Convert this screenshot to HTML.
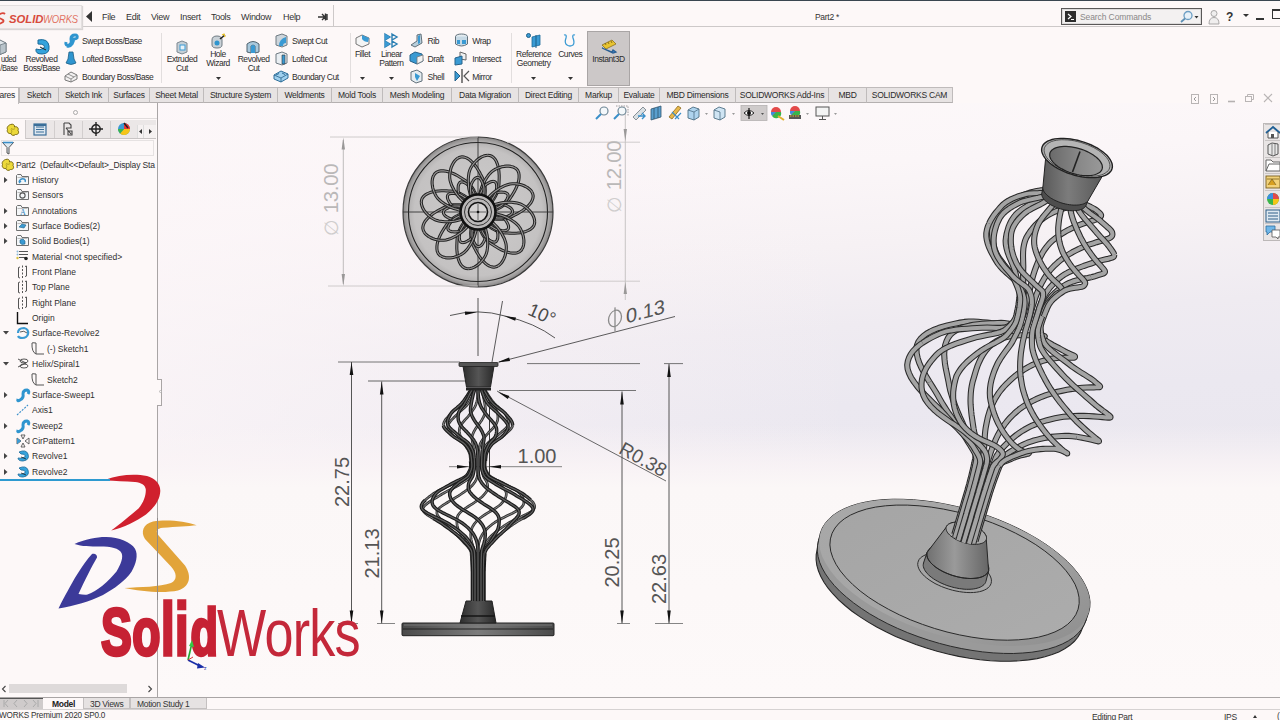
<!DOCTYPE html>
<html><head><meta charset="utf-8">
<style>
*{box-sizing:border-box}
html,body{margin:0;padding:0}
body{width:1280px;height:720px;overflow:hidden;position:relative;background:#fdf8f8;font-family:"Liberation Sans",sans-serif;color:#333}
.a{position:absolute}
svg.a{overflow:visible}
.t{position:absolute;white-space:nowrap;font-size:9px;letter-spacing:-0.3px;color:#3a3a3a;line-height:10px}
.mn{top:12px;color:#333}
.rl{position:absolute;white-space:nowrap;font-size:8.5px;letter-spacing:-0.45px;line-height:10px;color:#2c2c2c;transform:translateX(-50%)}
.rs{position:absolute;white-space:nowrap;font-size:8.5px;letter-spacing:-0.45px;line-height:10px;color:#2c2c2c}
.tr{position:absolute;white-space:nowrap;font-size:8.5px;line-height:11px;color:#2f2f2f}
#topline{left:0;top:0;width:1280px;height:1px;background:#3a4650}
#menubar{left:0;top:1px;width:1280px;height:26px;background:#fdf8f8}
.tab{position:absolute;top:87px;height:16px;background:#e7e3e3;border:1px solid #bfbbbb;border-bottom-color:#b4b0b0;font-size:8.5px;letter-spacing:-0.25px;line-height:15px;text-align:center;color:#2a2a2a;white-space:nowrap;overflow:hidden}
.tab.act{background:#fdf8f8;border-bottom:none;border-left:none}
</style></head>
<body>
<div class="a" style="left:158px;top:103px;width:1122px;height:594px;background:linear-gradient(176deg,#fdf9fa 0px,#fbf6f8 110px,#f6f1f4 190px,#efebf1 270px,#ebe8f0 350px,#eae7ef 430px,#eae7ef 600px)"></div>
<div class="a" style="left:158px;top:103px;width:1122px;height:594px;background:linear-gradient(90deg,rgba(252,246,248,.75) 0px,rgba(250,243,246,.35) 400px,rgba(250,243,246,0) 700px)"></div>
<div class="a" style="left:158px;top:103px;width:1122px;height:594px;background:linear-gradient(180deg,rgba(252,248,248,0) 0px,rgba(252,248,248,0) 322px,rgba(250,244,246,.8) 362px,#fbf7f7 385px,#fdf9f9 594px)"></div>
<div class="a" style="left:0;top:103px;width:157px;height:594px;background:#fdf8f8"></div>
<div class="a" style="left:157px;top:103px;width:1px;height:594px;background:#a9a5a5"></div>

<svg class="a" style="left:0;top:0" width="1280" height="720"><defs><radialGradient id="gdisk" cx="0.5" cy="0.5" r="0.5"><stop offset="0" stop-color="#cdcbcb"/><stop offset=".85" stop-color="#c4c2c2"/><stop offset=".93" stop-color="#b4b2b2"/><stop offset="1" stop-color="#8a8888"/></radialGradient><linearGradient id="gfcup" x1="0" x2="1"><stop offset="0" stop-color="#2e2e2e"/><stop offset=".5" stop-color="#555"/><stop offset="1" stop-color="#2a2a2a"/></linearGradient><linearGradient id="gbase" x1="0" x2="1"><stop offset="0" stop-color="#4a4a4a"/><stop offset=".5" stop-color="#7c7c7c"/><stop offset="1" stop-color="#4a4a4a"/></linearGradient></defs>
<circle cx="478" cy="212" r="75" fill="url(#gdisk)" stroke="#3a3a3a" stroke-width="1.2"/>
<circle cx="478" cy="212" r="69.5" fill="none" stroke="#222" stroke-width="1.1"/>
<path d="M403 212 H553 M478 137 V287" stroke="#333" stroke-width="0.9"/>
<g fill="none" stroke-linejoin="round"><defs><path id="t0" d="M484.0 212.0 484.0 212.0 484.0 212.0 484.0 212.0 484.0 212.0 484.0 212.0 484.0 212.0 484.0 212.0 484.0 212.0 484.0 212.0 484.0 212.0 484.0 212.0 484.0 212.0 484.0 212.0 484.0 212.0 484.0 212.0 484.0 212.0 484.0 212.0 484.0 212.0 484.0 212.0 484.0 212.0 484.0 212.0 484.0 212.0 484.1 212.0 484.1 212.0 484.1 212.0 484.2 212.0 484.2 212.0 484.3 212.0 484.3 212.0 484.4 212.0 484.5 212.0 484.5 212.0 484.6 212.0 484.7 212.0 484.8 212.0 484.9 212.0 485.1 212.0 485.7 212.0 486.4 211.9 487.4 211.8 488.5 211.7 489.7 211.5 491.0 211.3 492.2 211.0 493.5 210.6 494.6 210.2 495.9 209.7 497.3 209.1 498.6 208.4 500.1 207.7 501.5 206.8 503.0 205.7 504.4 204.6 505.8 203.4 507.2 202.0 508.5 200.5 509.7 198.9 510.8 197.2 512.0 195.3 513.3 193.2 514.7 190.9 516.0 188.3 517.1 185.7 518.1 183.0 518.8 180.2 519.1 177.5 519.1 174.9 518.7 172.6 517.8 170.6 516.5 169.0 514.8 167.8"/></defs><use href="#t0" stroke="#222" stroke-width="3.1"/><use href="#t0" stroke="#999797" stroke-width="1.1"/><defs><path id="t1" d="M483.2 209.0 483.2 209.0 483.2 209.0 483.2 209.0 483.2 209.0 483.2 209.0 483.2 209.0 483.2 209.0 483.2 209.0 483.2 209.0 483.2 209.0 483.2 209.0 483.2 209.0 483.2 209.0 483.2 209.0 483.2 209.0 483.2 209.0 483.2 209.0 483.2 209.0 483.2 209.0 483.2 209.0 483.2 209.0 483.2 209.0 483.2 209.0 483.3 209.0 483.3 208.9 483.3 208.9 483.4 208.9 483.4 208.9 483.5 208.8 483.5 208.8 483.6 208.8 483.7 208.7 483.7 208.7 483.8 208.6 483.9 208.6 484.0 208.5 484.2 208.4 484.6 208.1 485.2 207.7 486.0 207.1 486.9 206.5 487.9 205.7 488.9 204.9 489.8 204.0 490.7 203.1 491.5 202.1 492.4 201.1 493.2 199.9 494.1 198.6 494.9 197.2 495.7 195.7 496.5 194.1 497.2 192.4 497.8 190.6 498.3 188.7 498.6 186.8 498.9 184.8 499.0 182.8 499.1 180.6 499.2 178.1 499.2 175.4 499.0 172.5 498.7 169.6 498.2 166.8 497.4 164.1 496.4 161.6 495.1 159.3 493.5 157.5 491.8 156.2 489.8 155.5 487.8 155.3"/></defs><use href="#t1" stroke="#222" stroke-width="3.1"/><use href="#t1" stroke="#999797" stroke-width="1.1"/><defs><path id="t2" d="M481.0 206.8 481.0 206.8 481.0 206.8 481.0 206.8 481.0 206.8 481.0 206.8 481.0 206.8 481.0 206.8 481.0 206.8 481.0 206.8 481.0 206.8 481.0 206.8 481.0 206.8 481.0 206.8 481.0 206.8 481.0 206.8 481.0 206.8 481.0 206.8 481.0 206.8 481.0 206.8 481.0 206.8 481.0 206.8 481.0 206.8 481.0 206.8 481.0 206.7 481.1 206.7 481.1 206.7 481.1 206.6 481.1 206.6 481.2 206.5 481.2 206.5 481.2 206.4 481.3 206.3 481.3 206.3 481.4 206.2 481.4 206.1 481.5 206.0 481.6 205.8 481.8 205.3 482.1 204.6 482.5 203.8 483.0 202.7 483.4 201.6 483.9 200.4 484.2 199.2 484.5 197.9 484.8 196.7 485.0 195.3 485.1 193.9 485.2 192.3 485.3 190.7 485.2 189.0 485.1 187.2 484.8 185.4 484.4 183.6 483.9 181.7 483.3 179.9 482.5 178.0 481.6 176.2 480.5 174.2 479.4 172.0 478.0 169.7 476.5 167.3 474.8 165.0 472.9 162.8 470.8 160.8 468.7 159.1 466.5 157.9 464.2 157.1 462.0 156.8 460.0 157.2 458.1 158.0"/></defs><use href="#t2" stroke="#222" stroke-width="3.1"/><use href="#t2" stroke="#999797" stroke-width="1.1"/><defs><path id="t3" d="M478.0 206.0 478.0 206.0 478.0 206.0 478.0 206.0 478.0 206.0 478.0 206.0 478.0 206.0 478.0 206.0 478.0 206.0 478.0 206.0 478.0 206.0 478.0 206.0 478.0 206.0 478.0 206.0 478.0 206.0 478.0 206.0 478.0 206.0 478.0 206.0 478.0 206.0 478.0 206.0 478.0 206.0 478.0 206.0 478.0 206.0 478.0 205.9 478.0 205.9 478.0 205.9 478.0 205.8 478.0 205.8 478.0 205.7 478.0 205.7 478.0 205.6 478.0 205.5 478.0 205.5 478.0 205.4 478.0 205.3 478.0 205.2 478.0 205.1 478.0 204.9 478.0 204.3 477.9 203.6 477.8 202.6 477.7 201.5 477.5 200.3 477.3 199.0 477.0 197.8 476.6 196.5 476.2 195.4 475.7 194.1 475.1 192.7 474.4 191.4 473.7 189.9 472.8 188.5 471.7 187.0 470.6 185.6 469.4 184.2 468.0 182.8 466.5 181.5 464.9 180.3 463.2 179.2 461.3 178.0 459.2 176.7 456.9 175.3 454.3 174.0 451.7 172.9 449.0 171.9 446.2 171.2 443.5 170.9 440.9 170.9 438.6 171.3 436.6 172.2 435.0 173.5 433.8 175.2"/></defs><use href="#t3" stroke="#222" stroke-width="3.1"/><use href="#t3" stroke="#999797" stroke-width="1.1"/><defs><path id="t4" d="M475.0 206.8 475.0 206.8 475.0 206.8 475.0 206.8 475.0 206.8 475.0 206.8 475.0 206.8 475.0 206.8 475.0 206.8 475.0 206.8 475.0 206.8 475.0 206.8 475.0 206.8 475.0 206.8 475.0 206.8 475.0 206.8 475.0 206.8 475.0 206.8 475.0 206.8 475.0 206.8 475.0 206.8 475.0 206.8 475.0 206.8 475.0 206.8 475.0 206.7 474.9 206.7 474.9 206.7 474.9 206.6 474.9 206.6 474.8 206.5 474.8 206.5 474.8 206.4 474.7 206.3 474.7 206.3 474.6 206.2 474.6 206.1 474.5 206.0 474.4 205.8 474.1 205.4 473.7 204.8 473.1 204.0 472.5 203.1 471.7 202.1 470.9 201.1 470.0 200.2 469.1 199.3 468.1 198.5 467.1 197.6 465.9 196.8 464.6 195.9 463.2 195.1 461.7 194.3 460.1 193.5 458.4 192.8 456.6 192.2 454.7 191.7 452.8 191.4 450.8 191.1 448.8 191.0 446.6 190.9 444.1 190.8 441.4 190.8 438.5 191.0 435.6 191.3 432.8 191.8 430.1 192.6 427.6 193.6 425.3 194.9 423.5 196.5 422.2 198.2 421.5 200.2 421.3 202.2"/></defs><use href="#t4" stroke="#222" stroke-width="3.1"/><use href="#t4" stroke="#999797" stroke-width="1.1"/><defs><path id="t5" d="M472.8 209.0 472.8 209.0 472.8 209.0 472.8 209.0 472.8 209.0 472.8 209.0 472.8 209.0 472.8 209.0 472.8 209.0 472.8 209.0 472.8 209.0 472.8 209.0 472.8 209.0 472.8 209.0 472.8 209.0 472.8 209.0 472.8 209.0 472.8 209.0 472.8 209.0 472.8 209.0 472.8 209.0 472.8 209.0 472.8 209.0 472.8 209.0 472.7 209.0 472.7 208.9 472.7 208.9 472.6 208.9 472.6 208.9 472.5 208.8 472.5 208.8 472.4 208.8 472.3 208.7 472.3 208.7 472.2 208.6 472.1 208.6 472.0 208.5 471.8 208.4 471.3 208.2 470.6 207.9 469.8 207.5 468.7 207.0 467.6 206.6 466.4 206.1 465.2 205.8 463.9 205.5 462.7 205.2 461.3 205.0 459.9 204.9 458.3 204.8 456.7 204.7 455.0 204.8 453.2 204.9 451.4 205.2 449.6 205.6 447.7 206.1 445.9 206.7 444.0 207.5 442.2 208.4 440.2 209.5 438.0 210.6 435.7 212.0 433.3 213.5 431.0 215.2 428.8 217.1 426.8 219.2 425.1 221.3 423.9 223.5 423.1 225.8 422.8 228.0 423.2 230.0 424.0 231.9"/></defs><use href="#t5" stroke="#222" stroke-width="3.1"/><use href="#t5" stroke="#999797" stroke-width="1.1"/><defs><path id="t6" d="M472.0 212.0 472.0 212.0 472.0 212.0 472.0 212.0 472.0 212.0 472.0 212.0 472.0 212.0 472.0 212.0 472.0 212.0 472.0 212.0 472.0 212.0 472.0 212.0 472.0 212.0 472.0 212.0 472.0 212.0 472.0 212.0 472.0 212.0 472.0 212.0 472.0 212.0 472.0 212.0 472.0 212.0 472.0 212.0 472.0 212.0 471.9 212.0 471.9 212.0 471.9 212.0 471.8 212.0 471.8 212.0 471.7 212.0 471.7 212.0 471.6 212.0 471.5 212.0 471.5 212.0 471.4 212.0 471.3 212.0 471.2 212.0 471.1 212.0 470.9 212.0 470.3 212.0 469.6 212.1 468.6 212.2 467.5 212.3 466.3 212.5 465.0 212.7 463.8 213.0 462.5 213.4 461.4 213.8 460.1 214.3 458.7 214.9 457.4 215.6 455.9 216.3 454.5 217.2 453.0 218.3 451.6 219.4 450.2 220.6 448.8 222.0 447.5 223.5 446.3 225.1 445.2 226.8 444.0 228.7 442.7 230.8 441.3 233.1 440.0 235.7 438.9 238.3 437.9 241.0 437.2 243.8 436.9 246.5 436.9 249.1 437.3 251.4 438.2 253.4 439.5 255.0 441.2 256.2"/></defs><use href="#t6" stroke="#222" stroke-width="3.1"/><use href="#t6" stroke="#999797" stroke-width="1.1"/><defs><path id="t7" d="M472.8 215.0 472.8 215.0 472.8 215.0 472.8 215.0 472.8 215.0 472.8 215.0 472.8 215.0 472.8 215.0 472.8 215.0 472.8 215.0 472.8 215.0 472.8 215.0 472.8 215.0 472.8 215.0 472.8 215.0 472.8 215.0 472.8 215.0 472.8 215.0 472.8 215.0 472.8 215.0 472.8 215.0 472.8 215.0 472.8 215.0 472.8 215.0 472.7 215.0 472.7 215.1 472.7 215.1 472.6 215.1 472.6 215.1 472.5 215.2 472.5 215.2 472.4 215.2 472.3 215.3 472.3 215.3 472.2 215.4 472.1 215.4 472.0 215.5 471.8 215.6 471.4 215.9 470.8 216.3 470.0 216.9 469.1 217.5 468.1 218.3 467.1 219.1 466.2 220.0 465.3 220.9 464.5 221.9 463.6 222.9 462.8 224.1 461.9 225.4 461.1 226.8 460.3 228.3 459.5 229.9 458.8 231.6 458.2 233.4 457.7 235.3 457.4 237.2 457.1 239.2 457.0 241.2 456.9 243.4 456.8 245.9 456.8 248.6 457.0 251.5 457.3 254.4 457.8 257.2 458.6 259.9 459.6 262.4 460.9 264.7 462.5 266.5 464.2 267.8 466.2 268.5 468.2 268.7"/></defs><use href="#t7" stroke="#222" stroke-width="3.1"/><use href="#t7" stroke="#999797" stroke-width="1.1"/><defs><path id="t8" d="M475.0 217.2 475.0 217.2 475.0 217.2 475.0 217.2 475.0 217.2 475.0 217.2 475.0 217.2 475.0 217.2 475.0 217.2 475.0 217.2 475.0 217.2 475.0 217.2 475.0 217.2 475.0 217.2 475.0 217.2 475.0 217.2 475.0 217.2 475.0 217.2 475.0 217.2 475.0 217.2 475.0 217.2 475.0 217.2 475.0 217.2 475.0 217.2 475.0 217.3 474.9 217.3 474.9 217.3 474.9 217.4 474.9 217.4 474.8 217.5 474.8 217.5 474.8 217.6 474.7 217.7 474.7 217.7 474.6 217.8 474.6 217.9 474.5 218.0 474.4 218.2 474.2 218.7 473.9 219.4 473.5 220.2 473.0 221.3 472.6 222.4 472.1 223.6 471.8 224.8 471.5 226.1 471.2 227.3 471.0 228.7 470.9 230.1 470.8 231.7 470.7 233.3 470.8 235.0 470.9 236.8 471.2 238.6 471.6 240.4 472.1 242.3 472.7 244.1 473.5 246.0 474.4 247.8 475.5 249.8 476.6 252.0 478.0 254.3 479.5 256.7 481.2 259.0 483.1 261.2 485.2 263.2 487.3 264.9 489.5 266.1 491.8 266.9 494.0 267.2 496.0 266.8 497.9 266.0"/></defs><use href="#t8" stroke="#222" stroke-width="3.1"/><use href="#t8" stroke="#999797" stroke-width="1.1"/><defs><path id="t9" d="M478.0 218.0 478.0 218.0 478.0 218.0 478.0 218.0 478.0 218.0 478.0 218.0 478.0 218.0 478.0 218.0 478.0 218.0 478.0 218.0 478.0 218.0 478.0 218.0 478.0 218.0 478.0 218.0 478.0 218.0 478.0 218.0 478.0 218.0 478.0 218.0 478.0 218.0 478.0 218.0 478.0 218.0 478.0 218.0 478.0 218.0 478.0 218.1 478.0 218.1 478.0 218.1 478.0 218.2 478.0 218.2 478.0 218.3 478.0 218.3 478.0 218.4 478.0 218.5 478.0 218.5 478.0 218.6 478.0 218.7 478.0 218.8 478.0 218.9 478.0 219.1 478.0 219.7 478.1 220.4 478.2 221.4 478.3 222.5 478.5 223.7 478.7 225.0 479.0 226.2 479.4 227.5 479.8 228.6 480.3 229.9 480.9 231.3 481.6 232.6 482.3 234.1 483.2 235.5 484.3 237.0 485.4 238.4 486.6 239.8 488.0 241.2 489.5 242.5 491.1 243.7 492.8 244.8 494.7 246.0 496.8 247.3 499.1 248.7 501.7 250.0 504.3 251.1 507.0 252.1 509.8 252.8 512.5 253.1 515.1 253.1 517.4 252.7 519.4 251.8 521.0 250.5 522.2 248.8"/></defs><use href="#t9" stroke="#222" stroke-width="3.1"/><use href="#t9" stroke="#999797" stroke-width="1.1"/><defs><path id="t10" d="M481.0 217.2 481.0 217.2 481.0 217.2 481.0 217.2 481.0 217.2 481.0 217.2 481.0 217.2 481.0 217.2 481.0 217.2 481.0 217.2 481.0 217.2 481.0 217.2 481.0 217.2 481.0 217.2 481.0 217.2 481.0 217.2 481.0 217.2 481.0 217.2 481.0 217.2 481.0 217.2 481.0 217.2 481.0 217.2 481.0 217.2 481.0 217.2 481.0 217.3 481.1 217.3 481.1 217.3 481.1 217.4 481.1 217.4 481.2 217.5 481.2 217.5 481.2 217.6 481.3 217.7 481.3 217.7 481.4 217.8 481.4 217.9 481.5 218.0 481.6 218.2 481.9 218.6 482.3 219.2 482.9 220.0 483.5 220.9 484.3 221.9 485.1 222.9 486.0 223.8 486.9 224.7 487.9 225.5 488.9 226.4 490.1 227.2 491.4 228.1 492.8 228.9 494.3 229.7 495.9 230.5 497.6 231.2 499.4 231.8 501.3 232.3 503.2 232.6 505.2 232.9 507.2 233.0 509.4 233.1 511.9 233.2 514.6 233.2 517.5 233.0 520.4 232.7 523.2 232.2 525.9 231.4 528.4 230.4 530.7 229.1 532.5 227.5 533.8 225.8 534.5 223.8 534.7 221.8"/></defs><use href="#t10" stroke="#222" stroke-width="3.1"/><use href="#t10" stroke="#999797" stroke-width="1.1"/><defs><path id="t11" d="M483.2 215.0 483.2 215.0 483.2 215.0 483.2 215.0 483.2 215.0 483.2 215.0 483.2 215.0 483.2 215.0 483.2 215.0 483.2 215.0 483.2 215.0 483.2 215.0 483.2 215.0 483.2 215.0 483.2 215.0 483.2 215.0 483.2 215.0 483.2 215.0 483.2 215.0 483.2 215.0 483.2 215.0 483.2 215.0 483.2 215.0 483.2 215.0 483.3 215.0 483.3 215.1 483.3 215.1 483.4 215.1 483.4 215.1 483.5 215.2 483.5 215.2 483.6 215.2 483.7 215.3 483.7 215.3 483.8 215.4 483.9 215.4 484.0 215.5 484.2 215.6 484.7 215.8 485.4 216.1 486.2 216.5 487.3 217.0 488.4 217.4 489.6 217.9 490.8 218.2 492.1 218.5 493.3 218.8 494.7 219.0 496.1 219.1 497.7 219.2 499.3 219.3 501.0 219.2 502.8 219.1 504.6 218.8 506.4 218.4 508.3 217.9 510.1 217.3 512.0 216.5 513.8 215.6 515.8 214.5 518.0 213.4 520.3 212.0 522.7 210.5 525.0 208.8 527.2 206.9 529.2 204.8 530.9 202.7 532.1 200.5 532.9 198.2 533.2 196.0 532.8 194.0 532.0 192.1"/></defs><use href="#t11" stroke="#222" stroke-width="3.1"/><use href="#t11" stroke="#999797" stroke-width="1.1"/><defs><path id="t12" d="M514.8 167.8 512.9 166.9 510.8 166.4 508.6 166.1 506.4 166.1 504.1 166.4 501.9 166.8 499.7 167.5 497.6 168.3 495.5 169.2 493.6 170.3 491.7 171.7 489.8 173.6 488.0 175.8 486.4 178.1 484.9 180.6 483.6 183.0 482.5 185.4 481.5 187.9 480.7 190.7 479.9 193.5 479.4 196.2 478.9 198.5 478.6 200.3 478.4 201.4 478.3 202.3 478.2 203.0 478.1 203.7 478.0 204.3 478.0 204.6 478.0 204.8 478.0 204.8 478.0 204.8 478.0 204.7 478.0 204.6 478.0 204.5 478.0 204.4 477.9 204.2 477.9 204.1 477.8 203.9 477.7 203.5 477.6 203.0 477.4 202.4 477.2 201.7 476.9 200.8 476.6 199.9 476.2 199.0 475.8 197.9 475.2 196.3 474.4 194.5 473.6 192.5 472.5 190.5 471.5 188.7 470.3 187.2 469.2 186.0 468.0 185.0 466.8 184.0 465.4 183.2 464.1 182.5 462.8 182.0 461.7 181.9 460.6 182.1 459.8 182.6 459.2 183.5 458.7 184.5 458.3 185.6 458.2 186.9 458.1 188.2 458.1 189.5 458.3 190.9 458.5 192.1 458.9 193.5 459.6 195.0 460.4 196.6 461.4 198.1 462.5 199.6 463.5 200.8 464.4 201.9 465.1 202.9 465.9 203.7 466.6 204.5 467.4 205.2 468.1 205.8 468.7 206.3 469.4 206.9 470.1 207.3 470.8 207.8 471.5 208.2 471.8 208.4"/></defs><use href="#t12" stroke="#222" stroke-width="3.1"/><use href="#t12" stroke="#999797" stroke-width="1.1"/><defs><path id="t13" d="M487.8 155.3 485.7 155.5 483.6 156.1 481.6 156.9 479.7 158.1 477.8 159.4 476.1 161.0 474.5 162.6 473.1 164.4 471.8 166.2 470.7 168.0 469.7 170.3 469.0 172.8 468.6 175.6 468.3 178.4 468.3 181.3 468.4 184.1 468.6 186.7 469.0 189.4 469.7 192.2 470.4 195.0 471.3 197.6 472.1 199.9 472.7 201.6 473.1 202.6 473.4 203.4 473.7 204.1 473.9 204.8 474.2 205.3 474.3 205.6 474.4 205.8 474.4 205.8 474.4 205.8 474.4 205.7 474.3 205.6 474.3 205.5 474.2 205.4 474.0 205.3 473.9 205.2 473.7 205.1 473.5 204.8 473.1 204.5 472.7 204.0 472.1 203.5 471.5 202.9 470.8 202.3 470.0 201.6 469.0 200.9 467.7 199.8 466.2 198.6 464.4 197.3 462.5 196.1 460.7 195.1 458.9 194.3 457.4 193.9 455.9 193.6 454.3 193.4 452.7 193.3 451.2 193.4 449.9 193.6 448.8 194.1 448.0 194.8 447.6 195.7 447.4 196.7 447.5 197.8 447.8 199.0 448.3 200.2 448.9 201.4 449.6 202.5 450.3 203.6 451.1 204.6 452.2 205.6 453.6 206.5 455.1 207.4 456.7 208.3 458.3 209.0 459.8 209.6 461.2 210.1 462.3 210.5 463.4 210.9 464.4 211.2 465.4 211.4 466.3 211.6 467.2 211.7 468.0 211.8 468.8 211.9 469.7 212.0 470.5 212.0 470.8 212.0"/></defs><use href="#t13" stroke="#222" stroke-width="3.1"/><use href="#t13" stroke="#999797" stroke-width="1.1"/><defs><path id="t14" d="M458.1 158.0 456.4 159.2 454.9 160.8 453.6 162.5 452.5 164.5 451.5 166.6 450.8 168.7 450.3 171.0 449.9 173.2 449.7 175.4 449.7 177.6 450.0 180.0 450.7 182.6 451.6 185.2 452.9 187.8 454.2 190.3 455.7 192.6 457.2 194.8 458.9 196.9 460.9 199.0 463.0 201.1 465.0 202.9 466.8 204.5 468.2 205.6 469.0 206.3 469.7 206.9 470.3 207.4 470.9 207.8 471.3 208.1 471.6 208.3 471.8 208.4 471.8 208.4 471.8 208.4 471.7 208.4 471.6 208.3 471.5 208.3 471.4 208.2 471.2 208.2 471.0 208.1 470.8 208.1 470.5 208.0 470.0 207.9 469.4 207.7 468.6 207.5 467.8 207.4 466.9 207.2 465.9 207.0 464.6 206.8 463.0 206.6 461.0 206.3 458.9 206.1 456.7 206.0 454.6 206.0 452.7 206.2 451.1 206.7 449.6 207.2 448.2 207.8 446.7 208.5 445.5 209.2 444.4 210.1 443.7 211.1 443.4 212.1 443.5 213.1 443.9 214.1 444.5 215.0 445.3 215.9 446.3 216.6 447.5 217.3 448.6 218.0 449.8 218.5 451.0 219.0 452.4 219.3 454.1 219.5 455.9 219.5 457.7 219.4 459.5 219.2 461.1 219.0 462.5 218.8 463.7 218.6 464.8 218.3 465.8 218.1 466.7 217.8 467.6 217.5 468.5 217.2 469.3 216.9 470.0 216.5 470.8 216.1 471.5 215.7 471.8 215.6"/></defs><use href="#t14" stroke="#222" stroke-width="3.1"/><use href="#t14" stroke="#999797" stroke-width="1.1"/><defs><path id="t15" d="M433.8 175.2 432.9 177.1 432.4 179.2 432.1 181.4 432.1 183.6 432.4 185.9 432.8 188.1 433.5 190.3 434.3 192.4 435.2 194.5 436.3 196.4 437.7 198.3 439.6 200.2 441.8 202.0 444.1 203.6 446.6 205.1 449.0 206.4 451.4 207.5 453.9 208.5 456.7 209.3 459.5 210.1 462.2 210.6 464.5 211.1 466.3 211.4 467.4 211.6 468.3 211.7 469.0 211.8 469.7 211.9 470.3 212.0 470.6 212.0 470.8 212.0 470.8 212.0 470.8 212.0 470.7 212.0 470.6 212.0 470.5 212.0 470.4 212.0 470.2 212.1 470.1 212.1 469.9 212.2 469.5 212.3 469.0 212.4 468.4 212.6 467.7 212.8 466.8 213.1 465.9 213.4 465.0 213.8 463.9 214.2 462.3 214.8 460.5 215.6 458.5 216.4 456.5 217.5 454.7 218.5 453.2 219.7 452.0 220.8 451.0 222.0 450.0 223.2 449.2 224.6 448.5 225.9 448.0 227.2 447.9 228.3 448.1 229.4 448.6 230.2 449.5 230.8 450.5 231.3 451.6 231.7 452.9 231.8 454.2 231.9 455.5 231.9 456.9 231.7 458.1 231.5 459.5 231.1 461.0 230.4 462.6 229.6 464.1 228.6 465.6 227.5 466.8 226.5 467.9 225.6 468.9 224.9 469.7 224.1 470.5 223.4 471.2 222.6 471.8 221.9 472.3 221.3 472.9 220.6 473.3 219.9 473.8 219.2 474.2 218.5 474.4 218.2"/></defs><use href="#t15" stroke="#222" stroke-width="3.1"/><use href="#t15" stroke="#999797" stroke-width="1.1"/><defs><path id="t16" d="M421.3 202.2 421.5 204.3 422.1 206.4 422.9 208.4 424.1 210.3 425.4 212.2 427.0 213.9 428.6 215.5 430.4 216.9 432.2 218.2 434.0 219.3 436.3 220.3 438.8 221.0 441.6 221.4 444.4 221.7 447.3 221.7 450.1 221.6 452.7 221.4 455.4 221.0 458.2 220.3 461.0 219.6 463.6 218.7 465.9 217.9 467.6 217.3 468.6 216.9 469.4 216.6 470.1 216.3 470.8 216.1 471.3 215.8 471.6 215.7 471.8 215.6 471.8 215.6 471.8 215.6 471.7 215.6 471.6 215.7 471.5 215.7 471.4 215.8 471.3 216.0 471.2 216.1 471.1 216.3 470.8 216.5 470.5 216.9 470.0 217.3 469.5 217.9 468.9 218.5 468.3 219.2 467.6 220.0 466.9 221.0 465.8 222.3 464.6 223.8 463.3 225.6 462.1 227.5 461.1 229.3 460.3 231.1 459.9 232.6 459.6 234.1 459.4 235.7 459.3 237.3 459.4 238.8 459.6 240.1 460.1 241.2 460.8 242.0 461.7 242.4 462.7 242.6 463.8 242.5 465.0 242.2 466.2 241.7 467.4 241.1 468.5 240.4 469.6 239.7 470.6 238.9 471.6 237.8 472.5 236.4 473.4 234.9 474.3 233.3 475.0 231.7 475.6 230.2 476.1 228.8 476.5 227.7 476.9 226.6 477.2 225.6 477.4 224.6 477.6 223.7 477.7 222.8 477.8 222.0 477.9 221.2 478.0 220.3 478.0 219.5 478.0 219.2"/></defs><use href="#t16" stroke="#222" stroke-width="3.1"/><use href="#t16" stroke="#999797" stroke-width="1.1"/><defs><path id="t17" d="M424.0 231.9 425.2 233.6 426.8 235.1 428.5 236.4 430.5 237.5 432.6 238.5 434.7 239.2 437.0 239.7 439.2 240.1 441.4 240.3 443.6 240.3 446.0 240.0 448.6 239.3 451.2 238.4 453.8 237.1 456.3 235.8 458.6 234.3 460.8 232.8 462.9 231.1 465.0 229.1 467.1 227.0 468.9 225.0 470.5 223.2 471.6 221.8 472.3 221.0 472.9 220.3 473.4 219.7 473.8 219.1 474.1 218.7 474.3 218.4 474.4 218.2 474.4 218.2 474.4 218.2 474.4 218.3 474.3 218.4 474.3 218.5 474.2 218.6 474.2 218.8 474.1 219.0 474.1 219.2 474.0 219.5 473.9 220.0 473.7 220.6 473.5 221.4 473.4 222.2 473.2 223.1 473.0 224.1 472.8 225.4 472.6 227.0 472.3 229.0 472.1 231.1 472.0 233.3 472.0 235.4 472.2 237.3 472.7 238.9 473.2 240.4 473.8 241.8 474.5 243.3 475.2 244.5 476.1 245.6 477.1 246.3 478.1 246.6 479.1 246.5 480.1 246.1 481.0 245.5 481.9 244.7 482.6 243.7 483.3 242.5 484.0 241.4 484.5 240.2 485.0 239.0 485.3 237.6 485.5 235.9 485.5 234.1 485.4 232.3 485.2 230.5 485.0 228.9 484.8 227.5 484.6 226.3 484.3 225.2 484.1 224.2 483.8 223.3 483.5 222.4 483.2 221.5 482.9 220.7 482.5 220.0 482.1 219.2 481.7 218.5 481.6 218.2"/></defs><use href="#t17" stroke="#222" stroke-width="3.1"/><use href="#t17" stroke="#999797" stroke-width="1.1"/><defs><path id="t18" d="M441.2 256.2 443.1 257.1 445.2 257.6 447.4 257.9 449.6 257.9 451.9 257.6 454.1 257.2 456.3 256.5 458.4 255.7 460.5 254.8 462.4 253.7 464.3 252.3 466.2 250.4 468.0 248.2 469.6 245.9 471.1 243.4 472.4 241.0 473.5 238.6 474.5 236.1 475.3 233.3 476.1 230.5 476.6 227.8 477.1 225.5 477.4 223.7 477.6 222.6 477.7 221.7 477.8 221.0 477.9 220.3 478.0 219.7 478.0 219.4 478.0 219.2 478.0 219.2 478.0 219.2 478.0 219.3 478.0 219.4 478.0 219.5 478.0 219.6 478.1 219.8 478.1 219.9 478.2 220.1 478.3 220.5 478.4 221.0 478.6 221.6 478.8 222.3 479.1 223.2 479.4 224.1 479.8 225.0 480.2 226.1 480.8 227.7 481.6 229.5 482.4 231.5 483.5 233.5 484.5 235.3 485.7 236.8 486.8 238.0 488.0 239.0 489.2 240.0 490.6 240.8 491.9 241.5 493.2 242.0 494.3 242.1 495.4 241.9 496.2 241.4 496.8 240.5 497.3 239.5 497.7 238.4 497.8 237.1 497.9 235.8 497.9 234.5 497.7 233.1 497.5 231.9 497.1 230.5 496.4 229.0 495.6 227.4 494.6 225.9 493.5 224.4 492.5 223.2 491.6 222.1 490.9 221.1 490.1 220.3 489.4 219.5 488.6 218.8 487.9 218.2 487.3 217.7 486.6 217.1 485.9 216.7 485.2 216.2 484.5 215.8 484.2 215.6"/></defs><use href="#t18" stroke="#222" stroke-width="3.1"/><use href="#t18" stroke="#999797" stroke-width="1.1"/><defs><path id="t19" d="M468.2 268.7 470.3 268.5 472.4 267.9 474.4 267.1 476.3 265.9 478.2 264.6 479.9 263.0 481.5 261.4 482.9 259.6 484.2 257.8 485.3 256.0 486.3 253.7 487.0 251.2 487.4 248.4 487.7 245.6 487.7 242.7 487.6 239.9 487.4 237.3 487.0 234.6 486.3 231.8 485.6 229.0 484.7 226.4 483.9 224.1 483.3 222.4 482.9 221.4 482.6 220.6 482.3 219.9 482.1 219.2 481.8 218.7 481.7 218.4 481.6 218.2 481.6 218.2 481.6 218.2 481.6 218.3 481.7 218.4 481.7 218.5 481.8 218.6 482.0 218.7 482.1 218.8 482.3 218.9 482.5 219.2 482.9 219.5 483.3 220.0 483.9 220.5 484.5 221.1 485.2 221.7 486.0 222.4 487.0 223.1 488.3 224.2 489.8 225.4 491.6 226.7 493.5 227.9 495.3 228.9 497.1 229.7 498.6 230.1 500.1 230.4 501.7 230.6 503.3 230.7 504.8 230.6 506.1 230.4 507.2 229.9 508.0 229.2 508.4 228.3 508.6 227.3 508.5 226.2 508.2 225.0 507.7 223.8 507.1 222.6 506.4 221.5 505.7 220.4 504.9 219.4 503.8 218.4 502.4 217.5 500.9 216.6 499.3 215.7 497.7 215.0 496.2 214.4 494.8 213.9 493.7 213.5 492.6 213.1 491.6 212.8 490.6 212.6 489.7 212.4 488.8 212.3 488.0 212.2 487.2 212.1 486.3 212.0 485.5 212.0 485.2 212.0"/></defs><use href="#t19" stroke="#222" stroke-width="3.1"/><use href="#t19" stroke="#999797" stroke-width="1.1"/><defs><path id="t20" d="M497.9 266.0 499.6 264.8 501.1 263.2 502.4 261.5 503.5 259.5 504.5 257.4 505.2 255.3 505.7 253.0 506.1 250.8 506.3 248.6 506.3 246.4 506.0 244.0 505.3 241.4 504.4 238.8 503.1 236.2 501.8 233.7 500.3 231.4 498.8 229.2 497.1 227.1 495.1 225.0 493.0 222.9 491.0 221.1 489.2 219.5 487.8 218.4 487.0 217.7 486.3 217.1 485.7 216.6 485.1 216.2 484.7 215.9 484.4 215.7 484.2 215.6 484.2 215.6 484.2 215.6 484.3 215.6 484.4 215.7 484.5 215.7 484.6 215.8 484.8 215.8 485.0 215.9 485.2 215.9 485.5 216.0 486.0 216.1 486.6 216.3 487.4 216.5 488.2 216.6 489.1 216.8 490.1 217.0 491.4 217.2 493.0 217.4 495.0 217.7 497.1 217.9 499.3 218.0 501.4 218.0 503.3 217.8 504.9 217.3 506.4 216.8 507.8 216.2 509.3 215.5 510.5 214.8 511.6 213.9 512.3 212.9 512.6 211.9 512.5 210.9 512.1 209.9 511.5 209.0 510.7 208.1 509.7 207.4 508.5 206.7 507.4 206.0 506.2 205.5 505.0 205.0 503.6 204.7 501.9 204.5 500.1 204.5 498.3 204.6 496.5 204.8 494.9 205.0 493.5 205.2 492.3 205.4 491.2 205.7 490.2 205.9 489.3 206.2 488.4 206.5 487.5 206.8 486.7 207.1 486.0 207.5 485.2 207.9 484.5 208.3 484.2 208.4"/></defs><use href="#t20" stroke="#222" stroke-width="3.1"/><use href="#t20" stroke="#999797" stroke-width="1.1"/><defs><path id="t21" d="M522.2 248.8 523.1 246.9 523.6 244.8 523.9 242.6 523.9 240.4 523.6 238.1 523.2 235.9 522.5 233.7 521.7 231.6 520.8 229.5 519.7 227.6 518.3 225.7 516.4 223.8 514.2 222.0 511.9 220.4 509.4 218.9 507.0 217.6 504.6 216.5 502.1 215.5 499.3 214.7 496.5 213.9 493.8 213.4 491.5 212.9 489.7 212.6 488.6 212.4 487.7 212.3 487.0 212.2 486.3 212.1 485.7 212.0 485.4 212.0 485.2 212.0 485.2 212.0 485.2 212.0 485.3 212.0 485.4 212.0 485.5 212.0 485.6 212.0 485.8 211.9 485.9 211.9 486.1 211.8 486.5 211.7 487.0 211.6 487.6 211.4 488.3 211.2 489.2 210.9 490.1 210.6 491.0 210.2 492.1 209.8 493.7 209.2 495.5 208.4 497.5 207.6 499.5 206.5 501.3 205.5 502.8 204.3 504.0 203.2 505.0 202.0 506.0 200.8 506.8 199.4 507.5 198.1 508.0 196.8 508.1 195.7 507.9 194.6 507.4 193.8 506.5 193.2 505.5 192.7 504.4 192.3 503.1 192.2 501.8 192.1 500.5 192.1 499.1 192.3 497.9 192.5 496.5 192.9 495.0 193.6 493.4 194.4 491.9 195.4 490.4 196.5 489.2 197.5 488.1 198.4 487.1 199.1 486.3 199.9 485.5 200.6 484.8 201.4 484.2 202.1 483.7 202.7 483.1 203.4 482.7 204.1 482.2 204.8 481.8 205.5 481.6 205.8"/></defs><use href="#t21" stroke="#222" stroke-width="3.1"/><use href="#t21" stroke="#999797" stroke-width="1.1"/><defs><path id="t22" d="M534.7 221.8 534.5 219.7 533.9 217.6 533.1 215.6 531.9 213.7 530.6 211.8 529.0 210.1 527.4 208.5 525.6 207.1 523.8 205.8 522.0 204.7 519.7 203.7 517.2 203.0 514.4 202.6 511.6 202.3 508.7 202.3 505.9 202.4 503.3 202.6 500.6 203.0 497.8 203.7 495.0 204.4 492.4 205.3 490.1 206.1 488.4 206.7 487.4 207.1 486.6 207.4 485.9 207.7 485.2 207.9 484.7 208.2 484.4 208.3 484.2 208.4 484.2 208.4 484.2 208.4 484.3 208.4 484.4 208.3 484.5 208.3 484.6 208.2 484.7 208.0 484.8 207.9 484.9 207.7 485.2 207.5 485.5 207.1 486.0 206.7 486.5 206.1 487.1 205.5 487.7 204.8 488.4 204.0 489.1 203.0 490.2 201.7 491.4 200.2 492.7 198.4 493.9 196.5 494.9 194.7 495.7 192.9 496.1 191.4 496.4 189.9 496.6 188.3 496.7 186.7 496.6 185.2 496.4 183.9 495.9 182.8 495.2 182.0 494.3 181.6 493.3 181.4 492.2 181.5 491.0 181.8 489.8 182.3 488.6 182.9 487.5 183.6 486.4 184.3 485.4 185.1 484.4 186.2 483.5 187.6 482.6 189.1 481.7 190.7 481.0 192.3 480.4 193.8 479.9 195.2 479.5 196.3 479.1 197.4 478.8 198.4 478.6 199.4 478.4 200.3 478.3 201.2 478.2 202.0 478.1 202.8 478.0 203.7 478.0 204.5 478.0 204.8"/></defs><use href="#t22" stroke="#222" stroke-width="3.1"/><use href="#t22" stroke="#999797" stroke-width="1.1"/><defs><path id="t23" d="M532.0 192.1 530.8 190.4 529.2 188.9 527.5 187.6 525.5 186.5 523.4 185.5 521.3 184.8 519.0 184.3 516.8 183.9 514.6 183.7 512.4 183.7 510.0 184.0 507.4 184.7 504.8 185.6 502.2 186.9 499.7 188.2 497.4 189.7 495.2 191.2 493.1 192.9 491.0 194.9 488.9 197.0 487.1 199.0 485.5 200.8 484.4 202.2 483.7 203.0 483.1 203.7 482.6 204.3 482.2 204.9 481.9 205.3 481.7 205.6 481.6 205.8 481.6 205.8 481.6 205.8 481.6 205.7 481.7 205.6 481.7 205.5 481.8 205.4 481.8 205.2 481.9 205.0 481.9 204.8 482.0 204.5 482.1 204.0 482.3 203.4 482.5 202.6 482.6 201.8 482.8 200.9 483.0 199.9 483.2 198.6 483.4 197.0 483.7 195.0 483.9 192.9 484.0 190.7 484.0 188.6 483.8 186.7 483.3 185.1 482.8 183.6 482.2 182.2 481.5 180.7 480.8 179.5 479.9 178.4 478.9 177.7 477.9 177.4 476.9 177.5 475.9 177.9 475.0 178.5 474.1 179.3 473.4 180.3 472.7 181.5 472.0 182.6 471.5 183.8 471.0 185.0 470.7 186.4 470.5 188.1 470.5 189.9 470.6 191.7 470.8 193.5 471.0 195.1 471.2 196.5 471.4 197.7 471.7 198.8 471.9 199.8 472.2 200.7 472.5 201.6 472.8 202.5 473.1 203.3 473.5 204.0 473.9 204.8 474.3 205.5 474.4 205.8"/></defs><use href="#t23" stroke="#222" stroke-width="3.1"/><use href="#t23" stroke="#999797" stroke-width="1.1"/></g>
<circle cx="478" cy="212" r="17.5" fill="#b9b7b7" stroke="#111" stroke-width="2.6"/>
<circle cx="478" cy="212" r="13.5" fill="none" stroke="#333" stroke-width="1"/>
<circle cx="478" cy="212" r="9.5" fill="#d5d3d3" stroke="#111" stroke-width="1.6"/>
<path d="M470 212 H486 M478 204 V220" stroke="#333" stroke-width="0.7"/><circle cx="478" cy="212" r="1.3" fill="#111"/>
<path d="M330 137 H478 M328 286 H478" stroke="#c9c6c6" stroke-width="0.9"/>
<path d="M343.3 140 V284" stroke="#b9b6b6" stroke-width="0.9"/>
<path d="M343.3 137.5 L345.0 149.5 L341.6 149.5Z" fill="#9a9898"/><path d="M343.3 286.0 L341.6 274.0 L345.0 274.0Z" fill="#9a9898"/>
<text transform="translate(338,188.5) rotate(-90)" text-anchor="middle" font-family="Liberation Sans" font-size="20.5" fill="#bab8b8" letter-spacing="-0.4">13.00</text><text transform="translate(337.5,227) rotate(-90)" text-anchor="middle" font-family="Liberation Sans" font-size="19" fill="#cfcdcd">&#8709;</text>
<path d="M507 142.2 H640 M540 281.2 H640" stroke="#c9c6c6" stroke-width="0.9"/>
<path d="M625.3 108 V300" stroke="#c2bfbf" stroke-width="0.9"/>
<path d="M625.3 141.0 L623.6 129.0 L627.0 129.0Z" fill="#9a9898"/><path d="M625.3 282.0 L627.0 294.0 L623.6 294.0Z" fill="#9a9898"/>
<text transform="translate(621,165.5) rotate(-90)" text-anchor="middle" font-family="Liberation Sans" font-size="20.5" fill="#bab8b8" letter-spacing="-0.4">12.00</text><text transform="translate(620.5,204) rotate(-90)" text-anchor="middle" font-family="Liberation Sans" font-size="19" fill="#cfcdcd">&#8709;</text>
<path d="M478 298 V356" stroke="#444" stroke-width="0.9"/>
<path d="M492 362 L502.5 301" stroke="#333" stroke-width="0.8"/>
<path d="M450 315.5 Q478 308 505 316 Q535 323 555 338" stroke="#444" stroke-width="0.9" fill="none"/>
<path d="M477.0 312.2 L465.2 314.9 L464.9 311.6Z" fill="#111"/><path d="M504.0 316.0 L516.0 317.5 L515.2 320.7Z" fill="#111"/>
<text transform="translate(539.5,320) rotate(24)" text-anchor="middle" font-family="Liberation Sans" font-size="18.5" fill="#4a4a4a">10&#176;</text>
<path d="M499 362 L675 316.5" stroke="#333" stroke-width="0.8"/>
<path d="M497.0 362.5 L509.1 357.4 L510.0 360.9Z" fill="#111"/>
<g transform="translate(607,328.5) skewY(-15)"><ellipse cx="8" cy="-8" rx="6.5" ry="8" fill="none" stroke="#8a8a8a" stroke-width="1.3"/><path d="M8 -19 V5" stroke="#8a8a8a" stroke-width="1.3"/><text x="19" y="0" font-family="Liberation Sans" font-size="20" fill="#555">0.13</text></g>
<path d="M338 362 H460 M527 363.6 H640 M664 363.6 H683" stroke="#666" stroke-width="0.9"/>
<path d="M368 381 H473" stroke="#555" stroke-width="0.9"/>
<path d="M499 390.5 H636" stroke="#666" stroke-width="0.9"/>
<path d="M351.5 362 V624 M381.7 381.5 V624 M622 391.5 V624 M669 364 V624" stroke="#444" stroke-width="0.9"/>
<path d="M338 623.5 H358 M377 623.5 H395 M617 623.5 H630 M655 623.5 H683" stroke="#777" stroke-width="0.9"/>
<path d="M351.5 362.0 L353.3 375.0 L349.7 375.0Z" fill="#111"/><path d="M351.5 623.5 L349.7 610.5 L353.3 610.5Z" fill="#111"/>
<path d="M381.7 381.5 L383.5 394.5 L379.9 394.5Z" fill="#111"/><path d="M381.7 623.5 L379.9 610.5 L383.5 610.5Z" fill="#111"/>
<path d="M622.0 391.5 L623.8 404.5 L620.2 404.5Z" fill="#111"/><path d="M622.0 623.5 L620.2 610.5 L623.8 610.5Z" fill="#111"/>
<path d="M669.0 364.0 L670.8 377.0 L667.2 377.0Z" fill="#111"/><path d="M669.0 623.5 L667.2 610.5 L670.8 610.5Z" fill="#111"/>
<text transform="translate(349,482) rotate(-90)" text-anchor="middle" font-family="Liberation Sans" font-size="20" fill="#555">22.75</text>
<text transform="translate(379,553.5) rotate(-90)" text-anchor="middle" font-family="Liberation Sans" font-size="20" fill="#555">21.13</text>
<text transform="translate(619,562.5) rotate(-90)" text-anchor="middle" font-family="Liberation Sans" font-size="20" fill="#555">20.25</text>
<text transform="translate(666,579) rotate(-90)" text-anchor="middle" font-family="Liberation Sans" font-size="20" fill="#555">22.63</text>
<path d="M449 466.7 H562" stroke="#777" stroke-width="0.9"/>
<path d="M469.0 466.7 L457.0 468.4 L457.0 465.0Z" fill="#111"/><path d="M489.0 466.7 L501.0 465.0 L501.0 468.4Z" fill="#111"/>
<path d="M489.5 397 V474" stroke="#222" stroke-width="0.9"/>
<text x="537" y="463" text-anchor="middle" font-family="Liberation Sans" font-size="20" fill="#555">1.00</text>
<path d="M497 391 L666 481" stroke="#444" stroke-width="0.8"/>
<path d="M498.0 392.0 L509.4 396.1 L507.8 399.1Z" fill="#111"/>
<text transform="translate(640,465) rotate(29)" text-anchor="middle" font-family="Liberation Sans" font-size="19" fill="#555">R0.38</text>
<rect x="402" y="623" width="152" height="12.7" rx="1" fill="url(#gbase)" stroke="#222" stroke-width="1"/>
<path d="M403 629 H553" stroke="#222" stroke-width="1.2"/><path d="M404 625 H552" stroke="#777" stroke-width="1"/>
<path d="M466 601 H492 L496 623 H460Z" fill="url(#gfcup)" stroke="#222" stroke-width="1"/>
<path d="M461 616 H495" stroke="#151515" stroke-width="1.5"/>
<rect x="471" y="552" width="14" height="50" fill="#4a4a4a"/>
<g fill="none" stroke-linejoin="round"><defs><path id="f0" d="M471.1 553.1 470.9 551.8 470.3 550.5 469.6 549.1 468.6 547.8 467.5 546.5 466.3 545.1 465.0 543.8 463.8 542.5 462.5 541.1 461.4 539.8 460.1 538.5 458.7 537.1 457.4 535.8 455.9 534.5 454.5 533.2 453.0 531.8 451.6 530.5 450.2 529.2 448.8 527.8 447.5 526.5 446.3 525.2 445.2 523.8 444.0 522.5 442.7 521.2 441.3 519.8 440.0 518.5 438.9 517.2 437.9 515.8 437.2 514.5 436.9 513.2 436.9 511.8 437.3 510.5 438.2 509.2 439.5 507.8 441.2 506.5 443.1 505.2 445.2 503.9 447.4 502.5 449.6 501.2 451.9 499.9 454.1 498.5 456.3 497.2 458.4 495.9 460.5 494.5 462.4 493.2 464.3 491.9 466.2 490.5 468.0 489.2 469.6 487.9 471.1 486.5 472.4 485.2 473.5 483.9 474.5 482.5 475.3 481.2 476.1 479.9 476.6 478.5 477.1 477.2 477.4 475.9 477.6 474.6 477.7 473.2 477.8 471.9 477.9 470.6 478.0 469.2 478.0 467.9 478.0 466.6 478.0 465.2 478.0 463.9 478.0 462.6 478.0 461.2 478.0 459.9 478.0 458.6 478.1 457.2 478.1 455.9 478.2 454.6 478.3 453.2 478.4 451.9 478.6 450.6 478.8 449.2 479.1 447.9 479.4 446.6 479.8 445.3 480.2 443.9 480.8 442.6 481.6 441.3 482.4 439.9 483.5 438.6 484.5 437.3 485.7 435.9 486.8 434.6 488.0 433.3 489.2 431.9 490.6 430.6 491.9 429.3 493.2 427.9 494.3 426.6 495.4 425.3 496.2 423.9 496.8 422.6 497.3 421.3 497.7 419.9 497.8 418.6 497.9 417.3 497.9 416.0 497.7 414.6 497.5 413.3 497.1 412.0 496.4 410.6 495.6 409.3 494.6 408.0 493.5 406.6 492.5 405.3 491.6 404.0 490.9 402.6 490.1 401.3 489.4 400.0 488.6 398.6 487.9 397.3 487.3 396.0 486.6 394.6 485.9 393.3 485.2 392.0 484.5 390.6 484.2 389.3"/></defs><use href="#f0" stroke="#333" stroke-width="2.7"/><use href="#f0" stroke="#8a8a8a" stroke-width="1.0"/><defs><path id="f1" d="M433.3 518.5 431.0 517.2 428.8 515.8 426.8 514.5 425.1 513.2 423.9 511.8 423.1 510.5 422.8 509.2 423.2 507.8 424.0 506.5 425.2 505.2 426.8 503.9 428.5 502.5 430.5 501.2 432.6 499.9 434.7 498.5 437.0 497.2 439.2 495.9 441.4 494.5 443.6 493.2 446.0 491.9 448.6 490.5 451.2 489.2 453.8 487.9 456.3 486.5 458.6 485.2 460.8 483.9 462.9 482.5 465.0 481.2 467.1 479.9 468.9 478.5 470.5 477.2 471.6 475.9 472.3 474.6 472.9 473.2 473.4 471.9 473.8 470.6 474.1 469.2 474.3 467.9 474.4 466.6 474.4 465.2 474.4 463.9 474.4 462.6 474.3 461.2 474.3 459.9 474.2 458.6 474.2 457.2 474.1 455.9 474.1 454.6 474.0 453.2 473.9 451.9 473.7 450.6 473.5 449.2 473.4 447.9 473.2 446.6 473.0 445.3 472.8 443.9 472.6 442.6 472.3 441.3 472.1 439.9 472.0 438.6 472.0 437.3 472.2 435.9 472.7 434.6 473.2 433.3 473.8 431.9 474.5 430.6 475.2 429.3 476.1 427.9 477.1 426.6 478.1 425.3 479.1 423.9 480.1 422.6 481.0 421.3 481.9 419.9 482.6 418.6 483.3 417.3 484.0 416.0 484.5 414.6 485.0 413.3 485.3 412.0 485.5 410.6 485.5 409.3 485.4 408.0 485.2 406.6 485.0 405.3 484.8 404.0 484.6 402.6 484.3 401.3 484.1 400.0 483.8 398.6 483.5 397.3 483.2 396.0 482.9 394.6 482.5 393.3 482.1 392.0 481.7 390.6 481.6 389.3"/></defs><use href="#f1" stroke="#333" stroke-width="2.7"/><use href="#f1" stroke="#8a8a8a" stroke-width="1.0"/><defs><path id="f2" d="M475.0 601.1 475.0 599.7 475.0 598.4 475.0 597.1 475.0 595.7 475.0 594.4 475.0 593.1 475.0 591.8 475.0 590.4 475.0 589.1 475.0 587.8 475.0 586.4 475.0 585.1 475.0 583.8 475.0 582.4 475.0 581.1 475.0 579.8 475.0 578.4 475.0 577.1 475.0 575.8 475.0 574.4 475.0 573.1 475.0 571.8 475.0 570.4 475.0 569.1 474.9 567.8 474.9 566.4 474.9 565.1 474.9 563.8 474.8 562.5 474.8 561.1 474.8 559.8 474.7 558.5 474.7 557.1 474.6 555.8 474.6 554.5 474.5 553.1 474.4 551.8 474.2 550.5 473.9 549.1 473.5 547.8 473.0 546.5 472.6 545.1 472.1 543.8 471.8 542.5 471.5 541.1 471.2 539.8 471.0 538.5 470.9 537.1 470.8 535.8 470.7 534.5 470.8 533.2 470.9 531.8 471.2 530.5 471.6 529.2 472.1 527.8 472.7 526.5 473.5 525.2 474.4 523.8 475.5 522.5 476.6 521.2 478.0 519.8 479.5 518.5 481.2 517.2 483.1 515.8 485.2 514.5 487.3 513.2 489.5 511.8 491.8 510.5 494.0 509.2 496.0 507.8 497.9 506.5 499.6 505.2 501.1 503.9 502.4 502.5 503.5 501.2 504.5 499.9 505.2 498.5 505.7 497.2 506.1 495.9 506.3 494.5 506.3 493.2 506.0 491.9 505.3 490.5 504.4 489.2 503.1 487.9 501.8 486.5 500.3 485.2 498.8 483.9 497.1 482.5 495.1 481.2 493.0 479.9 491.0 478.5 489.2 477.2 487.8 475.9 487.0 474.6 486.3 473.2 485.7 471.9 485.1 470.6 484.7 469.2 484.4 467.9 484.2 466.6 484.2 465.2 484.2 463.9 484.3 462.6 484.4 461.2 484.5 459.9 484.6 458.6 484.8 457.2 485.0 455.9 485.2 454.6 485.5 453.2 486.0 451.9 486.6 450.6 487.4 449.2 488.2 447.9 489.1 446.6 490.1 445.3 491.4 443.9 493.0 442.6 495.0 441.3 497.1 439.9 499.3 438.6 501.4 437.3 503.3 435.9 504.9 434.6 506.4 433.3 507.8 431.9 509.3 430.6 510.5 429.3 511.6 427.9 512.3 426.6 512.6 425.3"/></defs><use href="#f2" stroke="#333" stroke-width="2.7"/><use href="#f2" stroke="#8a8a8a" stroke-width="1.0"/><defs><path id="f3" d="M472.8 601.1 472.8 599.7 472.8 598.4 472.8 597.1 472.8 595.7 472.8 594.4 472.8 593.1 472.8 591.8 472.8 590.4 472.8 589.1 472.8 587.8 472.8 586.4 472.8 585.1 472.8 583.8 472.8 582.4 472.8 581.1 472.8 579.8 472.8 578.4 472.8 577.1 472.8 575.8 472.8 574.4 472.8 573.1 472.8 571.8 472.8 570.4 472.7 569.1 472.7 567.8 472.7 566.4 472.6 565.1 472.6 563.8 472.5 562.5 472.5 561.1 472.4 559.8 472.3 558.5 472.3 557.1 472.2 555.8 472.1 554.5 472.0 553.1 471.8 551.8 471.4 550.5 470.8 549.1 470.0 547.8 469.1 546.5 468.1 545.1 467.1 543.8 466.2 542.5 465.3 541.1 464.5 539.8 463.6 538.5 462.8 537.1 461.9 535.8 461.1 534.5 460.3 533.2 459.5 531.8 458.8 530.5 458.2 529.2 457.7 527.8 457.4 526.5 457.1 525.2 457.0 523.8 456.9 522.5 456.8 521.2 456.8 519.8 457.0 518.5 457.3 517.2 457.8 515.8 458.6 514.5 459.6 513.2 460.9 511.8 462.5 510.5 464.2 509.2 466.2 507.8 468.2 506.5 470.3 505.2 472.4 503.9 474.4 502.5 476.3 501.2 478.2 499.9 479.9 498.5 481.5 497.2 482.9 495.9 484.2 494.5 485.3 493.2 486.3 491.9 487.0 490.5 487.4 489.2 487.7 487.9 487.7 486.5 487.6 485.2 487.4 483.9 487.0 482.5 486.3 481.2 485.6 479.9 484.7 478.5 483.9 477.2 483.3 475.9 482.9 474.6 482.6 473.2 482.3 471.9 482.1 470.6 481.8 469.2 481.7 467.9 481.6 466.6 481.6 465.2 481.6 463.9 481.6 462.6 481.7 461.2 481.7 459.9 481.8 458.6 482.0 457.2 482.1 455.9 482.3 454.6 482.5 453.2 482.9 451.9 483.3 450.6 483.9 449.2 484.5 447.9 485.2 446.6 486.0 445.3 487.0 443.9 488.3 442.6 489.8 441.3 491.6 439.9 493.5 438.6 495.3 437.3 497.1 435.9 498.6 434.6 500.1 433.3 501.7 431.9 503.3 430.6 504.8 429.3 506.1 427.9 507.2 426.6 508.0 425.3 508.4 423.9 508.6 422.6 508.5 421.3 508.2 419.9 507.7 418.6 507.1 417.3 506.4 416.0 505.7 414.6 504.9 413.3 503.8 412.0 502.4 410.6 500.9 409.3 499.3 408.0 497.7 406.6 496.2 405.3 494.8 404.0 493.7 402.6 492.6 401.3 491.6 400.0 490.6 398.6 489.7 397.3 488.8 396.0 488.0 394.6 487.2 393.3 486.3 392.0 485.5 390.6 485.2 389.3"/></defs><use href="#f3" stroke="#333" stroke-width="2.7"/><use href="#f3" stroke="#8a8a8a" stroke-width="1.0"/><defs><path id="f4" d="M478.0 601.1 478.0 599.7 478.0 598.4 478.0 597.1 478.0 595.7 478.0 594.4 478.0 593.1 478.0 591.8 478.0 590.4 478.0 589.1 478.0 587.8 478.0 586.4 478.0 585.1 478.0 583.8 478.0 582.4 478.0 581.1 478.0 579.8 478.0 578.4 478.0 577.1 478.0 575.8 478.0 574.4 478.0 573.1 478.0 571.8 478.0 570.4 478.0 569.1 478.0 567.8 478.0 566.4 478.0 565.1 478.0 563.8 478.0 562.5 478.0 561.1 478.0 559.8 478.0 558.5 478.0 557.1 478.0 555.8 478.0 554.5 478.0 553.1 478.0 551.8 478.0 550.5 478.1 549.1 478.2 547.8 478.3 546.5 478.5 545.1 478.7 543.8 479.0 542.5 479.4 541.1 479.8 539.8 480.3 538.5 480.9 537.1 481.6 535.8 482.3 534.5 483.2 533.2 484.3 531.8 485.4 530.5 486.6 529.2 488.0 527.8 489.5 526.5 491.1 525.2 492.8 523.8 494.7 522.5 496.8 521.2 499.1 519.8 501.7 518.5 504.3 517.2 507.0 515.8 509.8 514.5 512.5 513.2 515.1 511.8 517.4 510.5 519.4 509.2 521.0 507.8 522.2 506.5 523.1 505.2 523.6 503.9 523.9 502.5 523.9 501.2 523.6 499.9 523.2 498.5 522.5 497.2 521.7 495.9 520.8 494.5 519.7 493.2 518.3 491.9 516.4 490.5 514.2 489.2 511.9 487.9 509.4 486.5 507.0 485.2 504.6 483.9 502.1 482.5 499.3 481.2 496.5 479.9 493.8 478.5 491.5 477.2 489.7 475.9 488.6 474.6 487.7 473.2 487.0 471.9 486.3 470.6 485.7 469.2 485.4 467.9 485.2 466.6 485.2 465.2 485.2 463.9 485.3 462.6 485.4 461.2"/></defs><use href="#f4" stroke="#333" stroke-width="2.7"/><use href="#f4" stroke="#8a8a8a" stroke-width="1.0"/><defs><path id="f5" d="M425.4 499.9 427.0 498.5 428.6 497.2 430.4 495.9 432.2 494.5 434.0 493.2 436.3 491.9 438.8 490.5 441.6 489.2 444.4 487.9 447.3 486.5 450.1 485.2 452.7 483.9 455.4 482.5 458.2 481.2 461.0 479.9 463.6 478.5 465.9 477.2 467.6 475.9 468.6 474.6 469.4 473.2 470.1 471.9 470.8 470.6 471.3 469.2 471.6 467.9 471.8 466.6 471.8 465.2 471.8 463.9 471.7 462.6 471.6 461.2 471.5 459.9 471.4 458.6 471.3 457.2 471.2 455.9 471.1 454.6 470.8 453.2 470.5 451.9 470.0 450.6 469.5 449.2 468.9 447.9 468.3 446.6 467.6 445.3 466.9 443.9 465.8 442.6 464.6 441.3 463.3 439.9 462.1 438.6 461.1 437.3 460.3 435.9 459.9 434.6 459.6 433.3 459.4 431.9 459.3 430.6 459.4 429.3 459.6 427.9 460.1 426.6 460.8 425.3 461.7 423.9 462.7 422.6 463.8 421.3 465.0 419.9 466.2 418.6 467.4 417.3 468.5 416.0 469.6 414.6 470.6 413.3 471.6 412.0 472.5 410.6 473.4 409.3 474.3 408.0 475.0 406.6 475.6 405.3 476.1 404.0 476.5 402.6 476.9 401.3 477.2 400.0 477.4 398.6 477.6 397.3 477.7 396.0 477.8 394.6 477.9 393.3 478.0 392.0 478.0 390.6 478.0 389.3"/></defs><use href="#f5" stroke="#333" stroke-width="2.7"/><use href="#f5" stroke="#8a8a8a" stroke-width="1.0"/><defs><path id="f6" d="M481.0 601.1 481.0 599.7 481.0 598.4 481.0 597.1 481.0 595.7 481.0 594.4 481.0 593.1 481.0 591.8 481.0 590.4 481.0 589.1 481.0 587.8 481.0 586.4 481.0 585.1 481.0 583.8 481.0 582.4 481.0 581.1 481.0 579.8 481.0 578.4 481.0 577.1 481.0 575.8 481.0 574.4 481.0 573.1 481.0 571.8 481.0 570.4 481.0 569.1 481.1 567.8 481.1 566.4 481.1 565.1 481.1 563.8 481.2 562.5 481.2 561.1 481.2 559.8 481.3 558.5 481.3 557.1 481.4 555.8 481.4 554.5 481.5 553.1 481.6 551.8 481.9 550.5 482.3 549.1 482.9 547.8 483.5 546.5 484.3 545.1 485.1 543.8 486.0 542.5 486.9 541.1 487.9 539.8 488.9 538.5 490.1 537.1 491.4 535.8 492.8 534.5 494.3 533.2 495.9 531.8 497.6 530.5 499.4 529.2 501.3 527.8 503.2 526.5 505.2 525.2 507.2 523.8 509.4 522.5 511.9 521.2 514.6 519.8 517.5 518.5 520.4 517.2 523.2 515.8 525.9 514.5 528.4 513.2 530.7 511.8 532.5 510.5 533.8 509.2 534.5 507.8 534.7 506.5 534.5 505.2 533.9 503.9 533.1 502.5 531.9 501.2 530.6 499.9"/></defs><use href="#f6" stroke="#333" stroke-width="2.7"/><use href="#f6" stroke="#8a8a8a" stroke-width="1.0"/><defs><path id="f7" d="M470.6 461.2 470.5 459.9 470.4 458.6 470.2 457.2 470.1 455.9 469.9 454.6 469.5 453.2 469.0 451.9 468.4 450.6 467.7 449.2 466.8 447.9 465.9 446.6 465.0 445.3 463.9 443.9 462.3 442.6 460.5 441.3 458.5 439.9 456.5 438.6 454.7 437.3 453.2 435.9 452.0 434.6 451.0 433.3 450.0 431.9 449.2 430.6 448.5 429.3 448.0 427.9 447.9 426.6 448.1 425.3 448.6 423.9 449.5 422.6 450.5 421.3 451.6 419.9 452.9 418.6 454.2 417.3 455.5 416.0 456.9 414.6 458.1 413.3 459.5 412.0 461.0 410.6 462.6 409.3 464.1 408.0 465.6 406.6 466.8 405.3 467.9 404.0 468.9 402.6 469.7 401.3 470.5 400.0 471.2 398.6 471.8 397.3 472.3 396.0 472.9 394.6 473.3 393.3 473.8 392.0 474.2 390.6 474.4 389.3"/></defs><use href="#f7" stroke="#333" stroke-width="2.7"/><use href="#f7" stroke="#8a8a8a" stroke-width="1.0"/><defs><path id="f8" d="M443.4 425.3 443.5 423.9 443.9 422.6 444.5 421.3 445.3 419.9 446.3 418.6 447.5 417.3 448.6 416.0 449.8 414.6 451.0 413.3 452.4 412.0 454.1 410.6 455.9 409.3 457.7 408.0 459.5 406.6 461.1 405.3 462.5 404.0 463.7 402.6 464.8 401.3 465.8 400.0 466.7 398.6 467.6 397.3 468.5 396.0 469.3 394.6 470.0 393.3 470.8 392.0 471.5 390.6 471.8 389.3"/></defs><use href="#f8" stroke="#333" stroke-width="2.7"/><use href="#f8" stroke="#8a8a8a" stroke-width="1.0"/><defs><path id="f9" d="M483.2 601.1 483.2 599.7 483.2 598.4 483.2 597.1 483.2 595.7 483.2 594.4 483.2 593.1 483.2 591.8 483.2 590.4 483.2 589.1 483.2 587.8 483.2 586.4 483.2 585.1 483.2 583.8 483.2 582.4 483.2 581.1 483.2 579.8 483.2 578.4 483.2 577.1 483.2 575.8 483.2 574.4 483.2 573.1 483.2 571.8 483.2 570.4 483.3 569.1 483.3 567.8 483.3 566.4 483.4 565.1 483.4 563.8 483.5 562.5 483.5 561.1 483.6 559.8 483.7 558.5 483.7 557.1 483.8 555.8 483.9 554.5 484.0 553.1 484.2 551.8 484.7 550.5 485.4 549.1 486.2 547.8 487.3 546.5 488.4 545.1 489.6 543.8 490.8 542.5 492.1 541.1 493.3 539.8 494.7 538.5 496.1 537.1 497.7 535.8 499.3 534.5 501.0 533.2 502.8 531.8 504.6 530.5 506.4 529.2 508.3 527.8 510.1 526.5 512.0 525.2 513.8 523.8 515.8 522.5 518.0 521.2 520.3 519.8 522.7 518.5"/></defs><use href="#f9" stroke="#333" stroke-width="2.7"/><use href="#f9" stroke="#8a8a8a" stroke-width="1.0"/><defs><path id="f10" d="M472.0 601.1 472.0 599.7 472.0 598.4 472.0 597.1 472.0 595.7 472.0 594.4 472.0 593.1 472.0 591.8 472.0 590.4 472.0 589.1 472.0 587.8 472.0 586.4 472.0 585.1 472.0 583.8 472.0 582.4 472.0 581.1 472.0 579.8 472.0 578.4 472.0 577.1 472.0 575.8 472.0 574.4 472.0 573.1 472.0 571.8 471.9 570.4 471.9 569.1 471.9 567.8 471.8 566.4 471.8 565.1 471.7 563.8 471.7 562.5 471.6 561.1 471.5 559.8 471.5 558.5 471.4 557.1 471.3 555.8 471.2 554.5 471.1 553.1"/></defs><use href="#f10" stroke="#333" stroke-width="2.7"/><use href="#f10" stroke="#8a8a8a" stroke-width="1.0"/><defs><path id="f11" d="M484.0 601.1 484.0 599.7 484.0 598.4 484.0 597.1 484.0 595.7 484.0 594.4 484.0 593.1 484.0 591.8 484.0 590.4 484.0 589.1 484.0 587.8 484.0 586.4 484.0 585.1 484.0 583.8 484.0 582.4 484.0 581.1 484.0 579.8 484.0 578.4 484.0 577.1 484.0 575.8 484.0 574.4 484.0 573.1 484.0 571.8 484.1 570.4 484.1 569.1 484.1 567.8 484.2 566.4 484.2 565.1 484.3 563.8 484.3 562.5 484.4 561.1 484.5 559.8 484.5 558.5 484.6 557.1 484.7 555.8 484.8 554.5 484.9 553.1"/></defs><use href="#f11" stroke="#1a1a1a" stroke-width="3.5"/><use href="#f11" stroke="#5e5e5e" stroke-width="1.3"/><defs><path id="f12" d="M472.8 601.1 472.8 599.7 472.8 598.4 472.8 597.1 472.8 595.7 472.8 594.4 472.8 593.1 472.8 591.8 472.8 590.4 472.8 589.1 472.8 587.8 472.8 586.4 472.8 585.1 472.8 583.8 472.8 582.4 472.8 581.1 472.8 579.8 472.8 578.4 472.8 577.1 472.8 575.8 472.8 574.4 472.8 573.1 472.8 571.8 472.8 570.4 472.7 569.1 472.7 567.8 472.7 566.4 472.6 565.1 472.6 563.8 472.5 562.5 472.5 561.1 472.4 559.8 472.3 558.5 472.3 557.1 472.2 555.8 472.1 554.5 472.0 553.1 471.8 551.8 471.3 550.5 470.6 549.1 469.8 547.8 468.7 546.5 467.6 545.1 466.4 543.8 465.2 542.5 463.9 541.1 462.7 539.8 461.3 538.5 459.9 537.1 458.3 535.8 456.7 534.5 455.0 533.2 453.2 531.8 451.4 530.5 449.6 529.2 447.7 527.8 445.9 526.5 444.0 525.2 442.2 523.8 440.2 522.5 438.0 521.2 435.7 519.8 433.3 518.5"/></defs><use href="#f12" stroke="#1a1a1a" stroke-width="3.5"/><use href="#f12" stroke="#5e5e5e" stroke-width="1.3"/><defs><path id="f13" d="M512.6 425.3 512.5 423.9 512.1 422.6 511.5 421.3 510.7 419.9 509.7 418.6 508.5 417.3 507.4 416.0 506.2 414.6 505.0 413.3 503.6 412.0 501.9 410.6 500.1 409.3 498.3 408.0 496.5 406.6 494.9 405.3 493.5 404.0 492.3 402.6 491.2 401.3 490.2 400.0 489.3 398.6 488.4 397.3 487.5 396.0 486.7 394.6 486.0 393.3 485.2 392.0 484.5 390.6 484.2 389.3"/></defs><use href="#f13" stroke="#1a1a1a" stroke-width="3.5"/><use href="#f13" stroke="#5e5e5e" stroke-width="1.3"/><defs><path id="f14" d="M485.4 461.2 485.5 459.9 485.6 458.6 485.8 457.2 485.9 455.9 486.1 454.6 486.5 453.2 487.0 451.9 487.6 450.6 488.3 449.2 489.2 447.9 490.1 446.6 491.0 445.3 492.1 443.9 493.7 442.6 495.5 441.3 497.5 439.9 499.5 438.6 501.3 437.3 502.8 435.9 504.0 434.6 505.0 433.3 506.0 431.9 506.8 430.6 507.5 429.3 508.0 427.9 508.1 426.6 507.9 425.3 507.4 423.9 506.5 422.6 505.5 421.3 504.4 419.9 503.1 418.6 501.8 417.3 500.5 416.0 499.1 414.6 497.9 413.3 496.5 412.0 495.0 410.6 493.4 409.3 491.9 408.0 490.4 406.6 489.2 405.3 488.1 404.0 487.1 402.6 486.3 401.3 485.5 400.0 484.8 398.6 484.2 397.3 483.7 396.0 483.1 394.6 482.7 393.3 482.2 392.0 481.8 390.6 481.6 389.3"/></defs><use href="#f14" stroke="#1a1a1a" stroke-width="3.5"/><use href="#f14" stroke="#5e5e5e" stroke-width="1.3"/><defs><path id="f15" d="M475.0 601.1 475.0 599.7 475.0 598.4 475.0 597.1 475.0 595.7 475.0 594.4 475.0 593.1 475.0 591.8 475.0 590.4 475.0 589.1 475.0 587.8 475.0 586.4 475.0 585.1 475.0 583.8 475.0 582.4 475.0 581.1 475.0 579.8 475.0 578.4 475.0 577.1 475.0 575.8 475.0 574.4 475.0 573.1 475.0 571.8 475.0 570.4 475.0 569.1 474.9 567.8 474.9 566.4 474.9 565.1 474.9 563.8 474.8 562.5 474.8 561.1 474.8 559.8 474.7 558.5 474.7 557.1 474.6 555.8 474.6 554.5 474.5 553.1 474.4 551.8 474.1 550.5 473.7 549.1 473.1 547.8 472.5 546.5 471.7 545.1 470.9 543.8 470.0 542.5 469.1 541.1 468.1 539.8 467.1 538.5 465.9 537.1 464.6 535.8 463.2 534.5 461.7 533.2 460.1 531.8 458.4 530.5 456.6 529.2 454.7 527.8 452.8 526.5 450.8 525.2 448.8 523.8 446.6 522.5 444.1 521.2 441.4 519.8 438.5 518.5 435.6 517.2 432.8 515.8 430.1 514.5 427.6 513.2 425.3 511.8 423.5 510.5 422.2 509.2 421.5 507.8 421.3 506.5 421.5 505.2 422.1 503.9 422.9 502.5 424.1 501.2 425.4 499.9"/></defs><use href="#f15" stroke="#1a1a1a" stroke-width="3.5"/><use href="#f15" stroke="#5e5e5e" stroke-width="1.3"/><defs><path id="f16" d="M530.6 499.9 529.0 498.5 527.4 497.2 525.6 495.9 523.8 494.5 522.0 493.2 519.7 491.9 517.2 490.5 514.4 489.2 511.6 487.9 508.7 486.5 505.9 485.2 503.3 483.9 500.6 482.5 497.8 481.2 495.0 479.9 492.4 478.5 490.1 477.2 488.4 475.9 487.4 474.6 486.6 473.2 485.9 471.9 485.2 470.6 484.7 469.2 484.4 467.9 484.2 466.6 484.2 465.2 484.2 463.9 484.3 462.6 484.4 461.2 484.5 459.9 484.6 458.6 484.7 457.2 484.8 455.9 484.9 454.6 485.2 453.2 485.5 451.9 486.0 450.6 486.5 449.2 487.1 447.9 487.7 446.6 488.4 445.3 489.1 443.9 490.2 442.6 491.4 441.3 492.7 439.9 493.9 438.6 494.9 437.3 495.7 435.9 496.1 434.6 496.4 433.3 496.6 431.9 496.7 430.6 496.6 429.3 496.4 427.9 495.9 426.6 495.2 425.3 494.3 423.9 493.3 422.6 492.2 421.3 491.0 419.9 489.8 418.6 488.6 417.3 487.5 416.0 486.4 414.6 485.4 413.3 484.4 412.0 483.5 410.6 482.6 409.3 481.7 408.0 481.0 406.6 480.4 405.3 479.9 404.0 479.5 402.6 479.1 401.3 478.8 400.0 478.6 398.6 478.4 397.3 478.3 396.0 478.2 394.6 478.1 393.3 478.0 392.0 478.0 390.6 478.0 389.3"/></defs><use href="#f16" stroke="#1a1a1a" stroke-width="3.5"/><use href="#f16" stroke="#5e5e5e" stroke-width="1.3"/><defs><path id="f17" d="M478.0 601.1 478.0 599.7 478.0 598.4 478.0 597.1 478.0 595.7 478.0 594.4 478.0 593.1 478.0 591.8 478.0 590.4 478.0 589.1 478.0 587.8 478.0 586.4 478.0 585.1 478.0 583.8 478.0 582.4 478.0 581.1 478.0 579.8 478.0 578.4 478.0 577.1 478.0 575.8 478.0 574.4 478.0 573.1 478.0 571.8 478.0 570.4 478.0 569.1 478.0 567.8 478.0 566.4 478.0 565.1 478.0 563.8 478.0 562.5 478.0 561.1 478.0 559.8 478.0 558.5 478.0 557.1 478.0 555.8 478.0 554.5 478.0 553.1 478.0 551.8 478.0 550.5 477.9 549.1 477.8 547.8 477.7 546.5 477.5 545.1 477.3 543.8 477.0 542.5 476.6 541.1 476.2 539.8 475.7 538.5 475.1 537.1 474.4 535.8 473.7 534.5 472.8 533.2 471.7 531.8 470.6 530.5 469.4 529.2 468.0 527.8 466.5 526.5 464.9 525.2 463.2 523.8 461.3 522.5 459.2 521.2 456.9 519.8 454.3 518.5 451.7 517.2 449.0 515.8 446.2 514.5 443.5 513.2 440.9 511.8 438.6 510.5 436.6 509.2 435.0 507.8 433.8 506.5 432.9 505.2 432.4 503.9 432.1 502.5 432.1 501.2 432.4 499.9 432.8 498.5 433.5 497.2 434.3 495.9 435.2 494.5 436.3 493.2 437.7 491.9 439.6 490.5 441.8 489.2 444.1 487.9 446.6 486.5 449.0 485.2 451.4 483.9 453.9 482.5 456.7 481.2 459.5 479.9 462.2 478.5 464.5 477.2 466.3 475.9 467.4 474.6 468.3 473.2 469.0 471.9 469.7 470.6 470.3 469.2 470.6 467.9 470.8 466.6 470.8 465.2 470.8 463.9 470.7 462.6 470.6 461.2"/></defs><use href="#f17" stroke="#1a1a1a" stroke-width="3.5"/><use href="#f17" stroke="#5e5e5e" stroke-width="1.3"/><defs><path id="f18" d="M483.2 601.1 483.2 599.7 483.2 598.4 483.2 597.1 483.2 595.7 483.2 594.4 483.2 593.1 483.2 591.8 483.2 590.4 483.2 589.1 483.2 587.8 483.2 586.4 483.2 585.1 483.2 583.8 483.2 582.4 483.2 581.1 483.2 579.8 483.2 578.4 483.2 577.1 483.2 575.8 483.2 574.4 483.2 573.1 483.2 571.8 483.2 570.4 483.3 569.1 483.3 567.8 483.3 566.4 483.4 565.1 483.4 563.8 483.5 562.5 483.5 561.1 483.6 559.8 483.7 558.5 483.7 557.1 483.8 555.8 483.9 554.5 484.0 553.1 484.2 551.8 484.6 550.5 485.2 549.1 486.0 547.8 486.9 546.5 487.9 545.1 488.9 543.8 489.8 542.5 490.7 541.1 491.5 539.8 492.4 538.5 493.2 537.1 494.1 535.8 494.9 534.5 495.7 533.2 496.5 531.8 497.2 530.5 497.8 529.2 498.3 527.8 498.6 526.5 498.9 525.2 499.0 523.8 499.1 522.5 499.2 521.2 499.2 519.8 499.0 518.5 498.7 517.2 498.2 515.8 497.4 514.5 496.4 513.2 495.1 511.8 493.5 510.5 491.8 509.2 489.8 507.8 487.8 506.5 485.7 505.2 483.6 503.9 481.6 502.5 479.7 501.2 477.8 499.9 476.1 498.5 474.5 497.2 473.1 495.9 471.8 494.5 470.7 493.2 469.7 491.9 469.0 490.5 468.6 489.2 468.3 487.9 468.3 486.5 468.4 485.2 468.6 483.9 469.0 482.5 469.7 481.2 470.4 479.9 471.3 478.5 472.1 477.2 472.7 475.9 473.1 474.6 473.4 473.2 473.7 471.9 473.9 470.6 474.2 469.2 474.3 467.9 474.4 466.6 474.4 465.2 474.4 463.9 474.4 462.6 474.3 461.2 474.3 459.9 474.2 458.6 474.0 457.2 473.9 455.9 473.7 454.6 473.5 453.2 473.1 451.9 472.7 450.6 472.1 449.2 471.5 447.9 470.8 446.6 470.0 445.3 469.0 443.9 467.7 442.6 466.2 441.3 464.4 439.9 462.5 438.6 460.7 437.3 458.9 435.9 457.4 434.6 455.9 433.3 454.3 431.9 452.7 430.6 451.2 429.3 449.9 427.9 448.8 426.6 448.0 425.3 447.6 423.9 447.4 422.6 447.5 421.3 447.8 419.9 448.3 418.6 448.9 417.3 449.6 416.0 450.3 414.6 451.1 413.3 452.2 412.0 453.6 410.6 455.1 409.3 456.7 408.0 458.3 406.6 459.8 405.3 461.2 404.0 462.3 402.6 463.4 401.3 464.4 400.0 465.4 398.6 466.3 397.3 467.2 396.0 468.0 394.6 468.8 393.3 469.7 392.0 470.5 390.6 470.8 389.3"/></defs><use href="#f18" stroke="#1a1a1a" stroke-width="3.5"/><use href="#f18" stroke="#5e5e5e" stroke-width="1.3"/><defs><path id="f19" d="M481.0 601.1 481.0 599.7 481.0 598.4 481.0 597.1 481.0 595.7 481.0 594.4 481.0 593.1 481.0 591.8 481.0 590.4 481.0 589.1 481.0 587.8 481.0 586.4 481.0 585.1 481.0 583.8 481.0 582.4 481.0 581.1 481.0 579.8 481.0 578.4 481.0 577.1 481.0 575.8 481.0 574.4 481.0 573.1 481.0 571.8 481.0 570.4 481.0 569.1 481.1 567.8 481.1 566.4 481.1 565.1 481.1 563.8 481.2 562.5 481.2 561.1 481.2 559.8 481.3 558.5 481.3 557.1 481.4 555.8 481.4 554.5 481.5 553.1 481.6 551.8 481.8 550.5 482.1 549.1 482.5 547.8 483.0 546.5 483.4 545.1 483.9 543.8 484.2 542.5 484.5 541.1 484.8 539.8 485.0 538.5 485.1 537.1 485.2 535.8 485.3 534.5 485.2 533.2 485.1 531.8 484.8 530.5 484.4 529.2 483.9 527.8 483.3 526.5 482.5 525.2 481.6 523.8 480.5 522.5 479.4 521.2 478.0 519.8 476.5 518.5 474.8 517.2 472.9 515.8 470.8 514.5 468.7 513.2 466.5 511.8 464.2 510.5 462.0 509.2 460.0 507.8 458.1 506.5 456.4 505.2 454.9 503.9 453.6 502.5 452.5 501.2 451.5 499.9 450.8 498.5 450.3 497.2 449.9 495.9 449.7 494.5 449.7 493.2 450.0 491.9 450.7 490.5 451.6 489.2 452.9 487.9 454.2 486.5 455.7 485.2 457.2 483.9 458.9 482.5 460.9 481.2 463.0 479.9 465.0 478.5 466.8 477.2 468.2 475.9 469.0 474.6 469.7 473.2 470.3 471.9 470.9 470.6 471.3 469.2 471.6 467.9 471.8 466.6 471.8 465.2 471.8 463.9 471.7 462.6 471.6 461.2 471.5 459.9 471.4 458.6 471.2 457.2 471.0 455.9 470.8 454.6 470.5 453.2 470.0 451.9 469.4 450.6 468.6 449.2 467.8 447.9 466.9 446.6 465.9 445.3 464.6 443.9 463.0 442.6 461.0 441.3 458.9 439.9 456.7 438.6 454.6 437.3 452.7 435.9 451.1 434.6 449.6 433.3 448.2 431.9 446.7 430.6 445.5 429.3 444.4 427.9 443.7 426.6 443.4 425.3"/></defs><use href="#f19" stroke="#1a1a1a" stroke-width="3.5"/><use href="#f19" stroke="#5e5e5e" stroke-width="1.3"/><defs><path id="f20" d="M522.7 518.5 525.0 517.2 527.2 515.8 529.2 514.5 530.9 513.2 532.1 511.8 532.9 510.5 533.2 509.2 532.8 507.8 532.0 506.5 530.8 505.2 529.2 503.9 527.5 502.5 525.5 501.2 523.4 499.9 521.3 498.5 519.0 497.2 516.8 495.9 514.6 494.5 512.4 493.2 510.0 491.9 507.4 490.5 504.8 489.2 502.2 487.9 499.7 486.5 497.4 485.2 495.2 483.9 493.1 482.5 491.0 481.2 488.9 479.9 487.1 478.5 485.5 477.2 484.4 475.9 483.7 474.6 483.1 473.2 482.6 471.9 482.2 470.6 481.9 469.2 481.7 467.9 481.6 466.6 481.6 465.2 481.6 463.9 481.6 462.6 481.7 461.2 481.7 459.9 481.8 458.6 481.8 457.2 481.9 455.9 481.9 454.6 482.0 453.2 482.1 451.9 482.3 450.6 482.5 449.2 482.6 447.9 482.8 446.6 483.0 445.3 483.2 443.9 483.4 442.6 483.7 441.3 483.9 439.9 484.0 438.6 484.0 437.3 483.8 435.9 483.3 434.6 482.8 433.3 482.2 431.9 481.5 430.6 480.8 429.3 479.9 427.9 478.9 426.6 477.9 425.3 476.9 423.9 475.9 422.6 475.0 421.3 474.1 419.9 473.4 418.6 472.7 417.3 472.0 416.0 471.5 414.6 471.0 413.3 470.7 412.0 470.5 410.6 470.5 409.3 470.6 408.0 470.8 406.6 471.0 405.3 471.2 404.0 471.4 402.6 471.7 401.3 471.9 400.0 472.2 398.6 472.5 397.3 472.8 396.0 473.1 394.6 473.5 393.3 473.9 392.0 474.3 390.6 474.4 389.3"/></defs><use href="#f20" stroke="#1a1a1a" stroke-width="3.5"/><use href="#f20" stroke="#5e5e5e" stroke-width="1.3"/><defs><path id="f21" d="M484.9 553.1 485.1 551.8 485.7 550.5 486.4 549.1 487.4 547.8 488.5 546.5 489.7 545.1 491.0 543.8 492.2 542.5 493.5 541.1 494.6 539.8 495.9 538.5 497.3 537.1 498.6 535.8 500.1 534.5 501.5 533.2 503.0 531.8 504.4 530.5 505.8 529.2 507.2 527.8 508.5 526.5 509.7 525.2 510.8 523.8 512.0 522.5 513.3 521.2 514.7 519.8 516.0 518.5 517.1 517.2 518.1 515.8 518.8 514.5 519.1 513.2 519.1 511.8 518.7 510.5 517.8 509.2 516.5 507.8 514.8 506.5 512.9 505.2 510.8 503.9 508.6 502.5 506.4 501.2 504.1 499.9 501.9 498.5 499.7 497.2 497.6 495.9 495.5 494.5 493.6 493.2 491.7 491.9 489.8 490.5 488.0 489.2 486.4 487.9 484.9 486.5 483.6 485.2 482.5 483.9 481.5 482.5 480.7 481.2 479.9 479.9 479.4 478.5 478.9 477.2 478.6 475.9 478.4 474.6 478.3 473.2 478.2 471.9 478.1 470.6 478.0 469.2 478.0 467.9 478.0 466.6 478.0 465.2 478.0 463.9 478.0 462.6 478.0 461.2 478.0 459.9 478.0 458.6 477.9 457.2 477.9 455.9 477.8 454.6 477.7 453.2 477.6 451.9 477.4 450.6 477.2 449.2 476.9 447.9 476.6 446.6 476.2 445.3 475.8 443.9 475.2 442.6 474.4 441.3 473.6 439.9 472.5 438.6 471.5 437.3 470.3 435.9 469.2 434.6 468.0 433.3 466.8 431.9 465.4 430.6 464.1 429.3 462.8 427.9 461.7 426.6 460.6 425.3 459.8 423.9 459.2 422.6 458.7 421.3 458.3 419.9 458.2 418.6 458.1 417.3 458.1 416.0 458.3 414.6 458.5 413.3 458.9 412.0 459.6 410.6 460.4 409.3 461.4 408.0 462.5 406.6 463.5 405.3 464.4 404.0 465.1 402.6 465.9 401.3 466.6 400.0 467.4 398.6 468.1 397.3 468.7 396.0 469.4 394.6 470.1 393.3 470.8 392.0 471.5 390.6 471.8 389.3"/></defs><use href="#f21" stroke="#1a1a1a" stroke-width="3.5"/><use href="#f21" stroke="#5e5e5e" stroke-width="1.3"/></g>
<path d="M463 366 H494 L490.5 387 H466.5Z" fill="url(#gfcup)" stroke="#222" stroke-width="1"/><rect x="459" y="362.5" width="39" height="4" rx="1" fill="#555" stroke="#222" stroke-width="0.8"/>
<path d="M466 389 H491" stroke="#222" stroke-width="3"/>
</svg>
<svg class="a" style="left:0;top:0" width="1280" height="720"><defs>
<linearGradient id="gtop" x1="0" y1="0" x2="1" y2="1"><stop offset="0" stop-color="#a8a8a8"/><stop offset=".5" stop-color="#a6a6a6"/><stop offset="1" stop-color="#8e8e8e"/></linearGradient>
<linearGradient id="gtop2" x1="0" y1="0" x2="1" y2="1"><stop offset="0" stop-color="#a5a5a5"/><stop offset="1" stop-color="#acacac"/></linearGradient>
<linearGradient id="gcone" x1="0" y1="0" x2="1" y2="0"><stop offset="0" stop-color="#707070"/><stop offset=".45" stop-color="#9a9a9a"/><stop offset="1" stop-color="#666"/></linearGradient>
<linearGradient id="gcup" x1="0" y1="0" x2="1" y2="0"><stop offset="0" stop-color="#5a5a5a"/><stop offset=".4" stop-color="#7c7c7c"/><stop offset="1" stop-color="#555"/></linearGradient>
<linearGradient id="gin" x1="0" y1="0" x2="1" y2="0"><stop offset="0" stop-color="#6a6a6a"/><stop offset=".6" stop-color="#8a8a8a"/><stop offset="1" stop-color="#999"/></linearGradient>
</defs><path d="M1082.4 628.1 1080.5 632.8 1077.8 637.3 1074.2 641.5 1069.9 645.3 1064.7 648.8 1058.8 651.9 1052.2 654.6 1045.0 656.8 1037.1 658.6 1028.6 659.9 1019.7 660.8 1010.3 661.2 1000.5 661.2 990.3 660.7 980.0 659.7 969.4 658.2 958.7 656.4 947.9 654.0 937.1 651.3 926.4 648.1 915.9 644.5 905.6 640.6 895.6 636.4 885.9 631.8 876.7 627.0 867.9 621.9 859.7 616.6 852.0 611.2 845.0 605.5 838.6 599.8 833.0 594.0 828.1 588.2 824.0 582.3 820.8 576.5 818.4 570.8 816.8 565.2 816.1 559.8 816.2 554.6 817.2 549.5 818.5 540.7 820.4 535.9 823.2 531.3 826.8 527.1 831.2 523.3 836.4 519.8 842.3 516.6 849.0 514.0 856.3 511.7 864.3 509.9 872.8 508.5 881.8 507.6 891.3 507.2 901.2 507.2 911.4 507.8 921.9 508.8 932.6 510.2 943.4 512.1 954.3 514.5 965.1 517.3 975.9 520.5 986.5 524.0 996.9 528.0 1007.0 532.3 1016.8 536.9 1026.1 541.7 1035.0 546.9 1043.3 552.2 1051.1 557.7 1058.1 563.4 1064.5 569.2 1070.2 575.1 1075.1 580.9 1079.3 586.8 1082.5 592.7 1085.0 598.4 1086.6 604.1 1087.3 609.6 1087.1 614.9 1086.1 620.0Z" fill="#747474" stroke="#262626" stroke-width="1.1"/>
<path d="M1086.1 620.0 1084.2 624.8 1081.5 629.3 1077.9 633.5 1073.5 637.4 1068.3 640.9 1062.3 644.0 1055.7 646.7 1048.3 649.0 1040.4 650.8 1031.9 652.2 1022.8 653.0 1013.3 653.5 1003.4 653.4 993.2 652.9 982.7 651.9 972.0 650.4 961.2 648.5 950.4 646.2 939.5 643.4 928.7 640.2 918.1 636.6 907.7 632.7 897.6 628.4 887.8 623.8 878.5 618.9 869.6 613.8 861.3 608.4 853.6 602.9 846.5 597.2 840.1 591.5 834.4 585.6 829.5 579.7 825.4 573.8 822.1 568.0 819.6 562.2 818.1 556.6 817.3 551.1 817.5 545.8 818.5 540.7 820.4 532.9 822.3 528.0 825.1 523.5 828.7 519.2 833.1 515.3 838.3 511.8 844.3 508.7 851.0 506.0 858.3 503.7 866.3 501.9 874.8 500.5 883.9 499.6 893.4 499.2 903.3 499.3 913.6 499.8 924.1 500.8 934.8 502.2 945.7 504.2 956.6 506.5 967.5 509.3 978.3 512.5 988.9 516.1 999.4 520.1 1009.5 524.4 1019.3 529.0 1028.6 533.9 1037.5 539.0 1045.9 544.4 1053.6 549.9 1060.7 555.6 1067.2 561.4 1072.9 567.3 1077.8 573.2 1081.9 579.1 1085.2 585.0 1087.7 590.8 1089.3 596.4 1090.0 601.9 1089.8 607.3 1088.8 612.3Z" fill="#9a9a9a" stroke="#2a2a2a" stroke-width="1"/>
<path d="M1088.8 612.3 1086.3 618.3 1082.5 623.8 1077.4 628.8 1071.2 633.2 1063.7 637.0 1055.2 640.2 1045.6 642.7 1035.2 644.5 1024.0 645.6 1012.0 646.0 999.5 645.7 986.6 644.6 973.3 642.8 959.9 640.3 946.4 637.1 933.0 633.3 919.8 628.9 906.9 623.9 894.5 618.5 882.7 612.5 871.7 606.2 861.4 599.5 852.1 592.6 843.8 585.4 836.6 578.2 830.6 570.9 825.8 563.6 822.2 556.4 820.0 549.3 819.2 542.5 819.7 536.0 821.5 529.8 824.6 524.1 829.1 518.8 834.8 514.1 841.6 510.0 849.6 506.5 858.7 503.6 868.7 501.5 879.5 500.0 891.1 499.3 903.3 499.3 916.1 500.0 929.2 501.4 942.6 503.6 956.1 506.4 969.5 509.9 982.9 514.0 995.9 518.7 1008.5 523.9 1020.6 529.7 1032.1 535.8 1042.8 542.3 1052.6 549.1 1061.4 556.2 1069.2 563.4 1075.8 570.7 1081.2 578.0 1085.4 585.3 1088.2 592.4 1089.8 599.3 1089.9 606.0 1088.8 612.3Z" fill="url(#gtop)" stroke="none"/>
<path d="M1078.1 609.2 1075.8 614.7 1072.3 619.7 1067.7 624.3 1061.9 628.4 1055.0 631.9 1047.2 634.8 1038.4 637.2 1028.8 638.8 1018.5 639.8 1007.5 640.2 996.0 639.9 984.1 638.9 971.9 637.2 959.5 634.9 947.0 632.0 934.7 628.5 922.5 624.4 910.7 619.9 899.3 614.8 888.5 609.3 878.3 603.5 868.8 597.4 860.2 591.0 852.6 584.4 846.0 577.7 840.4 571.0 836.0 564.3 832.8 557.7 830.7 551.2 829.9 544.9 830.4 538.9 832.1 533.2 835.0 528.0 839.1 523.1 844.3 518.8 850.6 515.0 858.0 511.8 866.3 509.1 875.5 507.1 885.5 505.8 896.2 505.1 907.4 505.1 919.1 505.8 931.2 507.1 943.5 509.1 955.9 511.7 968.3 514.9 980.6 518.7 992.6 523.0 1004.3 527.8 1015.4 533.1 1025.9 538.7 1035.8 544.7 1044.8 551.0 1052.9 557.5 1060.0 564.1 1066.1 570.8 1071.1 577.6 1075.0 584.2 1077.6 590.8 1079.0 597.2 1079.2 603.3 1078.1 609.2Z" fill="url(#gtop2)" stroke="#2a2a2a" stroke-width="1"/>
<path d="M991.1 583.4 990.4 585.0 989.4 586.5 988.0 587.9 986.3 589.1 984.3 590.1 982.0 591.0 979.4 591.7 976.5 592.2 973.5 592.5 970.2 592.6 966.8 592.5 963.3 592.2 959.7 591.7 956.0 591.0 952.4 590.2 948.7 589.1 945.1 587.9 941.6 586.6 938.3 585.1 935.0 583.5 932.0 581.7 929.2 579.9 926.7 578.0 924.4 576.1 922.5 574.1 920.8 572.1 919.5 570.1 918.6 568.2 918.0 566.3 917.7 564.4 917.9 562.6 918.4 561.0 919.2 559.4 920.4 558.0 922.0 556.7 923.9 555.6 926.0 554.6 928.5 553.8 931.2 553.2 934.2 552.8 937.3 552.6 940.6 552.6 944.1 552.8 947.7 553.2 951.3 553.8 955.0 554.6 958.7 555.5 962.3 556.7 965.8 557.9 969.3 559.4 972.6 560.9 975.7 562.6 978.6 564.4 981.3 566.2 983.7 568.1 985.8 570.1 987.6 572.1 989.1 574.1 990.2 576.0 991.0 578.0 991.4 579.9 991.4 581.7 991.1 583.4Z" fill="#a6a6a6" stroke="#2e2e2e" stroke-width="1"/>
<path d="M985.9 581.5 985.5 582.6 984.8 583.7 984.0 584.6 982.9 585.5 981.7 586.4 980.3 587.1 978.8 587.7 977.1 588.2 975.2 588.7 973.2 589.0 971.1 589.2 968.9 589.3 966.6 589.3 964.2 589.2 961.8 588.9 959.3 588.6 956.8 588.1 954.2 587.6 951.7 586.9 949.2 586.2 946.7 585.4 944.3 584.4 941.9 583.4 939.7 582.4 937.5 581.2 935.4 580.0 933.5 578.8 931.7 577.5 930.0 576.2 928.5 574.8 927.2 573.5 926.1 572.1 925.1 570.7 924.4 569.4 923.8 568.0 923.4 566.7 923.2 565.4 923.3 564.2 923.5 563.0 927.1 552.4 927.6 551.3 928.2 550.3 929.0 549.3 930.0 548.4 931.2 547.6 932.6 546.9 934.1 546.3 935.8 545.7 937.7 545.3 939.6 545.0 941.7 544.8 943.9 544.7 946.2 544.7 948.5 544.9 950.9 545.1 953.4 545.5 955.9 545.9 958.4 546.4 960.9 547.1 963.3 547.8 965.8 548.7 968.2 549.6 970.5 550.6 972.7 551.6 974.9 552.8 976.9 554.0 978.8 555.2 980.6 556.5 982.2 557.8 983.7 559.1 985.0 560.5 986.1 561.8 987.1 563.2 987.8 564.5 988.4 565.9 988.7 567.2 988.9 568.4 988.8 569.6 988.6 570.8Z" fill="#7a7a7a" stroke="#262626" stroke-width="1"/>
<path d="M988.6 570.8 988.2 571.9 987.5 573.0 986.7 573.9 985.7 574.8 984.5 575.6 983.1 576.3 981.6 577.0 979.9 577.5 978.1 577.9 976.1 578.2 974.0 578.4 971.8 578.5 969.6 578.5 967.2 578.3 964.8 578.1 962.3 577.8 959.9 577.3 957.4 576.8 954.9 576.1 952.4 575.4 949.9 574.5 947.6 573.6 945.2 572.6 943.0 571.6 940.9 570.4 938.8 569.3 936.9 568.0 935.1 566.7 933.5 565.4 932.0 564.1 930.7 562.7 929.6 561.4 928.7 560.0 927.9 558.7 927.4 557.4 927.0 556.1 926.8 554.8 926.9 553.6 927.1 552.4 946.3 527.1 946.5 526.3 947.0 525.7 947.5 525.0 948.2 524.5 949.0 523.9 949.9 523.5 950.9 523.1 952.0 522.8 953.2 522.5 954.5 522.3 955.8 522.2 957.2 522.1 958.7 522.2 960.3 522.2 961.8 522.4 963.4 522.7 965.1 523.0 966.7 523.3 968.3 523.8 969.9 524.3 971.5 524.8 973.1 525.4 974.6 526.1 976.0 526.8 977.4 527.5 978.8 528.3 980.0 529.2 981.2 530.0 982.2 530.9 983.2 531.7 984.0 532.6 984.7 533.5 985.3 534.4 985.8 535.3 986.2 536.2 986.4 537.0 986.5 537.9 986.5 538.7 986.3 539.4Z" fill="url(#gcone)" stroke="#262626" stroke-width="1"/>
<path d="M988.6 570.8 988.0 572.2 987.1 573.5 985.9 574.6 984.4 575.6 982.7 576.5 980.7 577.2 978.4 577.8 976.0 578.2 973.3 578.4 970.5 578.5 967.6 578.4 964.6 578.1 961.5 577.6 958.3 577.0 955.2 576.2 952.1 575.3 949.0 574.2 946.1 573.0 943.2 571.7 940.5 570.3 938.0 568.7 935.7 567.2 933.6 565.5 931.8 563.8 930.2 562.1 928.9 560.4 927.9 558.7 927.3 557.1 926.9 555.4 926.8 553.9 927.1 552.4" fill="none" stroke="#262626" stroke-width="1"/>
<path d="M986.3 539.4 985.9 540.3 985.3 541.1 984.6 541.9 983.6 542.5 982.5 543.1 981.2 543.5 979.8 543.9 978.2 544.2 976.5 544.3 974.8 544.4 972.9 544.3 970.9 544.1 969.0 543.8 967.0 543.4 964.9 542.9 962.9 542.3 961.0 541.6 959.0 540.9 957.2 540.0 955.4 539.1 953.8 538.1 952.3 537.1 950.9 536.1 949.7 535.0 948.6 533.9 947.7 532.8 947.0 531.7 946.5 530.6 946.2 529.5 946.0 528.5 946.1 527.5 946.4 526.6 946.9 525.8 947.6 525.0 948.4 524.3 949.5 523.7 950.7 523.2 952.0 522.7 953.5 522.4 955.2 522.2 956.9 522.1 958.7 522.2 960.6 522.3 962.6 522.5 964.6 522.9 966.6 523.3 968.6 523.9 970.6 524.5 972.6 525.2 974.4 526.0 976.3 526.9 978.0 527.8 979.5 528.8 981.0 529.9 982.3 530.9 983.5 532.0 984.4 533.1 985.2 534.3 985.8 535.4 986.3 536.4 986.5 537.5 986.5 538.5 986.3 539.4Z" fill="#a9a9a9" stroke="#262626" stroke-width="1"/>
<g fill="none" stroke-linejoin="round"><defs><path id="m0" d="M929.6 382.1 926.7 377.4 924.0 372.6 921.4 367.8 919.3 363.0 917.7 358.2 916.7 353.6 916.4 349.3 916.9 345.3 918.4 341.7 920.6 338.7 923.5 335.9 926.8 333.5 930.5 331.4 934.4 329.6 938.6 328.0 942.9 326.6 947.3 325.4 951.7 324.4 956.0 323.5 960.2 322.6 964.4 321.9 968.9 321.5 973.5 321.5 978.1 321.8 982.6 322.2 987.0 322.6 991.1 323.1 994.9 323.4 998.5 323.8 1002.1 324.4 1005.6 325.1 1008.8 325.7 1011.7 326.0 1014.2 325.9 1016.0 325.2 1017.4 323.9 1018.7 322.6 1020.0 321.2 1021.0 319.7 1022.0 318.0 1022.9 316.2 1023.6 314.3 1024.2 312.1 1024.7 310.0 1025.3 307.8 1025.8 305.6 1026.3 303.4 1026.9 301.1 1027.5 298.8 1028.1 296.5 1028.7 294.2 1029.3 291.9 1029.9 289.3 1030.5 286.7 1031.1 284.0 1031.7 281.2 1032.4 278.3 1033.2 275.4 1034.1 272.5 1035.1 269.6 1036.2 266.6 1037.4 263.5 1038.8 260.1 1040.4 256.7 1042.3 253.2 1044.4 249.8 1046.8 246.6 1049.4 243.5 1052.2 240.8 1055.2 238.4 1058.3 236.1 1061.5 233.9 1064.9 231.8 1068.3 229.9 1071.8 228.2 1075.2 226.6 1078.5 225.3 1081.7 224.2 1084.5 223.2 1087.2 222.4 1089.6 221.6 1091.8 220.9 1093.8 220.3 1095.5 219.6 1097.1 218.9 1098.4 218.3 1099.6 217.5 1100.5 216.8 1101.0 216.0 1101.1 215.2 1100.7 214.3 1100.0 213.4 1098.9 212.3 1097.5 211.2 1095.9 209.9 1093.8 208.6 1090.9 207.1 1087.7 205.6 1084.6 203.9 1082.0 202.1 1079.7 200.3 1077.7 198.4 1077.3 196.5 1077.5 194.6 1077.9 192.7"/></defs><use href="#m0" stroke="#2a2a2a" stroke-width="6.1"/><use href="#m0" stroke="#a4a4a4" stroke-width="4.0"/><defs><path id="m1" d="M975.5 457.3 975.6 455.1 975.3 452.8 974.5 450.3 973.5 447.6 972.3 444.8 970.9 442.0 969.5 439.0 968.1 436.1 966.8 433.1 965.5 430.0 964.2 426.9 962.8 423.6 961.3 420.3 959.7 416.8 958.2 413.3 956.7 409.6 955.2 405.9 953.8 402.1 952.5 398.2 951.3 394.2 950.2 390.3 949.3 386.2 948.6 382.2 947.7 377.9 946.8 373.4 945.8 368.7 945.0 364.0 944.5 359.2 944.2 354.4 944.4 349.8 945.1 345.4 946.4 341.4 948.2 337.7 950.6 334.5 953.7 331.8 957.2 329.7 961.1 328.0 965.2 326.7 969.4 325.6 973.6 324.8 977.9 324.2 982.1 323.8 986.2 323.5 990.2 323.3 994.0 323.2 997.5 323.0 1001.0 322.9 1004.3 323.1 1007.4 323.5 1010.3 324.1 1013.0 324.8 1015.3 325.4 1017.4 326.0 1019.2 326.4 1020.8 326.7 1022.2 327.2 1023.3 327.7 1024.2 328.0 1024.9 328.1 1025.6 327.8 1026.2 326.9 1026.8 325.6 1027.4 324.2 1028.0 322.6 1028.5 321.0 1029.0 319.3 1029.6 317.5 1030.1 315.5 1030.7 313.3 1031.3 311.1 1031.9 309.0 1032.5 306.8 1033.2 304.5 1033.9 302.3 1034.6 300.1 1035.3 297.8 1036.1 295.6 1037.0 293.3 1038.0 290.9 1039.0 288.4 1040.2 285.9 1041.5 283.3 1043.0 280.7 1044.5 278.1 1046.2 275.5 1048.0 272.9 1050.0 270.3 1052.4 267.7 1055.1 264.9 1058.1 262.2 1061.4 259.5 1064.9 256.9 1068.6 254.5 1072.3 252.3 1075.9 250.4 1079.3 248.7 1082.7 247.2 1086.3 245.7 1089.8 244.4 1093.3 243.3 1096.6 242.2 1099.7 241.3 1102.5 240.6 1104.9 239.9 1106.8 239.2 1108.4 238.6 1109.7 238.0 1110.7 237.4 1111.4 236.7 1112.0 236.0 1112.3 235.2 1112.4 234.3 1112.3 233.4 1112.1 232.3 1111.5 231.2 1110.5 229.9 1109.0 228.4 1107.1 226.8 1105.1 225.0 1102.8 223.0 1100.5 220.9 1097.6 218.6 1094.0 216.0 1090.1 213.3 1086.5 210.4 1083.6 207.7 1080.9 205.0 1078.7 202.3 1078.2 200.1 1078.4 198.1 1078.8 196.1"/></defs><use href="#m1" stroke="#2a2a2a" stroke-width="6.1"/><use href="#m1" stroke="#a4a4a4" stroke-width="4.0"/><defs><path id="m2" d="M960.9 531.9 961.5 529.9 962.1 527.9 962.7 525.9 963.3 523.9 963.9 521.9 964.5 519.8 965.1 517.8 965.7 515.8 966.3 513.8 966.9 511.8 967.5 509.8 968.1 507.8 968.7 505.7 969.3 503.7 969.9 501.7 970.5 499.7 971.1 497.7 971.7 495.7 972.3 493.7 973.0 491.6 973.5 489.6 974.1 487.6 974.7 485.6 975.3 483.5 975.9 481.5 976.5 479.4 977.1 477.4 977.6 475.3 978.2 473.3 978.8 471.2 979.4 469.2 979.9 467.1 980.5 465.0 981.0 462.9 981.6 460.8 982.1 458.7 982.7 456.6 983.2 454.5 983.7 452.3 984.0 449.7 984.2 447.0 984.4 444.0 984.5 441.0 984.7 437.8 984.9 434.6 985.2 431.4 985.6 428.3 986.2 425.2 986.8 422.1 987.5 418.8 988.3 415.6 989.3 412.3 990.4 409.0 991.7 405.8 993.2 402.5 994.8 399.3 996.7 396.1 998.7 393.0 1001.0 390.0 1003.5 387.0 1006.2 384.2 1009.1 381.3 1012.4 378.3 1015.9 375.3 1019.7 372.4 1023.8 369.7 1028.2 367.1 1032.7 364.8 1037.4 362.8 1042.0 361.1 1046.6 359.8 1051.0 358.8 1055.0 358.2 1058.6 357.8 1061.8 357.7 1064.7 357.7 1067.2 357.7 1069.3 357.8 1071.0 357.8 1072.4 357.8 1073.5 357.8 1074.2 357.6 1074.7 357.4 1075.0 357.0 1075.0 356.5 1074.4 355.9 1073.2 355.3 1071.4 354.5 1069.3 353.6 1067.0 352.5 1064.5 351.2 1062.0 349.8 1059.3 348.3 1056.2 346.7 1052.8 344.9 1049.4 343.0 1046.3 341.0 1043.8 339.0 1042.2 336.9 1041.5 334.8 1040.9 332.6 1040.3 330.5 1040.0 328.3 1039.8 326.2 1039.8 324.0 1040.2 321.8 1040.8 319.7 1041.4 317.5 1042.1 315.4 1042.9 313.2 1043.7 311.1 1044.5 309.0 1045.4 306.8 1046.3 304.7 1047.3 302.7 1048.3 300.6 1049.7 298.6 1051.2 296.6 1053.0 294.6 1055.0 292.7 1057.0 290.9 1059.2 289.1 1061.6 287.4 1063.9 285.8 1066.4 284.2 1069.4 282.8 1072.8 281.5 1076.5 280.4 1080.3 279.5 1084.2 278.6 1087.8 277.9 1091.0 277.2"/></defs><use href="#m2" stroke="#2a2a2a" stroke-width="6.1"/><use href="#m2" stroke="#a4a4a4" stroke-width="4.0"/><defs><path id="m3" d="M956.5 532.5 957.1 530.5 957.7 528.5 958.3 526.5 958.9 524.5 959.5 522.4 960.1 520.4 960.7 518.4 961.3 516.4 961.9 514.4 962.5 512.4 963.1 510.3 963.7 508.3 964.3 506.3 964.9 504.3 965.5 502.3 966.1 500.2 966.7 498.2 967.3 496.2 967.9 494.2 968.5 492.2 969.1 490.2 969.7 488.1 970.3 486.1 970.8 484.1 971.4 482.0 972.0 480.0 972.5 477.9 973.0 475.9 973.6 473.8 974.1 471.8 974.6 469.7 975.2 467.6 975.7 465.5 976.2 463.5 976.6 461.4 977.1 459.3 977.6 457.2 978.1 455.1 978.3 452.8 978.2 450.3 977.8 447.5 977.3 444.6 976.5 441.6 975.7 438.4 974.9 435.2 974.2 431.9 973.6 428.7 973.1 425.5 972.6 422.1 972.1 418.7 971.6 415.2 971.2 411.6 970.9 408.0 970.6 404.3 970.5 400.6 970.6 396.8 970.8 393.1 971.2 389.3 971.8 385.6 972.6 381.9 973.7 378.2 974.8 374.4 976.0 370.4 977.4 366.2 979.1 362.1 981.0 358.1 983.3 354.2 985.9 350.5 988.9 347.1 992.2 344.1 995.9 341.5 999.7 339.4 1003.7 337.8 1007.7 336.8 1011.7 336.0 1015.6 335.5 1019.4 335.3 1023.0 335.2 1026.4 335.2 1029.5 335.3 1032.4 335.4 1035.0 335.5 1037.4 335.6 1039.6 335.6 1041.4 335.6 1042.9 335.7 1043.9 335.9 1044.5 336.1 1044.7 336.3 1044.6 336.4 1044.3 336.3 1043.8 336.0 1043.1 335.7 1042.0 335.3 1040.6 334.9 1039.0 334.4 1037.6 333.6 1036.4 332.6 1035.8 331.2 1035.6 329.6 1035.5 327.8 1035.4 326.1 1035.4 324.2 1035.5 322.3 1035.8 320.3 1036.2 318.2 1036.8 316.1 1037.4 313.9 1038.1 311.7 1038.8 309.6 1039.5 307.4 1040.3 305.2 1041.1 303.0 1042.0 300.8 1042.9 298.7 1044.0 296.5 1045.2 294.2 1046.6 292.0 1048.3 289.7 1050.0 287.5 1052.0 285.3 1054.0 283.1 1056.3 280.9 1058.6 278.8 1061.1 276.8 1064.1 274.7 1067.5 272.8 1071.3 270.9 1075.3 269.1 1079.5 267.5 1083.6 266.0 1087.5 264.7 1091.1 263.5 1094.2 262.4 1097.3 261.5 1100.3 260.6 1103.2 259.9 1105.9 259.3 1108.4 258.7 1110.5 258.1 1112.2 257.6 1113.3 257.0 1114.0 256.3 1114.2 255.5 1114.2 254.7"/></defs><use href="#m3" stroke="#2a2a2a" stroke-width="6.1"/><use href="#m3" stroke="#a4a4a4" stroke-width="4.0"/><defs><path id="m4" d="M1017.7 308.9 1018.1 306.7 1018.5 304.5 1018.8 302.2 1019.1 300.0 1019.4 297.7 1019.6 295.3 1019.6 292.9 1019.3 290.3 1018.9 287.7 1018.4 285.0 1017.7 282.2 1017.0 279.3 1016.3 276.4 1015.6 273.4 1014.8 270.4 1013.6 267.1 1012.2 263.5 1010.6 259.8 1009.0 256.0 1007.6 252.1 1006.5 248.2 1005.8 244.4 1005.6 240.8 1006.0 237.3 1006.6 233.9 1007.5 230.5 1008.5 227.1 1009.8 223.8 1011.4 220.6 1013.4 217.6 1015.6 214.8 1018.2 212.3 1021.0 210.0 1024.0 208.0 1027.0 206.1 1030.1 204.4 1033.2 202.8 1036.3 201.3 1039.3 199.9 1042.2 198.6 1045.0 197.3 1047.6 196.1 1050.2 195.1 1052.6 194.3 1054.9 193.7 1056.9 193.3 1058.8 192.9 1060.4 192.5 1061.8 192.2 1062.9 192.1 1063.8 192.3 1064.5 192.6 1065.0 192.7 1065.4 192.5 1065.7 192.1 1066.0 191.5 1066.5 190.1 1067.1 188.4 1067.7 186.6"/></defs><use href="#m4" stroke="#2a2a2a" stroke-width="6.1"/><use href="#m4" stroke="#a4a4a4" stroke-width="4.0"/><defs><path id="m5" d="M922.4 342.9 926.1 340.6 929.9 338.4 933.8 336.4 937.7 334.5 941.7 332.8 946.2 331.4 951.2 330.4 956.4 329.6 961.8 329.1 967.1 328.7 972.3 328.3 977.2 328.0 982.0 327.7 987.1 327.6 992.2 327.8 997.1 327.9 1001.5 327.8 1005.3 327.4 1008.0 326.4 1010.0 325.0 1011.8 323.6 1013.5 322.1 1015.1 320.5 1016.4 318.8 1017.5 316.9 1018.3 315.0 1018.9 312.8 1019.4 310.7 1019.9 308.5 1020.4 306.4 1020.8 304.1 1021.2 301.9 1021.7 299.6 1022.1 297.3 1022.6 295.0 1022.9 292.6 1023.2 290.1 1023.3 287.4 1023.3 284.7 1023.2 281.8 1023.2 278.9 1023.1 275.9 1023.1 272.9 1023.2 269.8 1023.3 266.6 1023.2 263.2 1023.1 259.6 1023.0 255.8 1023.1 251.9 1023.4 248.1 1024.1 244.3 1025.1 240.6 1026.5 237.3 1028.4 234.2 1030.4 231.2 1032.7 228.3 1035.1 225.5 1037.8 222.8 1040.6 220.3 1043.6 218.0 1046.7 215.9 1049.9 214.1 1053.1 212.5 1056.3 211.2 1059.4 210.0 1062.3 208.9 1065.2 207.9 1067.8 206.9 1070.4 206.0 1072.7 205.2 1074.9 204.3 1076.9 203.5 1078.6 202.8 1079.9 202.2 1080.9 201.6 1081.6 201.1 1081.9 200.6 1082.0 200.0 1081.8 199.4 1081.1 198.9 1079.9 198.4 1078.3 198.0 1076.7 197.4 1075.4 196.5 1074.1 195.6 1073.1 194.4 1073.0 192.8 1073.4 191.0 1073.8 189.2"/></defs><use href="#m5" stroke="#2a2a2a" stroke-width="6.1"/><use href="#m5" stroke="#a4a4a4" stroke-width="4.0"/><defs><path id="m6" d="M966.4 532.9 967.0 530.9 967.6 528.9 968.2 526.9 968.8 524.9 969.4 522.9 970.0 520.8 970.6 518.8 971.2 516.8 971.8 514.8 972.4 512.8 973.0 510.8 973.6 508.8 974.2 506.8 974.8 504.7 975.4 502.7 976.0 500.7 976.6 498.7 977.3 496.7 977.9 494.7 978.5 492.7 979.1 490.7 979.7 488.7 980.3 486.6 980.9 484.6 981.5 482.6 982.1 480.5 982.7 478.5 983.3 476.5 983.9 474.4 984.6 472.4 985.2 470.3 985.8 468.3 986.4 466.2 987.0 464.2 987.7 462.1 988.3 460.0 988.9 457.9 989.6 455.9 990.3 453.6 991.1 451.2 992.0 448.7 993.0 446.0 994.2 443.2 995.4 440.3 996.7 437.5 998.1 434.7 999.6 432.0 1001.2 429.3 1003.0 426.6 1004.9 424.0 1007.0 421.3 1009.2 418.7 1011.7 416.1 1014.3 413.6 1017.1 411.1 1020.0 408.7 1023.2 406.5 1026.5 404.3 1030.0 402.3 1033.6 400.4 1037.4 398.6 1041.6 396.8 1046.1 395.1 1051.0 393.6 1056.1 392.1 1061.5 390.9 1066.9 389.8 1072.2 388.9 1077.4 388.3 1082.3 387.8 1086.8 387.5 1090.7 387.4 1093.9 387.4 1096.2 387.3 1098.0 387.3 1099.2 387.2 1099.9 387.0 1100.1 386.6 1099.9 386.1 1099.3 385.5 1098.4 384.7 1097.3 383.8 1095.9 382.7 1094.5 381.4 1092.8 380.0 1090.4 378.4 1087.4 376.5 1084.0 374.3 1080.2 372.0 1076.4 369.4 1072.5 366.8 1068.9 364.0 1065.2 361.2 1061.0 358.1 1056.7 354.9 1052.5 351.6 1048.7 348.3 1045.8 345.2 1043.9 342.4 1042.9 339.8 1042.1 337.3 1041.4 334.8 1040.9 332.3 1040.6 329.9 1040.6 327.6 1040.9 325.3 1041.5 323.1 1042.2 321.0 1042.9 318.9 1043.7 316.8"/></defs><use href="#m6" stroke="#2a2a2a" stroke-width="6.1"/><use href="#m6" stroke="#a4a4a4" stroke-width="4.0"/><defs><path id="m7" d="M996.7 253.9 995.1 250.3 994.1 246.9 993.3 243.4 992.6 239.8 992.2 236.2 991.9 232.7 992.1 229.1 992.6 225.7 993.5 222.4 994.9 219.3 996.8 216.4 998.9 213.7 1001.3 211.1 1003.9 208.6 1006.5 206.3 1009.3 204.2 1012.1 202.1 1015.0 200.2 1017.8 198.3 1020.5 196.6 1023.4 195.0 1026.5 193.8 1029.5 192.8 1032.6 191.9 1035.6 191.3 1038.5 190.7 1041.3 190.3 1044.1 190.1 1047.1 190.4 1049.9 190.8 1052.6 191.1 1054.8 191.0 1056.8 190.9 1058.5 190.4 1059.6 189.1 1060.3 187.4 1061.0 185.6"/></defs><use href="#m7" stroke="#2a2a2a" stroke-width="6.1"/><use href="#m7" stroke="#a4a4a4" stroke-width="4.0"/><defs><path id="m8" d="M971.5 535.2 972.1 533.2 972.7 531.2 973.3 529.2 973.9 527.2 974.5 525.2 975.1 523.1 975.7 521.1 976.3 519.1 976.9 517.1 977.5 515.1 978.1 513.1 978.7 511.1 979.3 509.1 979.9 507.1 980.5 505.1 981.1 503.1 981.7 501.1 982.3 499.1 982.9 497.1 983.5 495.0 984.1 493.0 984.8 491.0 985.4 489.0 986.0 487.0 986.6 485.0 987.3 483.0 987.9 480.9 988.6 478.9 989.2 476.9 989.9 474.9 990.5 472.9 991.2 470.9 991.9 468.8 992.6 466.8 993.3 464.8 994.0 462.7 994.7 460.7 995.4 458.7 996.3 456.6 997.6 454.4 999.1 452.2 1000.9 449.9 1002.8 447.6 1005.0 445.3 1007.2 443.1 1009.5 440.9 1011.9 438.7 1014.3 436.7 1016.8 434.7 1019.6 432.7 1022.5 430.8 1025.6 429.0 1028.8 427.3 1032.2 425.6 1035.8 424.1 1039.5 422.7 1043.2 421.4 1047.1 420.2 1051.0 419.2 1055.0 418.3 1059.0 417.5 1063.4 416.8 1068.2 416.4 1073.3 416.0 1078.5 415.9 1083.8 415.9 1088.9 416.1 1093.9 416.4 1098.4 416.7 1102.4 417.1 1105.8 417.4 1108.3 417.6 1109.9 417.6 1110.5 417.4 1110.5 416.9 1109.9 416.1 1108.8 415.2 1107.2 414.0 1105.3 412.5 1103.1 410.9"/></defs><use href="#m8" stroke="#2a2a2a" stroke-width="6.1"/><use href="#m8" stroke="#a4a4a4" stroke-width="4.0"/><defs><path id="m9" d="M989.1 223.6 990.5 220.6 992.3 217.7 994.1 214.9 996.2 212.2 998.4 209.6 1000.6 207.1 1002.9 204.7 1005.5 202.6 1008.5 200.7 1011.7 199.0 1015.2 197.5 1018.7 196.2 1022.3 195.1 1025.8 194.1 1029.7 193.4 1034.1 193.2 1038.6 193.1 1042.8 192.9 1046.4 192.6 1049.6 192.1 1052.5 191.5 1054.0 190.0 1054.9 188.3 1055.7 186.5"/></defs><use href="#m9" stroke="#2a2a2a" stroke-width="6.1"/><use href="#m9" stroke="#a4a4a4" stroke-width="4.0"/><defs><path id="m10" d="M974.9 538.2 975.5 536.2 976.1 534.2 976.7 532.2 977.3 530.2 977.9 528.2 978.5 526.1 979.1 524.1 979.7 522.1 980.3 520.1 980.9 518.1 981.5 516.1 982.1 514.1 982.7 512.1 983.2 510.1 983.8 508.1 984.4 506.1 985.0 504.1 985.6 502.1 986.2 500.1 986.8 498.1 987.4 496.1 988.1 494.1 988.7 492.1 989.3 490.1 990.0 488.1 990.6 486.1 991.3 484.1 991.9 482.1 992.6 480.1 993.3 478.1 994.0 476.1 994.7 474.1 995.4 472.2 996.1 470.2 996.9 468.2 997.6 466.2 998.4 464.2 999.1 462.3 1000.2 460.3 1001.7 458.4 1003.6 456.6 1005.8 454.8 1008.3 453.1 1010.9 451.4 1013.6 449.8 1016.3 448.3 1019.1 446.8 1021.8 445.3 1024.6 444.0 1027.6 442.7 1030.8 441.6 1034.0 440.5 1037.4 439.6 1040.8 438.8 1044.3 438.0 1047.9 437.4 1051.4 436.9 1054.9 436.5 1058.4 436.2 1061.8 436.0 1065.1 435.9 1068.8 435.9 1072.7 436.2 1076.8 436.8"/></defs><use href="#m10" stroke="#2a2a2a" stroke-width="6.1"/><use href="#m10" stroke="#a4a4a4" stroke-width="4.0"/><defs><path id="m11" d="M954.3 534.5 954.9 532.5 955.5 530.5 956.1 528.5 956.7 526.5 957.3 524.4 957.9 522.4 958.5 520.4 959.1 518.4 959.7 516.4 960.3 514.4 960.9 512.3 961.5 510.3 962.1 508.3 962.7 506.3 963.3 504.3 963.9 502.2 964.5 500.2 965.1 498.2 965.7 496.2 966.3 494.2 966.9 492.1 967.5 490.1 968.0 488.1 968.6 486.1 969.2 484.0 969.7 482.0 970.2 480.0 970.8 477.9 971.3 475.9 971.8 473.8 972.3 471.8 972.8 469.7 973.3 467.7 973.7 465.6 974.2 463.6 974.6 461.5 975.1 459.4 975.5 457.3"/></defs><use href="#m11" stroke="#2a2a2a" stroke-width="6.1"/><use href="#m11" stroke="#a4a4a4" stroke-width="4.0"/><defs><path id="m12" d="M975.6 541.1 976.2 539.1 976.7 537.1 977.3 535.1 977.9 533.1 978.5 531.0 979.1 529.0 979.7 527.0 980.3 525.0 980.9 523.0 981.5 521.0 982.1 519.0 982.7 517.0 983.3 515.0 983.9 513.0 984.5 511.0 985.1 509.0 985.7 507.0 986.3 505.0 986.9 503.0 987.5 501.0 988.1 499.0 988.7 497.0 989.3 495.0 989.9 493.0 990.6 491.0 991.2 489.0 991.9 487.1 992.6 485.1 993.2 483.1 993.9 481.2 994.6 479.2 995.3 477.3 996.1 475.3 996.8 473.4 997.5 471.4 998.3 469.5 999.0 467.6 999.8 465.6"/></defs><use href="#m12" stroke="#2a2a2a" stroke-width="6.1"/><use href="#m12" stroke="#a4a4a4" stroke-width="4.0"/><defs><path id="m13" d="M955.0 537.4 955.6 535.4 956.2 533.4 956.8 531.4 957.4 529.4 958.0 527.3 958.6 525.3 959.1 523.3 959.7 521.3 960.3 519.3 960.9 517.2 961.5 515.2 962.1 513.2 962.7 511.2 963.3 509.2 963.9 507.2 964.5 505.1 965.1 503.1 965.7 501.1 966.3 499.1 966.9 497.1 967.5 495.0 968.1 493.0 968.7 491.0 969.2 489.0 969.8 487.0 970.3 485.0 970.9 482.9 971.4 480.9 971.9 478.9 972.4 476.9 972.9 474.9 973.4 472.8 973.9 470.8 974.4 468.8 974.8 466.8 975.3 464.8 975.7 462.7 976.1 460.7 976.3 458.6 975.9 456.5 975.3 454.4 974.3 452.2 973.0 449.9 971.6 447.6 970.1 445.2 968.5 442.7 967.0 440.2 965.5 437.7 963.8 435.0 962.0 432.3 960.1 429.4 958.0 426.5 955.8 423.4 953.6 420.3 951.3 417.0 948.9 413.6 946.6 410.1 944.3 406.5 942.0 402.8 939.8 399.0 937.6 395.1 935.2 391.0 932.5 386.7 929.6 382.1"/></defs><use href="#m13" stroke="#2a2a2a" stroke-width="6.1"/><use href="#m13" stroke="#a4a4a4" stroke-width="4.0"/><defs><path id="m14" d="M1114.2 254.7 1113.9 253.7 1113.4 252.7 1112.7 251.6 1111.8 250.3 1110.9 249.0 1109.8 247.6 1108.7 246.0 1107.3 244.3 1105.5 242.3 1103.5 240.1 1101.2 237.7 1098.9 235.1 1096.5 232.4 1094.1 229.5 1091.4 226.4 1088.3 222.8 1085.0 219.0 1082.0 215.3 1079.6 211.8 1077.5 208.4 1075.8 205.2 1075.5 202.8 1075.8 200.7 1076.2 198.7"/></defs><use href="#m14" stroke="#2a2a2a" stroke-width="6.1"/><use href="#m14" stroke="#a4a4a4" stroke-width="4.0"/><defs><path id="m15" d="M958.3 540.4 958.9 538.4 959.5 536.4 960.1 534.4 960.7 532.4 961.3 530.3 961.9 528.3 962.5 526.3 963.1 524.3 963.7 522.3 964.3 520.3 964.9 518.2 965.5 516.2 966.1 514.2 966.6 512.2 967.2 510.2 967.8 508.2 968.4 506.1 969.0 504.1 969.6 502.1 970.2 500.1 970.8 498.1 971.4 496.1 972.0 494.1 972.5 492.1 973.1 490.1 973.7 488.1 974.2 486.1 974.8 484.1 975.3 482.1 975.9 480.1 976.4 478.1 976.9 476.1 977.4 474.1 977.9 472.2 978.4 470.2 978.9 468.2 979.4 466.3 979.9 464.3 980.2 462.4 980.1 460.6 979.8 458.8 979.2 457.1 978.4 455.4 977.5 453.7 976.4 451.9 975.3 450.1 974.2 448.3 973.0 446.3 971.6 444.4 970.1 442.3 968.3 440.2 966.4 438.0 964.4 435.8 962.2 433.4 959.8 430.9 957.4 428.3 954.8 425.6 952.1 422.8 949.4 419.8 946.6 416.7 943.8 413.5 940.6 410.1 937.0 406.6 933.1 402.9 929.1 399.0 925.0 394.9 921.0 390.7 917.3 386.4 914.0 382.0 911.1 377.6 909.0 373.2 907.6 369.0 907.2 365.0 907.8 361.2 909.0 357.6 910.8 354.2 913.1 351.0 915.9 348.1 919.0 345.4 922.4 342.9"/></defs><use href="#m15" stroke="#2a2a2a" stroke-width="6.1"/><use href="#m15" stroke="#a4a4a4" stroke-width="4.0"/><defs><path id="m16" d="M1091.0 277.2 1093.8 276.6 1096.0 275.9 1098.0 275.2 1099.8 274.6 1101.5 274.1 1102.9 273.6 1104.0 273.1 1104.7 272.5 1105.0 271.8 1104.8 270.9 1104.1 269.8 1103.1 268.5 1101.9 267.2 1100.6 265.6 1099.1 264.0 1097.5 262.3 1095.9 260.4 1094.3 258.4 1092.7 256.4 1091.1 254.2 1089.4 251.8 1087.5 249.2 1085.7 246.4 1083.8 243.3 1082.0 240.1 1080.3 236.8 1078.7 233.4 1077.0 229.7 1075.3 225.6 1073.6 221.3 1072.2 217.2 1071.2 213.4 1070.4 209.7 1069.8 206.3 1070.0 203.7 1070.4 201.6 1070.9 199.6"/></defs><use href="#m16" stroke="#2a2a2a" stroke-width="6.1"/><use href="#m16" stroke="#a4a4a4" stroke-width="4.0"/><defs><path id="m17" d="M963.4 542.7 964.0 540.7 964.6 538.7 965.2 536.7 965.8 534.7 966.4 532.6 967.0 530.6 967.6 528.6 968.2 526.6 968.8 524.6 969.4 522.6 970.0 520.6 970.6 518.6 971.1 516.5 971.7 514.5 972.3 512.5 972.9 510.5 973.5 508.5 974.1 506.5 974.7 504.5 975.3 502.5 975.9 500.5 976.5 498.5 977.1 496.5 977.7 494.5 978.3 492.5 978.8 490.5 979.4 488.5 980.0 486.5 980.6 484.6 981.2 482.6 981.7 480.7 982.3 478.7 982.9 476.8 983.5 474.8 984.0 472.9 984.6 471.0 985.2 469.0 985.7 467.1 986.2 465.3 986.6 463.7 986.9 462.3 987.0 461.0 987.1 459.8 987.1 458.7 986.9 457.5 986.7 456.3 986.4 455.0 986.0 453.7 985.5 452.4 984.7 451.1 983.9 449.7 982.8 448.4 981.6 446.9 980.2 445.5 978.6 443.9 976.8 442.3 974.8 440.5 972.7 438.7 970.4 436.7 967.9 434.6 965.4 432.4 962.4 430.1 959.1 427.8 955.4 425.3 951.4 422.8 947.3 420.0 943.1 417.0 938.9 413.9 934.9 410.5 931.2 406.9 927.9 403.1 925.2 399.2 923.3 395.2 922.1 391.2 921.5 387.1 921.5 383.2 922.0 379.3 923.0 375.5 924.4 371.8 926.2 368.2 928.3 364.8 930.6 361.6 933.2 358.5 935.8 355.5 938.7 352.7 942.3 350.1 946.5 347.7 951.1 345.6 956.0 343.7 961.1 342.0 966.1 340.3 971.0 338.8 975.9 337.4 981.2 336.2 986.8 335.1 992.2 334.1 997.1 333.0 1001.3 331.8 1004.4 330.3 1006.5 328.6 1008.6 326.8 1010.4 325.1 1012.1 323.2 1013.6 321.4 1014.8 319.4 1015.7 317.4 1016.3 315.3 1016.8 313.1 1017.3 311.0 1017.7 308.9"/></defs><use href="#m17" stroke="#2a2a2a" stroke-width="6.1"/><use href="#m17" stroke="#a4a4a4" stroke-width="4.0"/><defs><path id="m18" d="M1103.1 410.9 1100.6 409.0 1098.0 407.0 1095.3 404.8 1092.6 402.4 1089.8 399.9 1086.5 397.1 1082.7 393.8 1078.7 390.3 1074.5 386.6 1070.4 382.7 1066.4 378.8 1062.6 374.9 1059.0 370.9 1055.1 366.6 1051.2 362.2 1047.5 357.8 1044.3 353.6 1041.8 349.7 1040.2 346.3 1039.4 343.4 1038.8 340.6 1038.3 337.8 1038.0 335.1 1037.8 332.5 1038.0 330.0 1038.3 327.7 1038.9 325.6 1039.6 323.4 1040.3 321.3 1041.0 319.3 1041.8 317.2 1042.5 315.2 1043.3 313.2 1044.0 311.2 1044.8 309.2 1045.6 307.3 1046.6 305.5 1047.7 303.8 1048.9 302.2 1050.1 300.8 1051.4 299.4 1052.6 298.0 1053.8 296.7 1054.9 295.5 1056.0 294.3 1057.3 293.4 1058.6 292.8 1059.9 292.3 1061.0 291.9 1061.9 291.5 1062.4 291.1 1062.6 290.5 1062.4 289.6 1061.7 288.5 1060.9 287.4 1059.8 286.2 1058.6 284.9 1057.1 283.5 1055.5 282.0 1053.6 280.3 1051.7 278.3 1049.7 276.1 1047.7 273.7 1045.8 271.0 1043.9 268.3 1042.1 265.4 1040.5 262.5 1039.0 259.5 1037.7 256.5 1036.5 253.4 1035.5 250.3 1034.7 247.3 1034.2 244.1 1034.1 240.8 1034.3 237.5 1034.8 234.2 1035.7 230.8 1036.8 227.5 1038.2 224.3 1040.1 220.9 1042.5 217.5 1045.3 214.1 1048.1 210.8 1050.6 207.8 1053.0 205.0 1055.3 202.2 1056.5 200.0 1057.4 198.0 1058.1 196.0"/></defs><use href="#m18" stroke="#2a2a2a" stroke-width="6.1"/><use href="#m18" stroke="#a4a4a4" stroke-width="4.0"/><defs><path id="m19" d="M1043.7 316.8 1044.5 314.7 1045.3 312.6 1046.2 310.6 1047.0 308.5 1047.9 306.5 1048.9 304.6 1050.2 302.7 1051.6 300.9 1053.2 299.2 1055.0 297.6 1056.8 296.1 1058.7 294.6 1060.7 293.2 1062.6 291.9 1064.5 290.6 1066.9 289.6 1069.5 288.8 1072.3 288.3 1075.1 287.8 1077.7 287.4 1080.0 287.1 1081.9 286.7 1083.3 286.1 1084.1 285.4 1084.6 284.7 1085.0 284.0 1085.2 283.3 1085.1 282.5 1084.6 281.6 1083.9 280.6 1082.9 279.4 1081.5 277.9 1079.8 276.2 1078.1 274.2 1076.2 272.1 1074.3 269.9 1072.4 267.6 1070.5 265.2 1068.8 262.6 1067.1 260.0 1065.5 257.4 1064.0 254.7 1062.6 251.8 1061.4 248.7 1060.3 245.4 1059.5 242.0 1058.8 238.5 1058.4 235.0 1058.2 231.5 1058.2 227.7 1058.6 223.6 1059.1 219.5 1059.8 215.5 1060.6 211.9 1061.4 208.4 1062.3 205.2 1063.0 202.7 1063.7 200.6 1064.3 198.6"/></defs><use href="#m19" stroke="#2a2a2a" stroke-width="6.1"/><use href="#m19" stroke="#a4a4a4" stroke-width="4.0"/><defs><path id="m20" d="M973.4 543.1 974.0 541.1 974.6 539.1 975.2 537.1 975.8 535.1 976.4 533.1 976.9 531.0 977.5 529.0 978.1 527.0 978.7 525.0 979.3 523.0 979.9 521.0 980.5 519.0 981.1 517.0 981.7 515.0 982.3 513.0 982.9 511.0 983.5 509.0 984.1 507.0 984.7 505.0 985.3 503.0 985.9 501.0 986.5 499.0 987.1 497.0 987.7 495.0 988.3 493.0 989.0 491.1 989.6 489.1 990.3 487.1 990.9 485.2 991.6 483.2 992.3 481.3 993.0 479.4 993.6 477.4 994.3 475.5 995.0 473.6 995.8 471.7 996.5 469.8 997.2 467.9 998.2 466.2 999.5 464.7 1001.0 463.4 1002.8 462.4 1004.7 461.4 1006.7 460.6 1008.7 459.8 1010.6 459.1 1012.4 458.3 1014.1 457.5 1015.8 456.9 1017.5 456.3 1019.2 455.8 1020.8 455.4 1022.4 455.0 1023.8 454.7 1025.1 454.4 1026.2 454.2 1027.2 453.9 1028.0 453.7 1028.6 453.4 1029.0 453.1 1029.1 452.8 1029.2 452.6 1029.2 452.6 1029.0 452.7 1028.5 452.7 1027.7 452.8 1026.7 452.6 1025.2 452.3 1023.4 451.6 1021.3 450.6 1018.9 449.2 1016.3 447.2 1013.5 444.8 1010.6 441.8 1007.8 438.4 1005.1 434.8 1002.5 431.0 1000.1 426.9 997.9 422.8 996.0 418.5 994.3 414.2 992.9 409.9 991.7 405.6 990.7 401.4 990.0 397.2 989.8 392.8 990.0 388.3 990.6 383.9 991.6 379.4 992.9 375.1 994.4 370.8 996.1 366.8 997.9 362.9 1000.3 358.9 1002.9 355.0 1005.6 351.3 1008.3 347.7 1010.6 344.5 1012.5 341.5 1013.8 338.9 1015.1 336.3 1016.4 333.8 1017.6 331.3 1018.7 329.0 1019.6 326.7 1020.4 324.5 1021.0 322.3 1021.6 320.2 1022.1 318.2 1022.6 316.1 1023.1 314.0 1023.5 311.9 1023.8 309.8 1024.2 307.7 1024.4 305.5 1024.6 303.4 1024.5 301.3 1024.3 299.2 1023.9 297.2 1023.3 295.1 1022.6 293.0 1021.7 290.8 1020.7 288.7 1019.5 286.5 1018.2 284.2 1016.5 281.9 1014.2 279.6 1011.6 277.2 1008.8 274.7 1005.8 272.1 1002.9 269.3 1000.2 266.4 997.8 263.4 995.9 260.3 994.0 257.1 992.2 253.8 990.5 250.5 988.9 247.0 987.7 243.6 986.8 240.1 986.3 236.6 986.3 233.2 986.9 229.9 987.8 226.7 989.1 223.6"/></defs><use href="#m20" stroke="#2a2a2a" stroke-width="6.1"/><use href="#m20" stroke="#a4a4a4" stroke-width="4.0"/><defs><path id="m21" d="M968.9 543.7 969.5 541.7 970.1 539.7 970.7 537.7 971.3 535.6 971.9 533.6 972.5 531.6 973.1 529.6 973.7 527.6 974.3 525.6 974.9 523.6 975.5 521.6 976.1 519.6 976.7 517.6 977.2 515.6 977.8 513.5 978.4 511.5 979.0 509.5 979.6 507.5 980.2 505.5 980.8 503.5 981.4 501.5 982.0 499.5 982.6 497.5 983.2 495.5 983.8 493.6 984.4 491.6 985.1 489.6 985.7 487.7 986.3 485.7 986.9 483.8 987.6 481.8 988.2 479.9 988.8 478.0 989.5 476.0 990.1 474.1 990.8 472.2 991.4 470.3 992.1 468.4 992.8 466.7 993.7 465.3 994.6 464.0 995.7 463.0 996.7 462.0 997.8 461.2 998.8 460.4 999.6 459.6 1000.4 458.7 1001.1 457.8 1001.6 457.0 1002.1 456.2 1002.5 455.4 1002.7 454.7 1002.8 454.0 1002.7 453.3 1002.4 452.5 1002.0 451.7 1001.3 450.9 1000.5 450.0 999.4 449.0 998.1 447.9 996.6 446.8 994.8 445.7 992.8 444.6 990.5 443.6 987.8 442.4 984.9 441.2 981.8 439.7 978.4 438.0 975.0 436.0 971.5 433.6 968.2 430.9 965.0 427.8 962.1 424.4 959.7 420.7 957.7 416.7 956.0 412.7 954.7 408.5 953.8 404.3 953.3 400.1 953.1 395.9 953.2 391.8 953.7 387.8 954.4 383.8 955.3 380.0 956.4 376.2 958.3 372.6 960.7 369.0 963.6 365.5 966.9 362.1 970.5 358.9 974.2 355.9 977.9 353.0 981.7 350.3 986.1 347.6 990.7 345.1 995.3 342.7 999.6 340.3 1003.2 338.1 1006.0 335.9 1007.9 333.7 1009.8 331.5 1011.5 329.4 1013.1 327.2 1014.4 325.1 1015.6 323.0 1016.4 320.9 1017.0 318.7 1017.6 316.6 1018.1 314.5 1018.5 312.4 1018.9 310.3 1019.3 308.1 1019.6 306.0 1019.9 303.8 1020.1 301.5 1020.2 299.3 1020.1 297.0 1019.7 294.6 1019.1 292.3 1018.4 289.8 1017.5 287.3 1016.5 284.8 1015.4 282.2 1014.2 279.5 1012.9 276.8 1011.1 273.9 1008.9 270.9 1006.4 267.7 1003.8 264.4 1001.2 260.9 998.7 257.4 996.7 253.9"/></defs><use href="#m21" stroke="#2a2a2a" stroke-width="6.1"/><use href="#m21" stroke="#a4a4a4" stroke-width="4.0"/><defs><path id="m22" d="M999.8 465.6 1000.9 463.8 1002.4 462.2 1004.3 460.7 1006.5 459.4 1009.0 458.2 1011.5 457.0 1014.1 456.0 1016.8 454.9 1019.3 453.9 1021.7 453.0 1024.3 452.1 1026.9 451.4 1029.6 450.7 1032.3 450.2 1035.0 449.7 1037.7 449.4 1040.4 449.1 1043.0 448.9 1045.5 448.8 1047.9 448.7 1050.2 448.7 1052.3 448.7 1054.2 448.8 1056.2 449.0 1058.4 449.5 1060.5 450.2 1062.5 450.9 1064.3 451.7 1065.7 452.4 1066.7 453.0 1067.2 453.3 1067.2 453.4 1066.6 453.0 1065.3 452.2 1063.5 450.8 1061.1 448.8 1058.4 446.4 1055.6 443.6 1052.5 440.6 1049.5 437.2 1046.4 433.7 1043.4 429.9 1040.5 426.0 1037.7 422.0 1035.1 418.0 1032.7 413.9 1030.5 409.8 1028.4 405.4 1026.5 400.7 1024.8 395.8 1023.3 390.9 1022.1 386.0 1021.3 381.1 1020.6 376.5 1020.2 371.9 1020.1 367.1 1020.2 362.3 1020.5 357.6 1020.9 353.2 1021.5 349.2 1022.1 345.8 1022.6 342.9 1023.2 340.0 1023.9 337.2 1024.5 334.5 1025.2 331.9 1025.8 329.5 1026.5 327.2 1027.1 325.1 1027.7 323.0 1028.3 320.9 1028.8 318.9 1029.4 316.8 1029.9 314.8 1030.4 312.7 1030.8 310.7 1031.2 308.6 1031.6 306.6 1031.8 304.7 1031.9 302.8 1031.9 301.0 1031.8 299.3 1031.6 297.6 1031.2 295.9 1030.7 294.1 1030.1 292.4 1029.3 290.6 1028.2 289.0 1026.7 287.4 1024.8 285.9 1022.7 284.3 1020.4 282.7 1017.9 280.8 1015.4 278.8 1013.0 276.5 1010.8 274.0 1008.6 271.4 1006.2 268.7 1003.9 265.9 1001.6 263.0 999.5 260.0 997.6 256.9 996.0 253.6 994.8 250.3 994.0 247.0 993.7 243.6 993.6 240.2 993.8 236.9 994.2 233.7 994.9 230.5 995.8 227.3 996.8 224.3 998.1 221.3 999.5 218.4 1001.3 215.7 1003.5 213.1 1006.2 210.7 1009.2 208.5 1012.5 206.4 1016.0 204.5 1019.5 202.7 1023.6 201.2 1028.4 199.9 1033.4 198.8 1038.2 197.8 1042.4 196.7 1046.2 195.5 1049.6 194.3 1051.3 192.7 1052.3 190.8 1053.2 189.0"/></defs><use href="#m22" stroke="#2a2a2a" stroke-width="6.1"/><use href="#m22" stroke="#a4a4a4" stroke-width="4.0"/><defs><path id="m23" d="M1076.8 436.8 1080.8 437.4 1084.8 438.2 1088.5 439.0 1091.9 439.8 1094.7 440.5 1096.9 441.1 1098.4 441.4 1099.0 441.3 1098.8 440.8 1097.7 439.8 1096.0 438.5 1093.9 436.8 1091.5 434.8 1088.7 432.5 1085.7 429.9 1082.6 427.1 1079.4 424.1 1076.2 421.0 1073.1 417.7 1070.0 414.3 1067.1 410.8 1063.8 406.9 1060.4 402.7 1057.0 398.2 1053.7 393.5 1050.5 388.8 1047.6 384.1 1045.0 379.4 1042.6 374.8 1040.2 369.9 1037.9 364.9 1035.8 360.0 1034.1 355.4 1032.9 351.2 1032.2 347.6 1032.0 344.5 1031.9 341.5 1031.9 338.7 1032.0 335.9 1032.2 333.2 1032.5 330.7 1033.0 328.4 1033.6 326.3 1034.3 324.2 1034.9 322.1 1035.6 320.0 1036.3 318.0 1036.9 316.0 1037.5 314.0 1038.1 312.0 1038.7 310.0 1039.2 308.0 1039.9 306.2 1040.5 304.5 1041.1 302.9 1041.6 301.4 1042.1 299.9 1042.5 298.5 1042.9 297.1 1043.1 295.7 1043.1 294.3 1043.1 293.2 1042.9 292.3 1042.5 291.4 1041.8 290.6 1040.9 289.8 1039.7 288.8 1038.3 287.6 1036.6 286.1 1034.9 284.4 1033.0 282.5 1031.0 280.6 1028.8 278.5 1026.6 276.4 1024.3 274.1 1022.0 271.6 1019.9 268.9 1018.0 266.0 1016.3 263.0 1014.9 259.8 1013.6 256.6 1012.6 253.4 1011.8 250.1 1011.3 246.8 1010.9 243.6 1010.8 240.3 1010.9 237.1 1011.1 234.0 1011.8 230.9 1012.9 227.8 1014.5 224.8 1016.4 221.9 1018.7 219.1 1021.3 216.4 1024.1 213.7 1027.4 211.2 1031.5 208.8 1035.9 206.5 1040.2 204.4 1043.9 202.3 1047.5 200.2 1050.6 198.3 1052.3 196.3 1053.2 194.4 1054.0 192.5"/></defs><use href="#m23" stroke="#2a2a2a" stroke-width="6.1"/><use href="#m23" stroke="#a4a4a4" stroke-width="4.0"/></g>
<path d="M1086.3 204.8 1086.0 205.6 1085.5 206.4 1084.9 207.1 1084.2 207.8 1083.4 208.4 1082.4 208.9 1081.3 209.4 1080.1 209.8 1078.8 210.2 1077.4 210.4 1075.9 210.6 1074.3 210.7 1072.7 210.8 1071.0 210.7 1069.3 210.6 1067.5 210.4 1065.7 210.1 1063.9 209.8 1062.1 209.3 1060.3 208.8 1058.5 208.3 1056.8 207.7 1055.1 207.0 1053.5 206.2 1052.0 205.5 1050.5 204.6 1049.1 203.8 1047.8 202.9 1046.6 202.0 1045.6 201.0 1044.6 200.0 1043.8 199.1 1043.1 198.1 1042.5 197.1 1042.1 196.2 1041.8 195.2 1041.7 194.3 1041.7 193.4 1041.9 192.6 1043.4 186.2 1043.7 185.4 1044.2 184.6 1044.8 183.9 1045.5 183.2 1046.4 182.6 1047.4 182.0 1048.5 181.6 1049.7 181.2 1051.0 180.8 1052.5 180.5 1054.0 180.4 1055.6 180.3 1057.3 180.2 1059.0 180.3 1060.7 180.4 1062.5 180.6 1064.4 180.9 1066.2 181.3 1068.0 181.7 1069.8 182.2 1071.6 182.8 1073.4 183.5 1075.1 184.2 1076.7 184.9 1078.3 185.7 1079.8 186.6 1081.2 187.4 1082.5 188.4 1083.7 189.3 1084.8 190.3 1085.8 191.3 1086.6 192.2 1087.3 193.2 1087.9 194.2 1088.3 195.2 1088.6 196.2 1088.7 197.1 1088.7 198.0 1088.5 198.9Z" fill="#4e4e4e" stroke="#222" stroke-width="1"/>
<path d="M1089.0 199.0 1088.6 199.8 1088.2 200.6 1087.6 201.4 1086.8 202.1 1085.9 202.7 1084.9 203.3 1083.8 203.8 1082.5 204.2 1081.2 204.5 1079.7 204.8 1078.2 205.0 1076.5 205.1 1074.8 205.1 1073.1 205.1 1071.3 204.9 1069.5 204.7 1067.6 204.4 1065.7 204.0 1063.9 203.6 1062.0 203.1 1060.2 202.5 1058.4 201.8 1056.7 201.1 1055.0 200.4 1053.4 199.5 1051.9 198.7 1050.4 197.8 1049.1 196.8 1047.9 195.9 1046.8 194.9 1045.8 193.9 1044.9 192.9 1044.2 191.9 1043.6 190.9 1043.2 189.9 1042.9 188.9 1042.8 187.9 1042.8 187.0 1043.0 186.1 1046.3 151.1 1046.8 150.0 1047.4 148.9 1048.2 148.0 1049.2 147.1 1050.4 146.3 1051.8 145.6 1053.3 145.0 1054.9 144.4 1056.7 144.0 1058.6 143.7 1060.7 143.5 1062.8 143.4 1065.0 143.4 1067.3 143.6 1069.7 143.8 1072.1 144.1 1074.5 144.6 1076.9 145.1 1079.4 145.7 1081.8 146.5 1084.2 147.3 1086.5 148.2 1088.7 149.2 1090.9 150.2 1093.0 151.4 1095.0 152.5 1096.8 153.8 1098.6 155.0 1100.1 156.3 1101.6 157.7 1102.8 159.0 1103.9 160.4 1104.8 161.7 1105.5 163.0 1106.1 164.4 1106.4 165.7 1106.6 166.9 1106.5 168.1 1106.3 169.3Z" fill="url(#gcup)" stroke="#222" stroke-width="1"/>
<path d="M1112.0 168.7 1111.4 170.3 1110.3 171.8 1109.0 173.1 1107.3 174.3 1105.4 175.3 1103.1 176.1 1100.6 176.8 1097.9 177.3 1094.9 177.6 1091.8 177.6 1088.5 177.5 1085.1 177.2 1081.6 176.8 1078.1 176.1 1074.6 175.2 1071.1 174.2 1067.6 173.0 1064.3 171.7 1061.1 170.2 1058.0 168.6 1055.1 166.9 1052.5 165.1 1050.0 163.3 1047.9 161.3 1046.0 159.4 1044.5 157.4 1043.3 155.5 1042.4 153.6 1041.8 151.7 1041.6 149.9 1041.8 148.1 1042.3 146.5 1043.1 145.0 1044.3 143.6 1045.8 142.3 1047.6 141.2 1049.7 140.3 1052.1 139.5 1054.7 138.9 1057.6 138.6 1060.6 138.4 1063.8 138.4 1067.2 138.6 1070.6 139.0 1074.1 139.6 1077.6 140.3 1081.2 141.3 1084.6 142.4 1088.0 143.6 1091.3 145.0 1094.5 146.6 1097.5 148.2 1100.2 150.0 1102.8 151.8 1105.1 153.7 1107.1 155.6 1108.8 157.6 1110.2 159.5 1111.2 161.5 1112.0 163.4 1112.3 165.2 1112.4 167.0 1112.0 168.7Z" fill="#b5b5b5" stroke="#222" stroke-width="1.4"/>
<path d="M1109.6 168.0 1109.0 169.4 1108.0 170.8 1106.8 172.0 1105.2 173.1 1103.4 174.1 1101.3 174.9 1099.0 175.5 1096.4 175.9 1093.7 176.2 1090.7 176.3 1087.7 176.2 1084.5 175.9 1081.3 175.4 1078.0 174.8 1074.8 174.0 1071.5 173.1 1068.3 172.0 1065.2 170.7 1062.2 169.3 1059.3 167.9 1056.6 166.3 1054.2 164.6 1051.9 162.9 1049.9 161.1 1048.2 159.3 1046.7 157.5 1045.6 155.7 1044.8 153.9 1044.3 152.1 1044.1 150.4 1044.2 148.8 1044.7 147.3 1045.5 145.9 1046.6 144.6 1048.0 143.4 1049.7 142.4 1051.6 141.5 1053.8 140.8 1056.3 140.3 1058.9 139.9 1061.8 139.7 1064.8 139.8 1067.9 139.9 1071.1 140.3 1074.3 140.8 1077.6 141.6 1080.9 142.4 1084.1 143.5 1087.3 144.6 1090.3 146.0 1093.3 147.4 1096.0 148.9 1098.6 150.5 1101.0 152.2 1103.1 154.0 1105.0 155.8 1106.6 157.6 1107.9 159.4 1108.9 161.2 1109.5 163.0 1109.9 164.7 1109.9 166.4 1109.6 168.0Z" fill="none" stroke="#444" stroke-width="0.9"/>
<path d="M1102.1 168.9 1101.6 170.1 1100.9 171.2 1099.9 172.2 1098.6 173.1 1097.2 173.8 1095.5 174.5 1093.6 175.0 1091.6 175.3 1089.4 175.5 1087.1 175.6 1084.6 175.5 1082.1 175.3 1079.5 175.0 1076.9 174.5 1074.3 173.8 1071.7 173.1 1069.1 172.2 1066.6 171.2 1064.2 170.1 1061.9 168.9 1059.8 167.7 1057.8 166.4 1056.0 165.0 1054.4 163.6 1053.0 162.1 1051.8 160.7 1050.9 159.2 1050.2 157.8 1049.8 156.4 1049.7 155.0 1049.8 153.7 1050.1 152.5 1050.8 151.4 1051.7 150.3 1052.8 149.4 1054.1 148.6 1055.7 147.9 1057.5 147.3 1059.4 146.9 1061.5 146.6 1063.8 146.4 1066.2 146.4 1068.7 146.6 1071.2 146.9 1073.8 147.3 1076.5 147.9 1079.1 148.6 1081.7 149.4 1084.2 150.3 1086.7 151.4 1089.0 152.5 1091.2 153.7 1093.3 155.0 1095.2 156.4 1096.9 157.8 1098.4 159.2 1099.7 160.7 1100.7 162.1 1101.5 163.6 1102.1 165.0 1102.3 166.4 1102.4 167.7 1102.1 168.9Z" fill="url(#gin)" stroke="#222" stroke-width="1.2"/>
<path d="M1072.5 172.0 L1080.0 151.5" stroke="#222" stroke-width="1.6"/></svg>
<svg class="a" style="left:0;top:0" width="1280" height="720">
<path d="M106 479.5 C118 475 134 473.5 147 476 C155 478 160.5 484 160.3 491 C160 500 154 508 146 514.5 C136 521.5 124 527.5 111.2 530.5 C120 524 131 515 138.5 508.5 C144 502 146 495 145.8 489.5 C145.5 485 141 482.5 135 482 C125 481.3 115 481 106 480.5Z" fill="#d0202e"/>
<path d="M74.5 544 C85 539 98 536.8 106.3 537 C119 537.3 131 542 135 548.8 C138.5 555 136 564 131.5 571.8 C125 581 114 589 103 595 C90 601.5 74 606 58.5 608.5 C62 601 65 596 67.5 591.3 C73 581 82 565 92 554 C94 553 97.5 554.5 97 557.5 C92 566 85 580 78.5 594 C82 594.5 85 595 87.5 594.5 C97 591 108 582 116.5 571.5 C121 564 123.5 557 121.5 553 C119 548 111 546.5 100 546.5 C90 546.5 82 546.5 74.5 544Z" fill="#3c3a99"/>
<path d="M196.7 525.2 C185 521 166 519 153 521.5 C143 524 140.5 532 145 539 L171 566.5 C177 573 177.5 580 171 583 C160 587 140 587 124.4 588 C140 591.5 164 593.5 178 590.5 C190 587 192 576 185 565.5 L159 536 C155 531 156.5 528.5 163 527.8 C176 526.5 188 526.3 196.7 525.2Z" fill="#e2a43a"/>
<path d="M157.5 518 V600" stroke="#8d8989" stroke-width="1" opacity="0.9"/>
<g transform="translate(101,654.5) scale(0.70,1)"><text x="0" y="0" font-family="Liberation Sans" font-weight="bold" font-size="66" fill="#c62234" stroke="#c62234" stroke-width="3.4" letter-spacing="0.5">So</text></g><g transform="translate(161,654.5) scale(0.74,1.13)"><text x="0" y="0" font-family="Liberation Sans" font-weight="bold" font-size="66" fill="#c62234" stroke="#c62234" stroke-width="3.2" letter-spacing="0.5">li</text></g><g transform="translate(190.5,654.5) scale(0.68,1.02)"><text x="0" y="0" font-family="Liberation Sans" font-weight="bold" font-size="66" fill="#c62234" stroke="#c62234" stroke-width="3.4">d</text></g>
<g transform="translate(217,655.5) scale(0.79,1)"><text x="0" y="0" font-family="Liberation Sans" font-size="66" fill="#c4283a" letter-spacing="-1">Works</text></g>
<path d="M188 660 L191.5 645" stroke="#22aa33" stroke-width="1.6"/><path d="M189 646 L192 640 L194 647Z" fill="#33cc44"/>
<path d="M188 660 L200 666" stroke="#1a2fa8" stroke-width="1.8"/><path d="M198 663 L205 667.5 L197 668.5Z" fill="#1a2fa8"/>
<path d="M188 660 L193 657" stroke="#d33" stroke-width="1"/>
<text x="204" y="670" font-family="Liberation Sans" font-size="5" fill="#1a2fa8">z</text>
</svg>

<!-- HEADS-UP TOOLBAR -->
<svg class="a" style="left:594px;top:105px" width="250" height="17" viewBox="594 105 250 17">
 <circle cx="604" cy="111" r="4" fill="#f4f8fb" stroke="#6f8796" stroke-width="1.2"/><path d="M601 114 L596 119" stroke="#3a8fc9" stroke-width="2"/>
 <circle cx="622" cy="111" r="4" fill="#f4f8fb" stroke="#6f8796" stroke-width="1.2"/><path d="M619 114 L614 119" stroke="#3a8fc9" stroke-width="2"/><path d="M616 106 H628 V116" stroke="#888" stroke-width=".8" stroke-dasharray="1.5,1" fill="none"/>
 <path d="M633 117 L643 107 L646 110 L636 120Z" fill="#d9dfe3" stroke="#6f7a82" stroke-width=".8"/><path d="M638 116 H645 M642 113 L645 116 L642 119" stroke="#3a8fc9" stroke-width="1.4" fill="none"/>
 <path d="M651 109 L661 106 L661 117 L651 120Z" fill="#5a9fcf" stroke="#33576e" stroke-width=".8"/><path d="M654 108 V119 M658 107 V118" stroke="#2a4a5e" stroke-width=".7"/>
 <path d="M669 117 L678 106 L681 108 L672 119Z" fill="#e8b84a" stroke="#8a6a20" stroke-width=".8"/><path d="M672 112 L679 119 M675 119 L681 113" stroke="#3a8fc9" stroke-width="1.2"/>
 <path d="M688 110 L693 107 L699 109 L699 117 L694 120 L688 118Z" fill="#aed3ee" stroke="#4e6f85" stroke-width=".9"/><path d="M688 110 L694 112 L699 109 M694 112 V120" stroke="#4e6f85" stroke-width=".8" fill="none"/>
 <path d="M705 113 L708 113 L706.5 115Z" fill="#999"/>
 <path d="M714 110 L719 107 L725 109 L725 117 L720 120 L714 118Z" fill="#cfe4f3" stroke="#4e6f85" stroke-width=".9"/><path d="M714 110 L720 112 V120" stroke="#4e6f85" stroke-width=".8" fill="none"/>
 <path d="M732 113 L735 113 L733.5 115Z" fill="#999"/>
 <rect x="741" y="105.5" width="26" height="15" fill="#cfcbcb" stroke="#b5b1b1" stroke-width=".8"/>
 <path d="M744 113 Q749 108 754 113 Q749 118 744 113Z" fill="#fff" stroke="#222" stroke-width="1"/><circle cx="749" cy="113" r="2" fill="#111"/><path d="M749 108 V119" stroke="#111" stroke-width="1.2"/>
 <path d="M761 113 L764 113 L762.5 115Z" fill="#555"/>
 <circle cx="776" cy="112" r="5" fill="#e34a4a"/><path d="M776 112 L781 112 A5 5 0 0 1 772 116Z" fill="#3ab54a"/><path d="M776 112 L772 116 A5 5 0 0 1 771 112Z" fill="#3a8fe0"/><path d="M778 116 L784 120" stroke="#e0b030" stroke-width="2"/>
 <circle cx="795" cy="111" r="5" fill="#e34a4a"/><path d="M795 111 L800 111 A5 5 0 0 1 791 115Z" fill="#3ab54a"/><path d="M795 111 L791 115 A5 5 0 0 1 790 111Z" fill="#3a8fe0"/><rect x="789" y="115" width="12" height="4" fill="#555"/><path d="M790 116 H800" stroke="#e8c020" stroke-width="1" stroke-dasharray="1.5,1"/>
 <path d="M806 113 L809 113 L807.5 115Z" fill="#999"/>
 <rect x="816" y="107" width="13" height="9" fill="#f4f4f4" stroke="#555" stroke-width="1"/><path d="M822.5 116 V119 M819 119.5 H826" stroke="#555" stroke-width="1"/>
 <path d="M834 113 L837 113 L835.5 115Z" fill="#999"/>
</svg>
<!-- window buttons -->
<svg class="a" style="left:1188px;top:92px" width="92" height="14" viewBox="1188 92 92 14">
 <rect x="1191.5" y="94.5" width="7" height="9" fill="none" stroke="#b9b5b5"/><path d="M1196 97 L1194 99 L1196 101" stroke="#999" fill="none"/>
 <rect x="1210.5" y="94.5" width="7" height="9" fill="none" stroke="#b9b5b5"/><path d="M1213 97 L1215 99 L1213 101" stroke="#999" fill="none"/>
 <path d="M1228 101.5 H1235" stroke="#b5b1b1" stroke-width="1.6"/>
 <rect x="1245.5" y="96.5" width="6" height="5" fill="none" stroke="#b9b5b5"/><path d="M1247.5 96.5 V94.5 H1253.5 V99.5 H1251.5" stroke="#b9b5b5" fill="none"/>
 <path d="M1264 94 L1272 102 M1272 94 L1264 102" stroke="#b9b5b5" stroke-width="1.1"/>
</svg>
<!-- task pane -->
<div class="a" style="left:1263px;top:123px;width:18px;height:118px;background:#e9e5e5;border:1px solid #bcb8b8"></div>
<svg class="a" style="left:1264px;top:124px" width="16" height="116" viewBox="1264 124 16 116">
 <path d="M1265 124.5 H1280 M1265 140.5 H1280 M1265 157.5 H1280 M1265 173.5 H1280 M1265 190.5 H1280 M1265 207.5 H1280 M1265 223.5 H1280" stroke="#c8c4c4"/>
 <path d="M1266 133 L1273 127 L1280 133" stroke="#1f5f95" stroke-width="1.8" fill="none"/><path d="M1268 132 V138 H1278 V132" fill="#fff" stroke="#555" stroke-width="1"/><rect x="1271" y="134" width="3" height="4" fill="#555"/>
 <path d="M1268 145 L1272 143 L1278 144 L1278 154 L1273 156 L1268 154Z" fill="#e8e8e8" stroke="#555" stroke-width="1"/><path d="M1272 144 V155 M1275 144 V155" stroke="#555" stroke-width=".7"/>
 <path d="M1266 160 H1271 L1273 162 H1280 V171 H1266Z" fill="#fff" stroke="#666" stroke-width="1"/><path d="M1266 171 L1269 164 H1280" stroke="#666" fill="none"/>
 <rect x="1266" y="176" width="14" height="12" fill="#f2d27a" stroke="#7a6020" stroke-width=".9"/><path d="M1268 185 L1272 179 L1276 185" fill="#d8a020" stroke="#7a6020" stroke-width=".7"/><path d="M1267 179 H1279" stroke="#7a6020" stroke-width=".8"/>
 <circle cx="1273" cy="199" r="6" fill="#3ab54a"/><path d="M1273 199 L1273 193 A6 6 0 0 1 1279 199Z" fill="#e34a4a"/><path d="M1273 199 L1267 199 A6 6 0 0 1 1273 193Z" fill="#3a8fe0"/><path d="M1273 199 L1279 199 A6 6 0 0 1 1273 205Z" fill="#f5c518"/>
 <rect x="1266" y="210" width="14" height="12" fill="#dfe9f1" stroke="#2f5f88" stroke-width="1"/><path d="M1268 213 H1278 M1268 216 H1278 M1268 219 H1278" stroke="#2f5f88" stroke-width="1"/>
 <path d="M1266 226 H1275 V232 H1270 L1267 235 V232 H1266Z" fill="#6fb6e8" stroke="#2f6f9f" stroke-width=".8"/><path d="M1272 230 H1280 V237 H1278 V239 L1276 237 H1272Z" fill="#fff" stroke="#555" stroke-width=".8"/>
</svg>

<!-- LEFT PANEL header -->
<div class="a" style="left:0;top:103px;width:157px;height:16px;background:#fdf8f8;border-bottom:1px solid #e0dcdc"></div>
<div class="a" style="left:73px;top:110px;width:5px;height:5px;border:1px solid #aaa;border-radius:50%"></div>
<div class="a" style="left:0;top:120px;width:156px;height:19px;background:#ebe7e7;border-bottom:1px solid #c8c4c4"></div>
<div class="a" style="left:-1px;top:120px;width:27px;height:19px;background:#fdf8f8;border-right:1px solid #cfcbcb"></div>
<div class="a" style="left:54px;top:121px;width:1px;height:17px;background:#d2cece"></div>
<div class="a" style="left:82px;top:121px;width:1px;height:17px;background:#d2cece"></div>
<div class="a" style="left:110px;top:121px;width:1px;height:17px;background:#d2cece"></div>
<div class="a" style="left:137px;top:125px;width:19px;height:13px;background:#f5f1f1;border-left:1px solid #ddd"></div>
<div class="a" style="left:143px;top:125px;width:1px;height:13px;background:#ddd"></div>
<svg class="a" style="left:6px;top:123px" width="14" height="13"><path d="M4.5 1.5 C7 0.5 9 2 8.5 4 C11 3 13 5 12 7.5 C13.5 9.5 12 12 9.5 11.5 C8 13 5 12.5 5 10.5 C2.5 11 0.5 9 1.5 6.5 C0.5 4.5 2 2.5 4.5 1.5Z" fill="#ecd93a" stroke="#7a6a10" stroke-width="1"/><path d="M5 5.5 C6.5 6.5 8 6.5 9 5.5 M5 10.5 C6 9 6 8 5 6.5" stroke="#9a8a20" stroke-width=".7" fill="none"/></svg>
<svg class="a" style="left:33px;top:123px" width="14" height="13"><rect x="1" y="1" width="12" height="11" fill="#dde7ef" stroke="#3b6f99" stroke-width="1.2"/><path d="M3 4 H11 M3 6.5 H11 M3 9 H11" stroke="#3b6f99" stroke-width="1"/><rect x="1" y="1" width="12" height="2" fill="#3b6f99"/></svg>
<svg class="a" style="left:62px;top:122px" width="12" height="15"><path d="M2 1 V13 M2 1 H7 L9 3 V6 H4 M4 6 L9 12 M6 9 H10 V13 H6Z" stroke="#444" stroke-width="1.1" fill="none"/></svg>
<svg class="a" style="left:89px;top:122px" width="14" height="14"><circle cx="7" cy="7" r="4.2" fill="none" stroke="#222" stroke-width="1.4"/><path d="M7 0 V14 M0 7 H14" stroke="#222" stroke-width="1.4"/></svg>
<svg class="a" style="left:117px;top:122px" width="14" height="14"><circle cx="7" cy="7" r="6" fill="#3a9ad3"/><path d="M7 7 L7 1 A6 6 0 0 1 13 7Z" fill="#e33"/><path d="M7 7 L13 7 A6 6 0 0 1 3 11.5Z" fill="#f5c518"/><path d="M7 7 L3 11.5 A6 6 0 0 1 1 7Z" fill="#3ab54a"/><path d="M7 1 L11 6" stroke="#222" stroke-width="1.5"/></svg>
<svg class="a" style="left:139px;top:129px" width="3" height="5"><path d="M3 0 L0 2.5 L3 5Z" fill="#333"/></svg>
<svg class="a" style="left:149px;top:129px" width="3" height="5"><path d="M0 0 L3 2.5 L0 5Z" fill="#333"/></svg>
<div class="a" style="left:1px;top:140px;width:153px;height:16px;background:#fdf8f8;border:1px solid #e6e2e2"></div>
<svg class="a" style="left:2px;top:141px" width="12" height="14"><path d="M0.5 1.5 H11.5 L7 6.5 V13 L5 12 V6.5Z" fill="#dfe8ef" stroke="#555" stroke-width="1"/><path d="M1 1.5 H11" stroke="#3a8fc9" stroke-width="1.6"/></svg>
<svg class="a" style="left:1px;top:158px" width="14" height="13"><path d="M4.5 1.5 C7 0.5 9 2 8.5 4 C11 3 13 5 12 7.5 C13.5 9.5 12 12 9.5 11.5 C8 13 5 12.5 5 10.5 C2.5 11 0.5 9 1.5 6.5 C0.5 4.5 2 2.5 4.5 1.5Z" fill="#ecd93a" stroke="#7a6a10" stroke-width="1"/><path d="M5 5.5 C6.5 6.5 8 6.5 9 5.5 M5 10.5 C6 9 6 8 5 6.5" stroke="#9a8a20" stroke-width=".7" fill="none"/></svg>
<div class="tr" style="left:16px;top:159.5px;letter-spacing:-0.15px">Part2&nbsp; (Default&lt;&lt;Default&gt;_Display Sta</div>
<div class="a" style="left:0;top:478.5px;width:110px;height:2px;background:#2e9ad0"></div>
<!-- scrollbar -->
<div class="a" style="left:9px;top:684px;width:118px;height:9px;background:#dedada"></div>
<svg class="a" style="left:2px;top:686px" width="4" height="6"><path d="M3.5 0 L0.5 3 L3.5 6" stroke="#444" fill="none" stroke-width="1.1"/></svg>
<svg class="a" style="left:148px;top:686px" width="4" height="6"><path d="M0.5 0 L3.5 3 L0.5 6" stroke="#444" fill="none" stroke-width="1.1"/></svg>
<div class="a" style="left:157px;top:379px;width:5px;height:27px;background:#fdf8f8;border:1px solid #a9a5a5;border-left:none"></div>
<div class="a" style="left:158.5px;top:390px;width:3px;height:3px;border:1px solid #bbb;border-radius:50%"></div>

<svg class="a" style="left:4px;top:177px" width="4" height="6"><path d="M0 0 L3.5 3 L0 6Z" fill="#444"/></svg>
<svg class="a" style="left:16px;top:173px" width="14" height="14"><path d="M0.5 2.5 V11.5 H12.5 V3.5 H6 L5 1.5 H1.5Z" fill="#f4f6f8" stroke="#707070" stroke-width="1"/><path d="M1.5 4.5 H11.5" stroke="#9a9a9a" stroke-width=".6"/><path d="M3 9 Q4 5 8 6 Q10 7 9 9" stroke="#3a8fc9" stroke-width="1.4" fill="none"/><path d="M3 10 L5 8" stroke="#3a8fc9" stroke-width="1.2"/></svg>
<div class="tr" style="left:32px;top:174.5px">History</div>
<svg class="a" style="left:16px;top:188px" width="14" height="14"><path d="M0.5 2.5 V11.5 H12.5 V3.5 H6 L5 1.5 H1.5Z" fill="#f4f6f8" stroke="#707070" stroke-width="1"/><path d="M1.5 4.5 H11.5" stroke="#9a9a9a" stroke-width=".6"/><circle cx="6.5" cy="7.5" r="2.6" fill="none" stroke="#555" stroke-width="1.1"/></svg>
<div class="tr" style="left:32px;top:189.5px">Sensors</div>
<svg class="a" style="left:4px;top:208px" width="4" height="6"><path d="M0 0 L3.5 3 L0 6Z" fill="#444"/></svg>
<svg class="a" style="left:16px;top:204px" width="14" height="14"><path d="M0.5 2.5 V11.5 H12.5 V3.5 H6 L5 1.5 H1.5Z" fill="#f4f6f8" stroke="#707070" stroke-width="1"/><path d="M1.5 4.5 H11.5" stroke="#9a9a9a" stroke-width=".6"/><text x="4" y="10.5" font-family="Liberation Serif" font-size="8" fill="#2f7fb8">A</text></svg>
<div class="tr" style="left:32px;top:205.5px">Annotations</div>
<svg class="a" style="left:4px;top:223px" width="4" height="6"><path d="M0 0 L3.5 3 L0 6Z" fill="#444"/></svg>
<svg class="a" style="left:16px;top:219px" width="14" height="14"><path d="M0.5 2.5 V11.5 H12.5 V3.5 H6 L5 1.5 H1.5Z" fill="#f4f6f8" stroke="#707070" stroke-width="1"/><path d="M1.5 4.5 H11.5" stroke="#9a9a9a" stroke-width=".6"/><path d="M3 8 L6 5 L10 6 L8 9 Z" fill="#3a9ad3" stroke="#1f5f85" stroke-width=".6"/></svg>
<div class="tr" style="left:32px;top:220.5px">Surface Bodies(2)</div>
<svg class="a" style="left:4px;top:238px" width="4" height="6"><path d="M0 0 L3.5 3 L0 6Z" fill="#444"/></svg>
<svg class="a" style="left:16px;top:234px" width="14" height="14"><path d="M0.5 2.5 V11.5 H12.5 V3.5 H6 L5 1.5 H1.5Z" fill="#f4f6f8" stroke="#707070" stroke-width="1"/><path d="M1.5 4.5 H11.5" stroke="#9a9a9a" stroke-width=".6"/><path d="M4 6 L7 5 L9 7 L9 10 L6 10.5 L4 9Z" fill="#3a9ad3" stroke="#1f5f85" stroke-width=".6"/></svg>
<div class="tr" style="left:32px;top:235.5px">Solid Bodies(1)</div>
<svg class="a" style="left:16px;top:250px" width="14" height="14"><path d="M3 1.5 H12 M3 4.5 H12 M3 7.5 H9" stroke="#555" stroke-width="1.2"/><circle cx="1.5" cy="1.5" r="1" fill="#8bb7d6"/><circle cx="1.5" cy="4.5" r="1" fill="#8bb7d6"/><circle cx="1.5" cy="8" r="1.2" fill="#d8c040"/><circle cx="10" cy="8.5" r="1.8" fill="#222"/></svg>
<div class="tr" style="left:32px;top:251.5px">Material &lt;not specified&gt;</div>
<svg class="a" style="left:16px;top:265px" width="14" height="14"><path d="M2.5 2.5 V12.5 L4 13 M2.5 2.5 L4 2 M10.5 1 V11 L9 11.5 M10.5 1 L9 1.5" stroke="#555" stroke-width="1" fill="none"/><path d="M6.5 0.5 V13.5" stroke="#555" stroke-width="1" stroke-dasharray="2,1.5"/></svg>
<div class="tr" style="left:32px;top:266.5px">Front Plane</div>
<svg class="a" style="left:16px;top:280px" width="14" height="14"><path d="M2.5 2.5 V12.5 L4 13 M2.5 2.5 L4 2 M10.5 1 V11 L9 11.5 M10.5 1 L9 1.5" stroke="#555" stroke-width="1" fill="none"/><path d="M6.5 0.5 V13.5" stroke="#555" stroke-width="1" stroke-dasharray="2,1.5"/></svg>
<div class="tr" style="left:32px;top:281.5px">Top Plane</div>
<svg class="a" style="left:16px;top:296px" width="14" height="14"><path d="M2.5 2.5 V12.5 L4 13 M2.5 2.5 L4 2 M10.5 1 V11 L9 11.5 M10.5 1 L9 1.5" stroke="#555" stroke-width="1" fill="none"/><path d="M6.5 0.5 V13.5" stroke="#555" stroke-width="1" stroke-dasharray="2,1.5"/></svg>
<div class="tr" style="left:32px;top:297.5px">Right Plane</div>
<svg class="a" style="left:16px;top:311px" width="14" height="14"><path d="M1.5 1 V12.5 H12" stroke="#111" stroke-width="1.4" fill="none"/></svg>
<div class="tr" style="left:32px;top:312.5px">Origin</div>
<svg class="a" style="left:3px;top:331px" width="6" height="4"><path d="M0 0 H6 L3 3.5Z" fill="#444"/></svg>
<svg class="a" style="left:16px;top:326px" width="14" height="14"><path d="M2 7 Q2 2 8 2 Q13 3 12 8 Q11 12 6 12 Q3 12 2 10" fill="none" stroke="#3a9ad3" stroke-width="2.2"/><path d="M4 6 Q8 4 11 7" stroke="#333" stroke-width=".8" fill="none"/></svg>
<div class="tr" style="left:32px;top:327.5px">Surface-Revolve2</div>
<svg class="a" style="left:31px;top:342px" width="14" height="14"><path d="M1 1 Q1 0.5 5 1 V12 H13" stroke="#555" stroke-width="1" fill="none"/><path d="M1 1 Q0.5 10 5 12" stroke="#555" stroke-width="1" fill="none"/></svg>
<div class="tr" style="left:47px;top:343.5px">(-) Sketch1</div>
<svg class="a" style="left:3px;top:362px" width="6" height="4"><path d="M0 0 H6 L3 3.5Z" fill="#444"/></svg>
<svg class="a" style="left:16px;top:357px" width="14" height="14"><path d="M2 2 L10 6 M2 10 L10 6" stroke="#444" stroke-width=".9" fill="none"/><ellipse cx="8" cy="4" rx="4" ry="2" fill="none" stroke="#444" stroke-width=".9"/><ellipse cx="8" cy="9" rx="4" ry="2" fill="none" stroke="#444" stroke-width=".9"/></svg>
<div class="tr" style="left:32px;top:358.5px">Helix/Spiral1</div>
<svg class="a" style="left:31px;top:373px" width="14" height="14"><path d="M1 1 Q1 0.5 5 1 V12 H13" stroke="#555" stroke-width="1" fill="none"/><path d="M1 1 Q0.5 10 5 12" stroke="#555" stroke-width="1" fill="none"/></svg>
<div class="tr" style="left:47px;top:374.5px">Sketch2</div>
<svg class="a" style="left:4px;top:392px" width="4" height="6"><path d="M0 0 L3.5 3 L0 6Z" fill="#444"/></svg>
<svg class="a" style="left:16px;top:388px" width="14" height="14"><path d="M2 11 Q1 14 4 12 Q8 10 7 6 Q7 2 11 2 Q14 3 12 6" fill="none" stroke="#2f95cf" stroke-width="3"/></svg>
<div class="tr" style="left:32px;top:389.5px">Surface-Sweep1</div>
<svg class="a" style="left:16px;top:403px" width="14" height="14"><path d="M1 12 L12 2" stroke="#3a8fc9" stroke-width="1.1" stroke-dasharray="2,1.3"/></svg>
<div class="tr" style="left:32px;top:404.5px">Axis1</div>
<svg class="a" style="left:4px;top:423px" width="4" height="6"><path d="M0 0 L3.5 3 L0 6Z" fill="#444"/></svg>
<svg class="a" style="left:16px;top:419px" width="14" height="14"><path d="M2 11 Q1 14 4 12 Q8 10 7 6 Q7 2 11 2 Q14 3 12 6" fill="none" stroke="#2f95cf" stroke-width="3"/></svg>
<div class="tr" style="left:32px;top:420.5px">Sweep2</div>
<svg class="a" style="left:16px;top:434px" width="14" height="14"><path d="M1 4 L5 7 L1 10Z M13 4 L9 7 L13 10Z M5 1 L9 1 L7 5Z M5 13 L9 13 L7 9Z" fill="none" stroke="#555" stroke-width=".9"/><path d="M1 4 L5 7 L1 10Z" fill="#3a9ad3"/></svg>
<div class="tr" style="left:32px;top:435.5px">CirPattern1</div>
<svg class="a" style="left:4px;top:453px" width="4" height="6"><path d="M0 0 L3.5 3 L0 6Z" fill="#444"/></svg>
<svg class="a" style="left:16px;top:449px" width="14" height="14"><path d="M3 3 Q10 0 12 5 Q14 11 7 12 Q2 12 2 9 Q5 10 9 8 Q10 5 5 5Z" fill="#35a3dc" stroke="#1c6a98" stroke-width=".8"/><path d="M5 8 L10 10" stroke="#222" stroke-width=".8"/></svg>
<div class="tr" style="left:32px;top:450.5px">Revolve1</div>
<svg class="a" style="left:4px;top:469px" width="4" height="6"><path d="M0 0 L3.5 3 L0 6Z" fill="#444"/></svg>
<svg class="a" style="left:16px;top:465px" width="14" height="14"><path d="M3 3 Q10 0 12 5 Q14 11 7 12 Q2 12 2 9 Q5 10 9 8 Q10 5 5 5Z" fill="#35a3dc" stroke="#1c6a98" stroke-width=".8"/><path d="M5 8 L10 10" stroke="#222" stroke-width=".8"/></svg>
<div class="tr" style="left:32px;top:466.5px">Revolve2</div>
<!-- MENU BAR -->
<div id="topline" class="a"></div>
<div id="menubar" class="a"></div>
<div class="a" style="left:82px;top:26px;width:1198px;height:1px;background:#cdc9c9"></div>
<div class="a" style="left:-2px;top:5px;width:84px;height:24px;background:#f6f2f2;border:1px solid #e3dfdf;box-shadow:1px 1px 1px #d9d5d5"></div>
<svg class="a" style="left:0;top:12px" width="8" height="13" viewBox="0 0 8 13"><path d="M-2 3 Q3 0 5 2 M-1 6 Q5 8 3 10 Q0 12 -2 12" stroke="#d9473a" stroke-width="1.8" fill="none"/></svg>
<div class="t" style="left:9px;top:13px;font-size:11.3px;line-height:12px;letter-spacing:0;font-weight:bold;font-style:italic;color:#d84a3c">SOLID</div>
<div class="t" style="left:43px;top:13px;font-size:11.3px;line-height:12px;letter-spacing:-0.2px;font-style:italic;color:#e27464;transform:scaleX(.84);transform-origin:0 50%">WORKS</div>
<svg class="a" style="left:86px;top:11px" width="7" height="11"><path d="M6 0 L0 5.5 L6 11Z" fill="#333"/></svg>
<div class="t mn" style="left:102px">File</div>
<div class="t mn" style="left:126px">Edit</div>
<div class="t mn" style="left:151px">View</div>
<div class="t mn" style="left:180px">Insert</div>
<div class="t mn" style="left:211px">Tools</div>
<div class="t mn" style="left:241px">Window</div>
<div class="t mn" style="left:283px">Help</div>
<svg class="a" style="left:317px;top:12px" width="12" height="10"><path d="M1 5 H7 M5 2 L8 5 L5 8 M8.5 1.5 V8.5 M10 2 V8" stroke="#333" stroke-width="1.4" fill="none"/></svg>
<div class="a" style="left:333px;top:5px;width:1px;height:22px;background:#cdc9c9"></div>
<div class="t" style="left:815px;top:12px;font-size:8.5px;color:#333">Part2 *</div>
<div class="a" style="left:1061px;top:8px;width:141px;height:17px;border:1px solid #5a5858;background:#f3f1f1;box-shadow:inset 0 0 0 1px #dcdada"></div>
<div class="a" style="left:1065px;top:11px;width:11px;height:11px;background:#2d2d2d"></div>
<svg class="a" style="left:1066px;top:12px" width="9" height="9"><path d="M2 2 L5 4.5 L2 7" stroke="#fff" stroke-width="1.2" fill="none"/><path d="M5 7.5 H8" stroke="#fff" stroke-width="1"/></svg>
<div class="t" style="left:1080px;top:12px;font-size:8.5px;color:#8a8888;letter-spacing:-0.1px">Search Commands</div>
<svg class="a" style="left:1179px;top:10px" width="22" height="13"><circle cx="9" cy="5.5" r="4" stroke="#6d9fc4" stroke-width="1.3" fill="#e8f1f8"/><path d="M6 8.5 L2 12" stroke="#5d8fb4" stroke-width="1.8"/><path d="M15.5 6 L19.5 6 L17.5 8.5Z" fill="#333"/></svg>
<svg class="a" style="left:1208px;top:9px" width="12" height="16"><circle cx="6" cy="4.5" r="3" stroke="#a9a7a7" stroke-width="1" fill="#f0eeee"/><path d="M1 15 Q1 8.5 6 8.5 Q11 8.5 11 15Z" stroke="#a9a7a7" stroke-width="1" fill="#f0eeee"/></svg>
<div class="t" style="left:1226px;top:10px;font-size:12px;line-height:14px;font-weight:bold;color:#333">?</div>
<svg class="a" style="left:1243px;top:14px" width="6" height="4"><path d="M0 0 H6 L3 3Z" fill="#333"/></svg>
<div class="a" style="left:1256px;top:18px;width:8px;height:2px;background:#333"></div>
<div class="a" style="left:1272px;top:9px;width:10px;height:10px;border:1.5px solid #333;border-top-width:2px"></div>

<!-- RIBBON -->
<div class="a" style="left:161px;top:33px;width:1px;height:50px;background:#e2dede"></div>
<div class="a" style="left:350px;top:33px;width:1px;height:50px;background:#e2dede"></div>
<div class="a" style="left:511px;top:33px;width:1px;height:50px;background:#e2dede"></div>
<div class="a" style="left:587px;top:31px;width:43px;height:55px;background:#ccc8c8;border:1px solid #a9a5a5"></div>

<!-- large icons -->
<svg class="a" style="left:-8px;top:39px" width="15" height="16"><path d="M1 4 L8 1 L14 4 L14 13 L8 15.5 L1 13Z" fill="#dfe5e9" stroke="#6c7880" stroke-width="1"/><path d="M8 6 L14 4 L14 13 L8 15.5Z" fill="#b9c4cb" stroke="#6c7880" stroke-width=".8"/><circle cx="5" cy="9" r="2.6" fill="#3a9ad3"/></svg>
<svg class="a" style="left:34px;top:38px" width="17" height="18"><path d="M4 2 Q14 0 15 8 Q16 16 8 16 Q1 16 2 11 Q6 13 10 10 Q12 6 4 6Z" fill="#35a3dc" stroke="#1c6a98" stroke-width="1"/><path d="M6 9 L12 12" stroke="#222" stroke-width="1"/></svg>
<svg class="a" style="left:64px;top:33px" width="15" height="14"><path d="M2 9 Q1 13 5 12 Q8 11 7 6 Q7 2 11 2 Q14 2 13 5 Q12 6 10 6 Q9 9 8 11 Q6 14 3 13" fill="none" stroke="#2f95cf" stroke-width="3"/></svg>
<svg class="a" style="left:65px;top:51px" width="12" height="15"><path d="M4 1 H8 L9 8 L11 12 Q6 15 1 12 L3 8Z" fill="#2f95cf" stroke="#1f5f85" stroke-width=".8"/></svg>
<svg class="a" style="left:64px;top:70px" width="14" height="13"><path d="M1 6 L7 2 L13 5 L13 9 L7 12 L1 10Z" fill="#f2f0f0" stroke="#7a7a7a" stroke-width="1"/><path d="M1 6 L7 9 L13 5 M7 9 V12 M4 4 L10 7" stroke="#7a7a7a" stroke-width=".8" fill="none"/></svg>
<svg class="a" style="left:175px;top:40px" width="14" height="15"><path d="M2 3 L7 1 L12 3 L12 12 L7 14 L2 12Z" fill="#c5cfd6" stroke="#7d8891" stroke-width="1"/><rect x="5" y="5" width="5" height="5" fill="#e8f2f8" stroke="#3a9ad3" stroke-width="1"/></svg>
<svg class="a" style="left:210px;top:34px" width="16" height="15"><path d="M2 6 Q2 2 7 2 Q12 2 12 6 L12 11 Q12 14 7 14 Q2 14 2 11Z" fill="#c9d1d7" stroke="#6f7a82" stroke-width="1"/><circle cx="7" cy="9" r="2.5" fill="#2f95cf"/><path d="M10 5 L15 1" stroke="#222" stroke-width="1.6"/><path d="M12 1 L14 0 L15 3" stroke="#e8c020" stroke-width="1.2" fill="none"/></svg>
<svg class="a" style="left:246px;top:39px" width="14" height="15"><path d="M1 5 Q7 0 13 5 L13 13 L9 14 L9 7 Q7 5 5 7 L5 14 L1 13Z" fill="#a9c9dd" stroke="#51636f" stroke-width="1"/><path d="M5 7 Q7 5 9 7 L9 14 L5 14Z" fill="#3a9ad3"/></svg>
<svg class="a" style="left:355px;top:34px" width="15" height="14"><path d="M1 4 L7 1 L14 4 L14 10 L7 13 L1 10Z" fill="#f4f4f4" stroke="#777" stroke-width="1"/><path d="M7 1 L14 4 L13 8 Q9 8 7 5Z" fill="#3a9ad3"/></svg>
<svg class="a" style="left:384px;top:33px" width="15" height="15"><path d="M1 1 L6 4 L1 7Z M8 1 L13 4 L8 7Z M1 8 L6 11 L1 14Z M8 8 L13 11 L8 14Z" fill="none" stroke="#2a7fb3" stroke-width="1.4"/><path d="M1 1 L6 4 L1 7Z M1 8 L6 11 L1 14Z" fill="#3a9ad3"/></svg>
<svg class="a" style="left:526px;top:33px" width="16" height="15"><circle cx="2.5" cy="2.5" r="2" fill="#3a9ad3" stroke="#1b5f88"/><path d="M6 4 L14 2 L14 12 L6 14Z" fill="#3a9ad3" stroke="#1b6a99" stroke-width=".8"/><path d="M10 2 V15" stroke="#1b5f88"/></svg>
<svg class="a" style="left:562px;top:33px" width="15" height="15"><path d="M2 2 Q5 1 4 5 Q2 10 5 12 Q8 14 11 12 Q13 10 11 5 Q10 1 13 2" fill="none" stroke="#3a9ad3" stroke-width="1.3"/></svg>
<svg class="a" style="left:600px;top:39px" width="18" height="14"><path d="M2 6 L12 1 L16 5 L6 10Z" fill="#e8c431" stroke="#8a7020" stroke-width=".8"/><path d="M5 4 L6 6 M8 3 L9 5 M11 2 L12 4" stroke="#6a5010" stroke-width=".7"/><path d="M2 9 L12 13 L13 11 L16 13 L13 14Z" fill="#3a7fc3" stroke="#2a5f93" stroke-width="1.2"/></svg>
<!-- small icons col2 -->
<svg class="a" style="left:274px;top:33px" width="15" height="15"><path d="M2 3 L8 1 L13 3 L13 12 L8 14 L2 12Z" fill="#cdd5db" stroke="#6f7a82" stroke-width="1"/><path d="M5 13 Q5 6 12 4 L12 10 Q9 10 9 13Z" fill="#3a9ad3"/></svg>
<svg class="a" style="left:274px;top:51px" width="15" height="15"><path d="M2 3 L8 1 L13 3 L13 12 L8 14 L2 12Z" fill="#e9eef2" stroke="#6f7a82" stroke-width="1"/><path d="M8 4 L11 4 L11 13 L8 13Z" fill="#3a9ad3" stroke="#333" stroke-width=".6"/></svg>
<svg class="a" style="left:273px;top:69px" width="16" height="14"><path d="M1 6 L8 2 L15 5 L15 9 L8 13 L1 10Z" fill="#9fd0ee" stroke="#2f6f9a" stroke-width="1"/><path d="M3 6 L6 4.5 M9 4 L12 5.5" stroke="#2f6f9a" stroke-width="1"/><path d="M1 6 L8 9 L15 5 M8 9 V13" stroke="#27628a" stroke-width=".8" fill="none"/></svg>
<!-- col3 -->
<svg class="a" style="left:409px;top:33px" width="15" height="15"><path d="M2 12 L8 8 L8 2 L12 1 L13 10 L6 14Z" fill="#b9cfdc" stroke="#62717b" stroke-width="1"/><path d="M9 3 L11 2 L11 10 L9 11Z" fill="#3a9ad3"/></svg>
<svg class="a" style="left:409px;top:51px" width="15" height="14"><path d="M1 4 L6 1 L13 3 L14 10 L8 13 L1 10Z" fill="#3a9ad3" stroke="#27628a" stroke-width="1"/><path d="M8 6 L14 4 L14 10 L8 13Z" fill="#f2f2f2" stroke="#777" stroke-width=".8"/></svg>
<svg class="a" style="left:409px;top:69px" width="15" height="15"><path d="M2 3 L8 1 L13 4 L13 12 L7 14 L2 11Z" fill="#e6ecf0" stroke="#62717b" stroke-width="1"/><path d="M6 4 L11 7 L8 12 L6 8Z" fill="#3a9ad3"/></svg>
<svg class="a" style="left:454px;top:33px" width="15" height="14"><ellipse cx="7.5" cy="3.5" rx="6" ry="2.5" fill="#e4ecf1" stroke="#62717b"/><path d="M1.5 3.5 V11 Q7.5 15 13.5 11 V3.5" fill="#c6d9e5" stroke="#62717b"/><path d="M3 7 H6 V11 H3Z M8 7 H12 V11 H8Z" fill="#3a9ad3"/></svg>
<svg class="a" style="left:454px;top:51px" width="15" height="15"><path d="M6 1 L12 3 L12 9 L6 8Z" fill="#f0f0f0" stroke="#666"/><path d="M1 7 L8 5 L8 13 L1 14Z" fill="#3a9ad3" stroke="#27628a"/></svg>
<svg class="a" style="left:454px;top:69px" width="16" height="14"><path d="M1 2 L6 7 L1 12Z" fill="#3a9ad3" stroke="#27628a"/><path d="M8 0 V14" stroke="#333" stroke-width="1.2"/><path d="M15 2 L10 7 L15 12" fill="none" stroke="#555" stroke-width="1.2"/></svg>

<div class="rl" style="left:41.5px;top:53.6px">Revolved</div>
<div class="rl" style="left:41.5px;top:63.0px">Boss/Base</div>
<div class="rl" style="left:182px;top:53.6px">Extruded</div>
<div class="rl" style="left:182px;top:63.0px">Cut</div>
<div class="rl" style="left:218px;top:49.0px">Hole</div>
<div class="rl" style="left:218px;top:58.0px">Wizard</div>
<div class="rl" style="left:253.6px;top:53.6px">Revolved</div>
<div class="rl" style="left:253.6px;top:63.0px">Cut</div>
<div class="rl" style="left:362.5px;top:49.0px">Fillet</div>
<div class="rl" style="left:391.4px;top:49.0px">Linear</div>
<div class="rl" style="left:391.4px;top:58.0px">Pattern</div>
<div class="rl" style="left:533.6px;top:49.0px">Reference</div>
<div class="rl" style="left:533.6px;top:58.0px">Geometry</div>
<div class="rl" style="left:570.3px;top:49.0px">Curves</div>
<div class="rl" style="left:608.5px;top:53.6px">Instant3D</div>
<div class="rs" style="right:1264px;top:53.6px;transform:scaleX(.88);transform-origin:100% 50%">uded</div>
<div class="rs" style="right:1263px;top:63px;transform:scaleX(.88);transform-origin:100% 50%">/Base</div>
<div class="rs" style="left:82px;top:35.6px">Swept Boss/Base</div>
<div class="rs" style="left:82px;top:53.6px">Lofted Boss/Base</div>
<div class="rs" style="left:82px;top:71.6px">Boundary Boss/Base</div>
<div class="rs" style="left:292px;top:35.6px">Swept Cut</div>
<div class="rs" style="left:292px;top:53.6px">Lofted Cut</div>
<div class="rs" style="left:292px;top:71.6px">Boundary Cut</div>
<div class="rs" style="left:427.5px;top:35.6px">Rib</div>
<div class="rs" style="left:427.5px;top:53.6px">Draft</div>
<div class="rs" style="left:427.5px;top:71.6px">Shell</div>
<div class="rs" style="left:472.3px;top:35.6px">Wrap</div>
<div class="rs" style="left:472.3px;top:53.6px">Intersect</div>
<div class="rs" style="left:472.3px;top:71.6px">Mirror</div>
<svg class="a" style="left:215.5px;top:76.5px" width="5" height="3"><path d="M0 0H5L2.5 3Z" fill="#333"/></svg>
<svg class="a" style="left:360.0px;top:76.5px" width="5" height="3"><path d="M0 0H5L2.5 3Z" fill="#333"/></svg>
<svg class="a" style="left:388.9px;top:76.5px" width="5" height="3"><path d="M0 0H5L2.5 3Z" fill="#333"/></svg>
<svg class="a" style="left:531.1px;top:76.5px" width="5" height="3"><path d="M0 0H5L2.5 3Z" fill="#333"/></svg>
<svg class="a" style="left:567.8px;top:76.5px" width="5" height="3"><path d="M0 0H5L2.5 3Z" fill="#333"/></svg>
<div class="a" style="left:0;top:102px;width:951px;height:1px;background:#b4b0b0"></div>
<div class="tab act" style="left:0px;width:19px;height:17px"><span style="position:absolute;right:3px">ares</span></div>
<div class="tab" style="left:19px;width:40px">Sketch</div>
<div class="tab" style="left:58px;width:51px">Sketch Ink</div>
<div class="tab" style="left:108px;width:42px">Surfaces</div>
<div class="tab" style="left:149px;width:55px">Sheet Metal</div>
<div class="tab" style="left:203px;width:75px">Structure System</div>
<div class="tab" style="left:277px;width:55px">Weldments</div>
<div class="tab" style="left:331px;width:52px">Mold Tools</div>
<div class="tab" style="left:382px;width:70px">Mesh Modeling</div>
<div class="tab" style="left:451px;width:68px">Data Migration</div>
<div class="tab" style="left:518px;width:61px">Direct Editing</div>
<div class="tab" style="left:578px;width:41px">Markup</div>
<div class="tab" style="left:618px;width:42px">Evaluate</div>
<div class="tab" style="left:659px;width:77px">MBD Dimensions</div>
<div class="tab" style="left:735px;width:94px">SOLIDWORKS Add-Ins</div>
<div class="tab" style="left:828px;width:39px">MBD</div>
<div class="tab" style="left:866px;width:87px">SOLIDWORKS CAM</div>
<!-- BOTTOM TABS -->
<div class="a" style="left:0;top:697px;width:1280px;height:1px;background:#a9a5a5"></div>
<div class="a" style="left:0;top:698px;width:43px;height:11px;background:#cfcbcb;border-top:1px solid #555"></div>
<svg class="a" style="left:2px;top:700px" width="40" height="8"><path d="M2 0 V7 M6 0 L3 3.5 L6 7 M15 0 L12 3.5 L15 7 M22 0 L25 3.5 L22 7 M31 0 L34 3.5 L31 7 M36 0 V7" stroke="#aaa" stroke-width="1" fill="none"/></svg>
<div class="a" style="left:43px;top:698px;width:40px;height:11px;background:#fdf8f8"></div>
<div class="t" style="left:52px;top:698.5px;font-weight:bold;font-size:8.5px;color:#222">Model</div>
<div class="a" style="left:83px;top:698px;width:47px;height:11px;background:#e6e2e2;border:1px solid #c4c0c0;border-top:none"></div>
<div class="t" style="left:90px;top:698.5px;font-size:8.5px;color:#333">3D Views</div>
<div class="a" style="left:130px;top:698px;width:77px;height:11px;background:#e6e2e2;border:1px solid #c4c0c0;border-top:none"></div>
<div class="t" style="left:137px;top:698.5px;font-size:8.5px;color:#333">Motion Study 1</div>
<div class="a" style="left:0;top:709px;width:1280px;height:1px;background:#d6d2d2"></div>
<div class="t" style="left:-1px;top:711px;font-size:8.2px;letter-spacing:-0.2px;color:#333">WORKS Premium 2020 SP0.0</div>
<div class="t" style="left:1092px;top:711.5px;font-size:8.5px;color:#333">Editing Part</div>
<div class="t" style="left:1224px;top:711.5px;font-size:8.5px;color:#333">IPS</div>
<svg class="a" style="left:1253px;top:715px" width="4" height="3"><path d="M0 3 L2 0 L4 3Z" fill="#333"/></svg><div class="t" style="left:1277px;top:711px;font-size:8.5px">(</div>

</body></html>
